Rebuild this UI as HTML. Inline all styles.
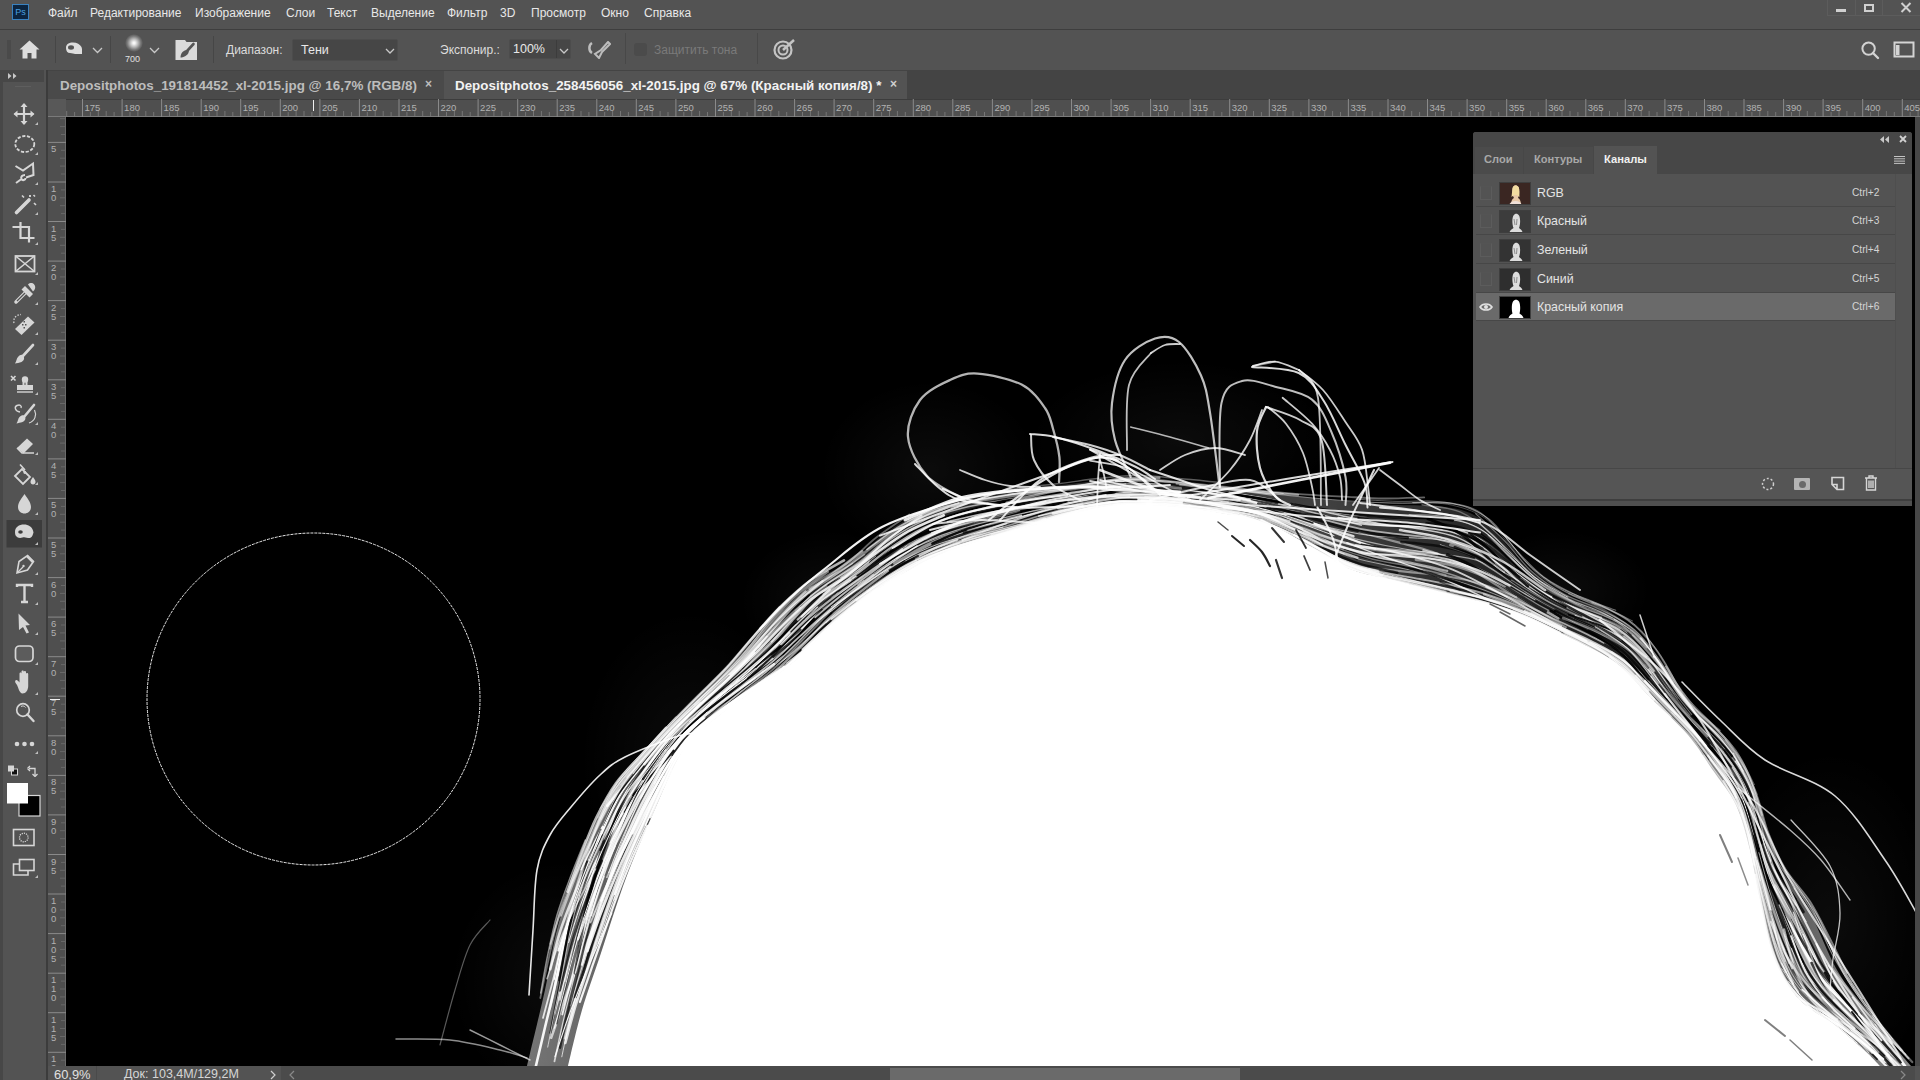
<!DOCTYPE html>
<html><head><meta charset="utf-8">
<style>
*{margin:0;padding:0;box-sizing:border-box}
html,body{width:1920px;height:1080px;overflow:hidden;background:#535353;font-family:"Liberation Sans",sans-serif;color:#e6e6e6}
.abs{position:absolute}
#menubar{left:0;top:0;width:1920px;height:29px;background:#535353}
#menubar .m{position:absolute;top:6px;font-size:12px;color:#e8e8e8;white-space:nowrap}
#sep1{left:0;top:29px;width:1920px;height:1px;background:#3e3e3e}
#optbar{left:0;top:30px;width:1920px;height:40px;background:#535353}
#tabbar{left:48px;top:70px;width:1872px;height:29px;background:#444444}
#toolbar{left:3px;top:70px;width:43px;height:996px;background:#535353}
#leftgap{left:0;top:70px;width:3px;height:1010px;background:#474747}
#gap2{left:46px;top:70px;width:2px;height:1010px;background:#3c3c3c}
#rulerTop{left:48px;top:99px;width:1872px;height:18px;background:#4f4f4f;border-top:1px solid #3c3c3c}
#rulerLeft{left:48px;top:117px;width:18px;height:949px;background:#4f4f4f}
#canvas{left:66px;top:117px;width:1849px;height:949px;background:#000;overflow:hidden}
#vscroll{left:1915px;top:117px;width:5px;height:949px;background:#474747}
#status{left:48px;top:1066px;width:1872px;height:14px;background:#535353}
</style></head><body>
<div id="menubar" class="abs">
  <div class="abs" style="left:12px;top:4px;width:17px;height:16px;background:#0c2540;border:1px solid #3a82c0;color:#4aa0e0;font-size:9px;line-height:14px;text-align:center">Ps</div>
  <span class="m" style="left:48px">Файл</span>
  <span class="m" style="left:90px">Редактирование</span>
  <span class="m" style="left:195px">Изображение</span>
  <span class="m" style="left:286px">Слои</span>
  <span class="m" style="left:327px">Текст</span>
  <span class="m" style="left:371px">Выделение</span>
  <span class="m" style="left:447px">Фильтр</span>
  <span class="m" style="left:500px">3D</span>
  <span class="m" style="left:531px">Просмотр</span>
  <span class="m" style="left:601px">Окно</span>
  <span class="m" style="left:644px">Справка</span>
  <div class="abs" style="left:1827px;top:0;width:93px;height:16px;border-left:1px solid #5c5c5c;border-bottom:1px solid #5c5c5c"></div>
  <div class="abs" style="left:1855px;top:0;width:1px;height:16px;background:#5c5c5c"></div>
  <div class="abs" style="left:1882px;top:0;width:1px;height:16px;background:#5c5c5c"></div>
  <div class="abs" style="left:1836px;top:9px;width:10px;height:3px;background:#d0d0d0"></div>
  <div class="abs" style="left:1864px;top:4px;width:10px;height:8px;border:2px solid #d0d0d0"></div>
  <svg class="abs" style="left:1900px;top:2px" width="12" height="11" viewBox="0 0 12 11"><path d="M1.5 1 L10.5 10 M10.5 1 L1.5 10" stroke="#d0d0d0" stroke-width="2"/></svg>
</div>
<div id="sep1" class="abs"></div>
<div id="optbar" class="abs">
  <div class="abs" style="left:7px;top:10px;width:4px;height:19px;background:#4a4a4a"></div>
  <svg class="abs" style="left:19px;top:10px" width="21" height="19" viewBox="0 0 21 19"><path d="M10.5 0.5 L20.5 9.5 L17.5 9.5 L17.5 18.5 L12.5 18.5 L12.5 13 L8.5 13 L8.5 18.5 L3.5 18.5 L3.5 9.5 L0.5 9.5 Z" fill="#dedede"/></svg>
  <div class="abs" style="left:55px;top:6px;width:1px;height:27px;background:#464646"></div>
  <svg class="abs" style="left:65px;top:12px" width="18" height="13" viewBox="0 0 18 13"><path d="M1 6 C1 2 4 0.5 8 0.5 C12 0.5 15 2.5 16.5 5 L17 7 L17 12 L10 12 C9 12 7 11 5 11 C2.5 11 1 9 1 6 Z" fill="#dedede"/><ellipse cx="6" cy="5.5" rx="3" ry="2.2" fill="#535353"/></svg>
  <svg class="abs" style="left:92px;top:17px" width="11" height="7" viewBox="0 0 11 7"><path d="M1 1 L5.5 5.5 L10 1" stroke="#c8c8c8" stroke-width="1.3" fill="none"/></svg>
  <div class="abs" style="left:110px;top:6px;width:1px;height:27px;background:#464646"></div>
  <div class="abs" style="left:125px;top:4px;width:18px;height:18px;border-radius:50%;background:radial-gradient(circle closest-side,#ffffff 0%,#f0f0f0 15%,#b8b8b8 45%,#7a7a7a 75%,rgba(83,83,83,0) 100%)"></div>
  <div class="abs" style="left:125px;top:24px;font-size:9px;color:#e0e0e0">700</div>
  <svg class="abs" style="left:149px;top:17px" width="11" height="7" viewBox="0 0 11 7"><path d="M1 1 L5.5 5.5 L10 1" stroke="#c8c8c8" stroke-width="1.3" fill="none"/></svg>
  <svg class="abs" style="left:175px;top:9px" width="23" height="22" viewBox="0 0 23 22"><path d="M0.5 1 L10 1 L11.5 3 L22 3 L22 21 L0.5 21 Z" fill="#dadada"/><path d="M18.5 5 L12.5 11.5" stroke="#555" stroke-width="2.6" stroke-linecap="round"/><path d="M13.5 11 C14.5 13 13 15.5 10.5 17 C8.5 18 6.5 18.5 5.5 18.5 C5.5 17 6 14.5 7.5 13 C9 11.5 12 10 13.5 11 Z" fill="#555"/></svg>
  <div class="abs" style="left:213px;top:6px;width:1px;height:27px;background:#464646"></div>
  <span class="abs" style="left:226px;top:13px;font-size:12px;color:#dcdcdc">Диапазон:</span>
  <div class="abs" style="left:292px;top:9px;width:106px;height:22px;background:#464646;border:1px solid #4c4c4c;border-radius:2px"></div>
  <span class="abs" style="left:301px;top:13px;font-size:12.5px;color:#e8e8e8">Тени</span>
  <svg class="abs" style="left:385px;top:18px" width="10" height="7" viewBox="0 0 10 7"><path d="M1 1 L5 5 L9 1" stroke="#c8c8c8" stroke-width="1.3" fill="none"/></svg>
  <span class="abs" style="left:440px;top:13px;font-size:12px;color:#dcdcdc">Экспонир.:</span>
  <div class="abs" style="left:509px;top:9px;width:62px;height:20px;background:#464646;border:1px solid #4c4c4c;border-radius:2px"></div>
  <div class="abs" style="left:556px;top:10px;width:1px;height:18px;background:#3c3c3c"></div>
  <span class="abs" style="left:513px;top:12px;font-size:12.5px;color:#e8e8e8">100%</span>
  <svg class="abs" style="left:559px;top:18px" width="10" height="7" viewBox="0 0 10 7"><path d="M1 1 L5 5 L9 1" stroke="#c8c8c8" stroke-width="1.3" fill="none"/></svg>
  <svg class="abs" style="left:587px;top:11px" width="24" height="18" viewBox="0 0 24 18"><path d="M5 2 C1.5 4 1.5 10 5 12" stroke="#bdbdbd" stroke-width="2.5" fill="none"/><path d="M21 1 L23 3 L15 11 L12 17 L8 13 L14 9 Z" stroke="#bdbdbd" stroke-width="2" fill="none"/></svg>
  <div class="abs" style="left:625px;top:3px;width:1px;height:31px;background:#484848"></div>
  <div class="abs" style="left:634px;top:13px;width:13px;height:13px;border-radius:3px;background:#4b4b4b"></div>
  <span class="abs" style="left:654px;top:13px;font-size:12px;color:#7a7a7a">Защитить тона</span>
  <div class="abs" style="left:757px;top:3px;width:1px;height:31px;background:#484848"></div>
  <svg class="abs" style="left:773px;top:9px" width="23" height="21" viewBox="0 0 23 21"><circle cx="10" cy="11" r="8.5" stroke="#c4c4c4" stroke-width="2.2" fill="none"/><circle cx="10" cy="11" r="4.5" stroke="#c4c4c4" stroke-width="2" fill="none"/><path d="M10 11 L21 1" stroke="#c4c4c4" stroke-width="2.5"/></svg>
  <svg class="abs" style="left:1859px;top:10px" width="22" height="20" viewBox="0 0 22 20"><circle cx="9.6" cy="8.6" r="6.2" stroke="#d2d2d2" stroke-width="2" fill="none"/><path d="M14 13 L19 18" stroke="#d2d2d2" stroke-width="2.4" stroke-linecap="round"/></svg>
  <svg class="abs" style="left:1893px;top:11px" width="22" height="17" viewBox="0 0 22 17"><rect x="1.5" y="1.5" width="19" height="14" stroke="#d4d4d4" stroke-width="2" fill="none"/><rect x="3" y="4" width="3.5" height="10" fill="#d4d4d4"/></svg>
</div>
<div id="leftgap" class="abs"></div>
<div id="toolbar" class="abs">
  <div class="abs" style="left:0;top:0;width:41px;height:12px;background:#474747"></div>
  <svg class="abs" style="left:5px;top:3px" width="10" height="6" viewBox="0 0 10 6"><path d="M0 0 L3.5 3 L0 6 Z M5 0 L8.5 3 L5 6 Z" fill="#c8c8c8"/></svg>
  <div class="abs" style="left:12px;top:16px;width:16px;height:1px;background:#5e5e5e"></div>
</div>
<div id="gap2" class="abs"></div>
<svg class="abs" style="left:0;top:0" width="48" height="1080" viewBox="0 0 48 1080"><path d="M24 104 V124 M14.5 114 H33.5" stroke="#d6d6d6" stroke-width="2.2"/><path d="M24 103 L20.5 107 H27.5 Z M24 125 L20.5 121 H27.5 Z M13.5 114 L17.5 110.5 V117.5 Z M34.5 114 L30.5 110.5 V117.5 Z" fill="#d6d6d6"/><path d="M35 125 L38 125 L38 122 Z" fill="#bdbdbd"/><ellipse cx="24.8" cy="144" rx="9.5" ry="8" fill="none" stroke="#d6d6d6" stroke-width="1.8" stroke-dasharray="3.2 1.6"/><path d="M35 155 L38 155 L38 152 Z" fill="#bdbdbd"/><path d="M15.5 166 L23 170.5 L33 163.5 L33.5 175 L26 177.5 M25 175 C22 175 20.5 177 21.5 179 C22.5 181 25.5 180 25.5 178 M21.5 179 L16 183" fill="none" stroke="#d6d6d6" stroke-width="2"/><path d="M35 185 L38 185 L38 182 Z" fill="#bdbdbd"/><path d="M16.5 212.5 L29 200" stroke="#d6d6d6" stroke-width="3.6" stroke-linecap="round"/><path d="M22 195.5 L24 197.5 M33.5 195 L35 196.5 M34 203 L36 205 M30 195 V197 M29 196 H31" stroke="#d6d6d6" stroke-width="1.6"/><path d="M35 215 L38 215 L38 212 Z" fill="#bdbdbd"/><path d="M12.5 227 H29 V242.5 M20.5 222 V238 H34.5" fill="none" stroke="#d6d6d6" stroke-width="2.2"/><path d="M35 245 L38 245 L38 242 Z" fill="#bdbdbd"/><rect x="15.5" y="256" width="19" height="15.5" fill="none" stroke="#d6d6d6" stroke-width="1.8"/><path d="M15.5 256 L34.5 271.5 M34.5 256 L15.5 271.5" stroke="#d6d6d6" stroke-width="1.6"/><path d="M35 275 L38 275 L38 272 Z" fill="#bdbdbd"/><path d="M16 302 L27 291" stroke="#d6d6d6" stroke-width="3.5" stroke-linecap="round" fill="none"/><path d="M17 301 L27 291" stroke="#535353" stroke-width="1.2"/><path d="M25 286 L33 294 L29.5 297.5 L21.5 289.5 Z M28 284.5 C30 282.5 33 282.5 34.5 285 C36 287 35 290 33 291.5 Z" fill="#d6d6d6"/><path d="M35 305 L38 305 L38 302 Z" fill="#bdbdbd"/><path d="M15 329 L28 316.5 L34.5 322.5 L21.5 335 Z" fill="#d6d6d6"/><path d="M22 324 h1.5v1.5h-1.5z M25 324 h1.5v1.5h-1.5z M23.5 321 h1.5v1.5h-1.5z M23.5 327 h1.5v1.5h-1.5z" fill="#535353"/><path d="M14 323 C13 318 16 315 21 314.5" fill="none" stroke="#d6d6d6" stroke-width="1.3" stroke-dasharray="1.5 1.5"/><path d="M35 335 L38 335 L38 332 Z" fill="#bdbdbd"/><path d="M33 345 L22 357" stroke="#d6d6d6" stroke-width="2.6" stroke-linecap="round"/><path d="M22.5 355 C25 357 24.5 360.5 21.5 362 C19.5 363 16.5 363 15 363.5 C16.5 361.5 16.5 358.5 18 357 C19.5 355.5 21 354.5 22.5 355 Z" fill="#d6d6d6"/><path d="M35 365 L38 365 L38 362 Z" fill="#bdbdbd"/><circle cx="25" cy="379.5" r="3.2" fill="#d6d6d6"/><path d="M23.5 381 V385 M26.5 381 V385" stroke="#d6d6d6" stroke-width="2"/><path d="M17 385 H33 V390 H17 Z" fill="#d6d6d6"/><path d="M17 392 H33" stroke="#d6d6d6" stroke-width="1.4"/><path d="M11 376 L15.5 380.5 M15.5 376 L11 380.5" stroke="#d6d6d6" stroke-width="1.6"/><path d="M35 395 L38 395 L38 392 Z" fill="#bdbdbd"/><path d="M34 405 L24 417" stroke="#d6d6d6" stroke-width="2.6" stroke-linecap="round"/><path d="M24 415.5 C26.5 417.5 25.5 421 22.5 422 C20.5 422.5 18 423 16.5 423.5 C18 421.5 18 418.5 19.5 417 C21 415.5 22.5 415 24 415.5 Z" fill="#d6d6d6"/><path d="M20 412 C15 411 14 407 17 405.5 C20 404 22 406 21 408" fill="none" stroke="#d6d6d6" stroke-width="1.4"/><path d="M34.5 410 C37 415 35 421 29 423" fill="none" stroke="#d6d6d6" stroke-width="1.2"/><path d="M35 425 L38 425 L38 422 Z" fill="#bdbdbd"/><path d="M17 448 L27 438.5 L33 444 L23.5 453.5 Z" fill="#d6d6d6"/><path d="M17 448 L22 453 H34" fill="none" stroke="#d6d6d6" stroke-width="1.5"/><path d="M35 455 L38 455 L38 452 Z" fill="#bdbdbd"/><path d="M15 476 L22 469 L30 477 L23 484 Z" fill="none" stroke="#d6d6d6" stroke-width="1.8"/><path d="M20 464.5 L25 470" stroke="#d6d6d6" stroke-width="1.6"/><circle cx="24.8" cy="472.5" r="1.4" fill="#d6d6d6"/><path d="M33 477 C34.5 479 35.5 480.5 35.5 482 C35.5 483.5 34.5 484.5 33 484.5 C31.5 484.5 30.5 483.5 30.5 482 C30.5 480.5 31.5 479 33 477 Z" fill="#d6d6d6"/><path d="M35 485 L38 485 L38 482 Z" fill="#bdbdbd"/><path d="M24.5 494 C27 498 31 502 31 507 C31 511 28 513.5 24.5 513.5 C21 513.5 18 511 18 507 C18 502 22 498 24.5 494 Z" fill="#d6d6d6"/><path d="M35 515 L38 515 L38 512 Z" fill="#bdbdbd"/><rect x="6.5" y="520" width="35.5" height="27.5" fill="#3c3c3c"/><path d="M15 532 C15 527 19 524.5 24 524.5 C28.5 524.5 32 527 33 530.5 L33.5 532.5 C33 534 32.5 537 30 538 C28 538.5 25 536.5 22.5 537.5 C20 538.5 17.5 538 16 536 C15.3 535 15 533.5 15 532 Z" fill="#d6d6d6"/><ellipse cx="20.5" cy="532" rx="2.3" ry="1.8" fill="#3c3c3c"/><path d="M35 545 L38 545 L38 542 Z" fill="#bdbdbd"/><path d="M17 573 L19 561.5 L27.5 555.5 L33.5 561.5 L27.5 570 Z" fill="none" stroke="#d6d6d6" stroke-width="1.6"/><path d="M27 556 L33 562" stroke="#d6d6d6" stroke-width="2.5"/><path d="M17.5 572.5 L23 567" stroke="#d6d6d6" stroke-width="1.2"/><circle cx="23.5" cy="566" r="1.2" fill="#d6d6d6"/><path d="M35 575 L38 575 L38 572 Z" fill="#bdbdbd"/><path d="M17 587 V585 H32 V587 M24.5 585.5 V602 M21 602 H28" fill="none" stroke="#d6d6d6" stroke-width="2.4"/><path d="M35 605 L38 605 L38 602 Z" fill="#bdbdbd"/><path d="M18.5 613.5 L30 625 L25.5 625.5 L29 632.5 L26.5 633.5 L23 627 L19 630 Z" fill="#d6d6d6"/><path d="M35 635 L38 635 L38 632 Z" fill="#bdbdbd"/><rect x="15.5" y="646" width="17.5" height="15.5" rx="4" fill="#5c5c5c" stroke="#d6d6d6" stroke-width="1.7"/><path d="M35 665 L38 665 L38 662 Z" fill="#bdbdbd"/><path d="M17 685 C15.5 683 14.5 681.5 15.5 680.5 C16.5 679.5 18 680.5 19.5 682.5 V673.5 C19.5 672 21.5 672 21.5 673.5 V680 V671.5 C21.5 670 23.8 670 23.8 671.5 V680 V672 C23.8 670.5 26 670.5 26 672 V680.5 V674 C26 672.5 28.2 672.5 28.2 674 V686 C28.2 690 26 693.5 22.5 693.5 C19.5 693.5 18.5 688 17 685 Z" fill="#d6d6d6"/><path d="M35 695 L38 695 L38 692 Z" fill="#bdbdbd"/><circle cx="23" cy="710" r="6.3" fill="none" stroke="#d6d6d6" stroke-width="1.7"/><path d="M27.5 714.5 L33.5 721" stroke="#d6d6d6" stroke-width="2.4" stroke-linecap="round"/><path d="M21 706.5 C22.5 705.5 24.5 706 25.5 707.5" stroke="#d6d6d6" stroke-width="1" fill="none"/><circle cx="17" cy="744" r="2.3" fill="#d6d6d6"/><circle cx="24.5" cy="744" r="2.3" fill="#d6d6d6"/><circle cx="32" cy="744" r="2.3" fill="#d6d6d6"/><path d="M35 754 L38 754 L38 751 Z" fill="#bdbdbd"/><rect x="11.5" y="769" width="6" height="6" fill="#111" stroke="#d6d6d6" stroke-width="1"/><rect x="8" y="765.5" width="6" height="6" fill="#d6d6d6"/><path d="M29 768.5 H35 V775 M27.5 768.5 L30 766 M27.5 768.5 L30 771 M35 776.5 L32.5 774 M35 776.5 L37.5 774" fill="none" stroke="#d6d6d6" stroke-width="1.3"/><rect x="19" y="795.5" width="21" height="20.5" fill="#000" stroke="#d8d8d8" stroke-width="1.2"/><rect x="7" y="783" width="21" height="20.5" fill="#fff"/><rect x="13.5" y="829.5" width="20.5" height="16" fill="none" stroke="#d6d6d6" stroke-width="1.6"/><circle cx="23.8" cy="837.5" r="4.3" fill="none" stroke="#d6d6d6" stroke-width="1.3" stroke-dasharray="1.2 1"/><rect x="19.5" y="859.5" width="14.5" height="11" fill="#535353" stroke="#d6d6d6" stroke-width="1.6"/><path d="M19.5 864 H13.5 V875 H28 V870.5" fill="none" stroke="#d6d6d6" stroke-width="1.6"/><path d="M35 878 L38 878 L38 875 Z" fill="#bdbdbd"/></svg>
<div id="tabbar" class="abs">
  <div class="abs" style="left:0;top:1px;width:396px;height:28px;background:#4a4a4a"></div>
  <span class="abs" style="left:12px;top:8px;font-size:13.4px;font-weight:bold;color:#bdbdbd;white-space:nowrap">Depositphotos_191814452_xl-2015.jpg @ 16,7% (RGB/8)</span>
  <span class="abs" style="left:377px;top:7px;font-size:12px;font-weight:bold;color:#bdbdbd">×</span>
  <div class="abs" style="left:396px;top:1px;width:463px;height:28px;background:#535353"></div>
  <span class="abs" style="left:407px;top:8px;font-size:13.4px;font-weight:bold;color:#f2f2f2;white-space:nowrap">Depositphotos_258456056_xl-2015.jpg @ 67% (Красный копия/8) *</span>
  <span class="abs" style="left:842px;top:7px;font-size:12px;font-weight:bold;color:#cfcfcf">×</span>
</div>
<div id="rulerTop" class="abs"><svg class="abs" style="left:0;top:-1px" width="1872" height="18" viewBox="0 0 1872 18"><rect x="0" y="0" width="18" height="18" fill="#585858"/><rect x="0" y="17" width="1872" height="1" fill="#7a7a7a"/><path d="M34.5 0V18 M74.1 0V18 M113.6 0V18 M153.2 0V18 M192.7 0V18 M232.3 0V18 M271.9 0V18 M311.4 0V18 M351.0 0V18 M390.5 0V18 M430.1 0V18 M469.7 0V18 M509.2 0V18 M548.8 0V18 M588.3 0V18 M627.9 0V18 M667.5 0V18 M707.0 0V18 M746.6 0V18 M786.1 0V18 M825.7 0V18 M865.3 0V18 M904.8 0V18 M944.4 0V18 M983.9 0V18 M1023.5 0V18 M1063.1 0V18 M1102.6 0V18 M1142.2 0V18 M1181.7 0V18 M1221.3 0V18 M1260.9 0V18 M1300.4 0V18 M1340.0 0V18 M1379.5 0V18 M1419.1 0V18 M1458.7 0V18 M1498.2 0V18 M1537.8 0V18 M1577.3 0V18 M1616.9 0V18 M1656.5 0V18 M1696.0 0V18 M1735.6 0V18 M1775.1 0V18 M1814.7 0V18 M1854.3 0V18" stroke="#8a8a8a" stroke-width="1"/><path d="M18.7 12V17 M26.6 13V17 M42.4 13V17 M50.3 12V17 M58.2 12V17 M66.1 13V17 M82.0 13V17 M89.9 12V17 M97.8 12V17 M105.7 13V17 M121.5 13V17 M129.4 12V17 M137.4 12V17 M145.3 13V17 M161.1 13V17 M169.0 12V17 M176.9 12V17 M184.8 13V17 M200.7 13V17 M208.6 12V17 M216.5 12V17 M224.4 13V17 M240.2 13V17 M248.1 12V17 M256.0 12V17 M263.9 13V17 M279.8 13V17 M287.7 12V17 M295.6 12V17 M303.5 13V17 M319.3 13V17 M327.2 12V17 M335.2 12V17 M343.1 13V17 M358.9 13V17 M366.8 12V17 M374.7 12V17 M382.6 13V17 M398.5 13V17 M406.4 12V17 M414.3 12V17 M422.2 13V17 M438.0 13V17 M445.9 12V17 M453.8 12V17 M461.7 13V17 M477.6 13V17 M485.5 12V17 M493.4 12V17 M501.3 13V17 M517.1 13V17 M525.0 12V17 M533.0 12V17 M540.9 13V17 M556.7 13V17 M564.6 12V17 M572.5 12V17 M580.4 13V17 M596.3 13V17 M604.2 12V17 M612.1 12V17 M620.0 13V17 M635.8 13V17 M643.7 12V17 M651.6 12V17 M659.5 13V17 M675.4 13V17 M683.3 12V17 M691.2 12V17 M699.1 13V17 M714.9 13V17 M722.8 12V17 M730.8 12V17 M738.7 13V17 M754.5 13V17 M762.4 12V17 M770.3 12V17 M778.2 13V17 M794.1 13V17 M802.0 12V17 M809.9 12V17 M817.8 13V17 M833.6 13V17 M841.5 12V17 M849.4 12V17 M857.3 13V17 M873.2 13V17 M881.1 12V17 M889.0 12V17 M896.9 13V17 M912.7 13V17 M920.6 12V17 M928.6 12V17 M936.5 13V17 M952.3 13V17 M960.2 12V17 M968.1 12V17 M976.0 13V17 M991.9 13V17 M999.8 12V17 M1007.7 12V17 M1015.6 13V17 M1031.4 13V17 M1039.3 12V17 M1047.2 12V17 M1055.1 13V17 M1071.0 13V17 M1078.9 12V17 M1086.8 12V17 M1094.7 13V17 M1110.5 13V17 M1118.4 12V17 M1126.4 12V17 M1134.3 13V17 M1150.1 13V17 M1158.0 12V17 M1165.9 12V17 M1173.8 13V17 M1189.7 13V17 M1197.6 12V17 M1205.5 12V17 M1213.4 13V17 M1229.2 13V17 M1237.1 12V17 M1245.0 12V17 M1252.9 13V17 M1268.8 13V17 M1276.7 12V17 M1284.6 12V17 M1292.5 13V17 M1308.3 13V17 M1316.2 12V17 M1324.2 12V17 M1332.1 13V17 M1347.9 13V17 M1355.8 12V17 M1363.7 12V17 M1371.6 13V17 M1387.5 13V17 M1395.4 12V17 M1403.3 12V17 M1411.2 13V17 M1427.0 13V17 M1434.9 12V17 M1442.8 12V17 M1450.7 13V17 M1466.6 13V17 M1474.5 12V17 M1482.4 12V17 M1490.3 13V17 M1506.1 13V17 M1514.0 12V17 M1522.0 12V17 M1529.9 13V17 M1545.7 13V17 M1553.6 12V17 M1561.5 12V17 M1569.4 13V17 M1585.3 13V17 M1593.2 12V17 M1601.1 12V17 M1609.0 13V17 M1624.8 13V17 M1632.7 12V17 M1640.6 12V17 M1648.5 13V17 M1664.4 13V17 M1672.3 12V17 M1680.2 12V17 M1688.1 13V17 M1703.9 13V17 M1711.8 12V17 M1719.8 12V17 M1727.7 13V17 M1743.5 13V17 M1751.4 12V17 M1759.3 12V17 M1767.2 13V17 M1783.1 13V17 M1791.0 12V17 M1798.9 12V17 M1806.8 13V17 M1822.6 13V17 M1830.5 12V17 M1838.4 12V17 M1846.3 13V17 M1862.2 13V17 M1870.1 12V17" stroke="#767676" stroke-width="1"/><g font-family="Liberation Sans" font-size="9.5" fill="#b2b2b2"><text x="36.5" y="12">175</text><text x="76.1" y="12">180</text><text x="115.6" y="12">185</text><text x="155.2" y="12">190</text><text x="194.7" y="12">195</text><text x="234.3" y="12">200</text><text x="273.9" y="12">205</text><text x="313.4" y="12">210</text><text x="353.0" y="12">215</text><text x="392.5" y="12">220</text><text x="432.1" y="12">225</text><text x="471.7" y="12">230</text><text x="511.2" y="12">235</text><text x="550.8" y="12">240</text><text x="590.3" y="12">245</text><text x="629.9" y="12">250</text><text x="669.5" y="12">255</text><text x="709.0" y="12">260</text><text x="748.6" y="12">265</text><text x="788.1" y="12">270</text><text x="827.7" y="12">275</text><text x="867.3" y="12">280</text><text x="906.8" y="12">285</text><text x="946.4" y="12">290</text><text x="985.9" y="12">295</text><text x="1025.5" y="12">300</text><text x="1065.1" y="12">305</text><text x="1104.6" y="12">310</text><text x="1144.2" y="12">315</text><text x="1183.7" y="12">320</text><text x="1223.3" y="12">325</text><text x="1262.9" y="12">330</text><text x="1302.4" y="12">335</text><text x="1342.0" y="12">340</text><text x="1381.5" y="12">345</text><text x="1421.1" y="12">350</text><text x="1460.7" y="12">355</text><text x="1500.2" y="12">360</text><text x="1539.8" y="12">365</text><text x="1579.3" y="12">370</text><text x="1618.9" y="12">375</text><text x="1658.5" y="12">380</text><text x="1698.0" y="12">385</text><text x="1737.6" y="12">390</text><text x="1777.1" y="12">395</text><text x="1816.7" y="12">400</text><text x="1856.3" y="12">405</text></g></svg></div>
<div id="rulerLeft" class="abs"><svg class="abs" style="left:0;top:0" width="18" height="949" viewBox="0 0 18 949"><rect x="17" y="0" width="1" height="949" fill="#6a6a6a"/><path d="M0 25.4H18 M0 65.0H18 M0 104.5H18 M0 144.1H18 M0 183.6H18 M0 223.2H18 M0 262.8H18 M0 302.3H18 M0 341.9H18 M0 381.4H18 M0 421.0H18 M0 460.6H18 M0 500.1H18 M0 539.7H18 M0 579.2H18 M0 618.8H18 M0 658.4H18 M0 697.9H18 M0 737.5H18 M0 777.0H18 M0 816.6H18 M0 856.2H18 M0 895.7H18 M0 935.3H18" stroke="#8a8a8a" stroke-width="1"/><path d="M12 1.7H17 M12 9.6H17 M13 17.5H17 M13 33.3H17 M12 41.2H17 M12 49.1H17 M13 57.0H17 M13 72.9H17 M12 80.8H17 M12 88.7H17 M13 96.6H17 M13 112.4H17 M12 120.3H17 M12 128.3H17 M13 136.2H17 M13 152.0H17 M12 159.9H17 M12 167.8H17 M13 175.7H17 M13 191.6H17 M12 199.5H17 M12 207.4H17 M13 215.3H17 M13 231.1H17 M12 239.0H17 M12 246.9H17 M13 254.8H17 M13 270.7H17 M12 278.6H17 M12 286.5H17 M13 294.4H17 M13 310.2H17 M12 318.1H17 M12 326.1H17 M13 334.0H17 M13 349.8H17 M12 357.7H17 M12 365.6H17 M13 373.5H17 M13 389.4H17 M12 397.3H17 M12 405.2H17 M13 413.1H17 M13 428.9H17 M12 436.8H17 M12 444.7H17 M13 452.6H17 M13 468.5H17 M12 476.4H17 M12 484.3H17 M13 492.2H17 M13 508.0H17 M12 515.9H17 M12 523.9H17 M13 531.8H17 M13 547.6H17 M12 555.5H17 M12 563.4H17 M13 571.3H17 M13 587.2H17 M12 595.1H17 M12 603.0H17 M13 610.9H17 M13 626.7H17 M12 634.6H17 M12 642.5H17 M13 650.4H17 M13 666.3H17 M12 674.2H17 M12 682.1H17 M13 690.0H17 M13 705.8H17 M12 713.7H17 M12 721.7H17 M13 729.6H17 M13 745.4H17 M12 753.3H17 M12 761.2H17 M13 769.1H17 M13 785.0H17 M12 792.9H17 M12 800.8H17 M13 808.7H17 M13 824.5H17 M12 832.4H17 M12 840.3H17 M13 848.2H17 M13 864.1H17 M12 872.0H17 M12 879.9H17 M13 887.8H17 M13 903.6H17 M12 911.5H17 M12 919.5H17 M13 927.4H17 M13 943.2H17" stroke="#686868" stroke-width="1"/><g font-family="Liberation Sans" font-size="9.5" fill="#b2b2b2"><text x="3" y="35.4">5</text><text x="3" y="75.0">1</text><text x="3" y="84.0">0</text><text x="3" y="114.5">1</text><text x="3" y="123.5">5</text><text x="3" y="154.1">2</text><text x="3" y="163.1">0</text><text x="3" y="193.6">2</text><text x="3" y="202.6">5</text><text x="3" y="233.2">3</text><text x="3" y="242.2">0</text><text x="3" y="272.8">3</text><text x="3" y="281.8">5</text><text x="3" y="312.3">4</text><text x="3" y="321.3">0</text><text x="3" y="351.9">4</text><text x="3" y="360.9">5</text><text x="3" y="391.4">5</text><text x="3" y="400.4">0</text><text x="3" y="431.0">5</text><text x="3" y="440.0">5</text><text x="3" y="470.6">6</text><text x="3" y="479.6">0</text><text x="3" y="510.1">6</text><text x="3" y="519.1">5</text><text x="3" y="549.7">7</text><text x="3" y="558.7">0</text><text x="3" y="589.2">7</text><text x="3" y="598.2">5</text><text x="3" y="628.8">8</text><text x="3" y="637.8">0</text><text x="3" y="668.4">8</text><text x="3" y="677.4">5</text><text x="3" y="707.9">9</text><text x="3" y="716.9">0</text><text x="3" y="747.5">9</text><text x="3" y="756.5">5</text><text x="3" y="787.0">1</text><text x="3" y="796.0">0</text><text x="3" y="805.0">0</text><text x="3" y="826.6">1</text><text x="3" y="835.6">0</text><text x="3" y="844.6">5</text><text x="3" y="866.2">1</text><text x="3" y="875.2">1</text><text x="3" y="884.2">0</text><text x="3" y="905.7">1</text><text x="3" y="914.7">1</text><text x="3" y="923.7">5</text><text x="3" y="945.3">1</text><text x="3" y="954.3">2</text><text x="3" y="963.3">0</text></g></svg></div>
<div class="abs" style="left:313px;top:100px;width:1px;height:11px;background:#f0f0f0"></div><div class="abs" style="left:50px;top:699px;width:10px;height:1px;background:#f0f0f0"></div>
<div id="canvas" class="abs"><svg class="abs" style="left:0;top:0" width="1849" height="949" viewBox="66 117 1849 949"><defs><radialGradient id="haze" cx="50%" cy="50%" r="50%"><stop offset="0" stop-color="#333"/><stop offset="1" stop-color="#000" stop-opacity="0"/></radialGradient></defs><defs><linearGradient id="bandg" gradientUnits="userSpaceOnUse" x1="527" y1="0" x2="1911" y2="0"><stop offset="0" stop-color="#fff" stop-opacity="0.45"/><stop offset="0.08" stop-color="#fff" stop-opacity="0.35"/><stop offset="0.15" stop-color="#fff" stop-opacity="0.1"/><stop offset="0.33" stop-color="#fff" stop-opacity="0.15"/><stop offset="0.58" stop-color="#fff" stop-opacity="0.25"/><stop offset="0.72" stop-color="#fff" stop-opacity="0.12"/><stop offset="0.85" stop-color="#fff" stop-opacity="0.18"/><stop offset="1" stop-color="#fff" stop-opacity="0.55"/></linearGradient></defs><defs><radialGradient id="hz"><stop offset="0" stop-color="#fff" stop-opacity="0.045"/><stop offset="1" stop-color="#fff" stop-opacity="0"/></radialGradient></defs><ellipse cx="690" cy="760" rx="110" ry="150" fill="url(#hz)"/><ellipse cx="560" cy="980" rx="110" ry="120" fill="url(#hz)"/><ellipse cx="930" cy="470" rx="110" ry="90" fill="url(#hz)"/><ellipse cx="1180" cy="440" rx="150" ry="80" fill="url(#hz)"/><ellipse cx="1560" cy="590" rx="90" ry="60" fill="url(#hz)"/><ellipse cx="1830" cy="920" rx="110" ry="170" fill="url(#hz)"/><ellipse cx="830" cy="600" rx="90" ry="70" fill="url(#hz)"/><path d="M527.0 1066.0 C530.0 1053.3 539.2 1015.7 545.0 990.0 C550.8 964.3 552.2 942.5 562.0 912.0 C571.8 881.5 591.0 832.3 604.0 807.0 C617.0 781.7 627.3 775.0 640.0 760.0 C652.7 745.0 664.2 733.0 680.0 717.0 C695.8 701.0 719.7 679.7 735.0 664.0 C750.3 648.3 759.5 635.7 772.0 623.0 C784.5 610.3 797.5 597.7 810.0 588.0 C822.5 578.3 833.7 574.7 847.0 565.0 C860.3 555.3 874.8 540.0 890.0 530.0 C905.2 520.0 919.0 511.5 938.0 505.0 C957.0 498.5 981.8 494.5 1004.0 491.0 C1026.2 487.5 1050.0 486.2 1071.0 484.0 C1092.0 481.8 1108.7 478.0 1130.0 478.0 C1151.3 478.0 1172.3 481.2 1199.0 484.0 C1225.7 486.8 1260.3 491.7 1290.0 495.0 C1319.7 498.3 1347.0 501.0 1377.0 504.0 C1407.0 507.0 1444.8 502.2 1470.0 513.0 C1495.2 523.8 1512.2 555.3 1528.0 569.0 C1543.8 582.7 1549.7 586.7 1565.0 595.0 C1580.3 603.3 1605.5 610.0 1620.0 619.0 C1634.5 628.0 1640.7 634.8 1652.0 649.0 C1663.3 663.2 1676.0 688.8 1688.0 704.0 C1700.0 719.2 1713.8 727.3 1724.0 740.0 C1734.2 752.7 1742.7 766.7 1749.0 780.0 C1755.3 793.3 1757.3 806.3 1762.0 820.0 C1766.7 833.7 1769.0 846.5 1777.0 862.0 C1785.0 877.5 1800.0 895.0 1810.0 913.0 C1820.0 931.0 1827.0 952.7 1837.0 970.0 C1847.0 987.3 1857.7 1001.0 1870.0 1017.0 C1882.3 1033.0 1904.2 1057.8 1911.0 1066.0 L1915 1070 L520 1070 Z" fill="url(#bandg)"/><g fill="none" stroke="#fff" stroke-linecap="round"><path d="M569.8 887.2 C572.2 881.0 579.3 862.4 584.4 850.1 C589.5 837.9 594.3 825.4 600.6 813.8 C606.9 802.1 613.9 790.7 621.9 780.2 C629.9 769.7 639.6 760.4 648.6 750.6 C657.6 740.9 666.6 731.1 676.0 721.7 C685.3 712.3 695.0 703.3 704.7 694.2 C714.3 685.1 724.3 676.3 733.6 666.9 C742.9 657.5 751.4 647.4 760.6 637.9 C769.7 628.3 778.7 618.5 788.4 609.6 C798.1 600.7 808.3 592.1 819.0 584.4 C829.7 576.7 847.0 567.0 852.7 563.5" stroke-width="1.2" stroke-opacity="0.40"/><path d="M1304.7 541.9 C1310.2 545.0 1326.3 554.9 1337.7 560.1 C1349.0 565.2 1361.0 569.1 1373.0 572.7 C1384.9 576.4 1397.2 578.8 1409.3 581.9 C1421.4 585.0 1439.5 590.0 1445.5 591.6" stroke-width="2.2" stroke-opacity="0.50"/><path d="M550.4 943.9 C552.4 937.6 558.0 918.4 562.7 905.9 C567.3 893.4 572.8 881.1 578.2 869.0 C583.6 856.8 589.0 844.6 595.0 832.8 C601.1 820.9 606.8 808.8 614.3 797.9 C621.7 787.0 631.1 777.4 639.8 767.4 C648.4 757.3 656.9 747.2 666.1 737.7 C675.3 728.2 690.1 714.9 694.9 710.4" stroke-width="1.8" stroke-opacity="0.43"/><path d="M639.0 792.3 C642.6 787.0 653.0 770.9 660.7 760.6 C668.4 750.4 676.3 740.1 685.3 730.9 C694.3 721.8 704.8 713.9 714.8 705.9 C724.9 697.8 740.4 686.5 745.6 682.6" stroke-width="2.2" stroke-opacity="0.81"/><path d="M761.6 671.7 C765.8 667.0 778.8 653.3 787.2 643.6 C795.6 634.0 803.2 623.1 812.0 613.7 C820.8 604.3 830.5 595.8 840.1 587.1 C849.6 578.4 864.5 565.6 869.4 561.3" stroke-width="2.2" stroke-opacity="0.47"/><path d="M1008.0 494.6 C1014.5 493.6 1033.9 490.7 1046.9 489.0 C1060.0 487.2 1073.0 485.6 1086.1 484.0 C1099.1 482.5 1112.2 479.9 1125.3 479.4 C1138.4 478.9 1151.6 480.1 1164.8 481.0 C1177.9 482.0 1191.0 483.6 1204.2 485.0 C1217.3 486.3 1230.5 487.9 1243.6 489.3 C1256.8 490.7 1276.6 492.8 1283.2 493.5" stroke-width="1.2" stroke-opacity="0.50"/><path d="M867.8 591.5 C873.1 588.1 888.5 577.2 899.3 570.8 C910.0 564.3 920.9 557.9 932.3 552.7 C943.7 547.6 955.8 543.7 967.7 539.8 C979.7 535.8 991.8 532.7 1003.9 529.2 C1016.0 525.8 1028.1 522.4 1040.2 519.1 C1052.3 515.9 1064.4 512.3 1076.7 509.6 C1088.9 506.9 1101.3 504.1 1113.7 502.9 C1126.2 501.7 1145.1 502.6 1151.4 502.6" stroke-width="2.6" stroke-opacity="0.55"/><path d="M621.1 785.0 C625.4 780.0 637.8 764.8 646.4 754.8 C655.1 744.9 663.8 735.0 672.9 725.5 C682.0 715.9 691.6 706.8 701.0 697.6 C710.5 688.3 720.4 679.5 729.5 670.0 C738.7 660.5 747.2 650.3 756.2 640.5 C765.1 630.7 773.6 620.5 783.1 611.1 C792.5 601.8 802.1 592.5 812.7 584.6 C823.3 576.7 835.8 571.4 846.5 563.5 C857.1 555.7 866.1 545.4 876.6 537.3 C887.0 529.1 903.9 518.3 909.3 514.5" stroke-width="1.8" stroke-opacity="0.40"/><path d="M1755.2 832.2 C1756.9 838.5 1761.2 857.7 1764.9 870.0 C1768.6 882.4 1773.5 894.0 1777.6 906.1 C1781.7 918.2 1785.1 930.6 1789.6 942.6 C1794.1 954.6 1798.1 967.2 1804.4 978.0 C1810.8 988.8 1819.3 998.2 1827.7 1007.3 C1836.1 1016.3 1846.2 1023.7 1855.1 1032.3 C1864.0 1040.9 1876.7 1054.6 1881.1 1059.0" stroke-width="1.5" stroke-opacity="0.63"/><path d="M1367.5 502.0 C1374.1 502.3 1394.1 503.0 1407.4 503.4 C1420.8 503.8 1434.7 502.0 1447.5 504.3 C1460.3 506.7 1473.8 510.6 1484.4 517.7 C1495.1 524.8 1502.4 537.2 1511.6 546.8 C1520.7 556.4 1529.0 567.2 1539.2 575.4 C1549.5 583.6 1561.3 590.2 1573.2 596.0 C1585.0 601.8 1598.8 604.2 1610.4 610.3 C1622.1 616.5 1633.5 624.0 1642.8 633.1 C1652.1 642.3 1658.9 654.2 1666.3 665.2 C1673.7 676.2 1678.9 689.0 1687.2 699.3 C1695.5 709.5 1707.1 717.1 1716.0 726.9 C1724.9 736.7 1733.9 746.8 1740.8 758.0 C1747.7 769.3 1754.6 788.2 1757.4 794.3" stroke-width="1.0" stroke-opacity="0.27"/><path d="M1781.1 909.3 C1783.2 915.4 1789.0 933.8 1793.7 945.7 C1798.5 957.6 1802.9 970.1 1809.6 980.7 C1816.2 991.3 1825.2 1000.3 1833.7 1009.4 C1842.2 1018.5 1851.9 1026.4 1860.7 1035.2 C1869.5 1044.1 1882.2 1057.9 1886.5 1062.5" stroke-width="1.5" stroke-opacity="0.87"/><path d="M1749.1 841.3 C1750.5 847.4 1754.6 865.7 1757.6 877.7 C1760.5 889.8 1763.5 901.8 1766.9 913.7 C1770.2 925.7 1773.0 937.9 1777.7 949.5 C1782.4 961.0 1787.7 972.9 1795.0 982.9 C1802.3 993.0 1812.0 1001.4 1821.5 1009.8 C1830.9 1018.1 1841.9 1024.7 1851.6 1032.9 C1861.3 1041.1 1874.8 1054.7 1879.5 1059.1" stroke-width="1.0" stroke-opacity="0.56"/><path d="M648.7 765.9 C652.9 760.9 664.7 745.2 673.6 735.8 C682.6 726.4 692.6 717.8 702.5 709.3 C712.3 700.7 722.7 692.8 732.7 684.5 C742.7 676.3 752.9 668.4 762.7 660.0 C772.5 651.6 781.7 642.6 791.3 634.1 C801.0 625.5 810.3 616.6 820.5 608.7 C830.6 600.9 841.7 594.2 852.3 587.0 C862.9 579.8 873.3 572.3 884.1 565.5 C895.0 558.7 905.9 551.9 917.4 546.4 C928.9 540.9 941.1 536.5 953.3 532.7 C965.6 528.9 984.5 525.1 990.8 523.6" stroke-width="1.0" stroke-opacity="0.62"/><path d="M1229.2 492.4 C1235.7 493.5 1255.3 496.5 1268.1 499.0 C1280.9 501.5 1293.5 504.5 1306.1 507.4 C1318.7 510.2 1331.1 513.4 1343.7 516.2 C1356.3 519.0 1368.9 521.9 1381.7 524.0 C1394.4 526.2 1407.3 526.7 1420.0 528.9 C1432.7 531.2 1446.0 532.8 1457.7 537.6 C1469.5 542.4 1480.2 550.3 1490.5 557.7 C1500.9 565.2 1509.5 574.5 1519.7 582.2 C1529.9 589.9 1540.7 597.5 1551.9 604.0 C1563.1 610.6 1575.3 615.6 1586.7 621.6 C1598.2 627.7 1615.1 637.2 1620.8 640.3" stroke-width="1.5" stroke-opacity="0.72"/><path d="M698.0 731.8 C702.9 727.9 717.3 715.8 727.3 708.3 C737.4 700.8 747.8 693.9 758.1 686.7 C768.4 679.6 783.9 669.0 789.1 665.5" stroke-width="1.8" stroke-opacity="0.67"/><path d="M758.4 686.9 C763.5 683.3 779.3 673.2 788.9 665.3 C798.5 657.4 806.9 647.9 816.0 639.4 C825.1 630.8 834.1 622.1 843.6 614.0 C853.1 605.8 862.9 597.9 873.1 590.7 C883.2 583.4 893.8 576.6 904.6 570.3 C915.4 564.0 926.3 557.7 937.8 552.7 C949.2 547.6 961.2 543.9 973.1 540.0 C985.0 536.1 997.1 532.8 1009.1 529.2 C1021.1 525.7 1039.1 520.4 1045.1 518.6" stroke-width="2.2" stroke-opacity="0.58"/><path d="M647.5 775.5 C651.3 770.3 661.9 754.1 670.4 744.4 C678.8 734.7 688.4 725.8 698.0 717.2 C707.6 708.6 723.0 696.7 728.0 692.6" stroke-width="1.8" stroke-opacity="0.95"/><path d="M1207.5 506.4 C1213.7 507.4 1232.7 509.4 1244.8 512.4 C1257.0 515.5 1268.8 520.0 1280.3 524.7 C1291.9 529.5 1302.7 535.7 1314.0 540.9 C1325.4 546.2 1336.5 552.1 1348.3 556.1 C1360.1 560.1 1372.6 562.2 1384.9 564.9 C1397.2 567.6 1409.7 569.6 1422.0 572.3 C1434.3 575.1 1446.7 578.0 1458.6 581.6 C1470.6 585.1 1482.2 589.2 1493.7 593.7 C1505.2 598.3 1521.9 606.4 1527.6 608.9" stroke-width="1.0" stroke-opacity="0.52"/><path d="M806.1 649.4 C810.7 645.1 824.0 631.9 833.4 623.6 C842.8 615.4 852.3 607.2 862.3 599.7 C872.3 592.2 882.7 585.3 893.4 578.7 C904.0 572.2 920.6 563.5 926.1 560.4" stroke-width="1.0" stroke-opacity="0.58"/><path d="M1540.3 592.3 C1546.1 595.0 1563.2 603.7 1575.2 608.6 C1587.1 613.4 1600.6 615.7 1612.1 621.5 C1623.5 627.3 1634.4 634.8 1643.7 643.4 C1652.9 652.1 1659.8 663.1 1667.5 673.4 C1675.2 683.6 1681.2 695.3 1689.9 704.8 C1698.6 714.3 1714.6 726.2 1719.6 730.5" stroke-width="2.2" stroke-opacity="0.34"/><path d="M1721.2 748.3 C1724.8 753.6 1737.1 769.0 1742.9 780.4 C1748.8 791.8 1752.3 804.4 1756.5 816.7 C1760.7 828.9 1763.2 841.9 1768.2 853.8 C1773.1 865.7 1779.7 876.9 1786.1 888.2 C1792.4 899.5 1802.9 916.0 1806.3 921.6" stroke-width="1.0" stroke-opacity="0.68"/><path d="M1019.1 528.8 C1025.1 526.9 1042.8 520.8 1054.7 517.3 C1066.7 513.8 1078.8 510.3 1091.0 507.9 C1103.2 505.5 1115.7 503.5 1128.1 502.8 C1140.5 502.1 1153.1 503.1 1165.6 503.8 C1178.1 504.5 1190.6 505.7 1203.0 507.2 C1215.4 508.6 1228.1 509.8 1240.2 512.6 C1252.4 515.3 1270.0 521.7 1276.0 523.5" stroke-width="1.8" stroke-opacity="0.76"/><path d="M1785.0 870.0 C1788.9 875.4 1801.5 891.3 1808.4 902.7 C1815.4 914.1 1820.7 926.4 1826.6 938.3 C1832.5 950.3 1837.3 962.8 1843.9 974.4 C1850.5 985.9 1858.3 996.9 1866.1 1007.7 C1873.9 1018.5 1886.5 1034.0 1890.6 1039.3" stroke-width="1.0" stroke-opacity="0.60"/><path d="M726.5 707.8 C731.6 704.1 746.9 693.2 757.1 685.9 C767.3 678.7 778.1 672.1 787.8 664.2 C797.5 656.3 806.0 647.0 815.3 638.6 C824.5 630.1 833.6 621.5 843.3 613.5 C852.9 605.5 862.7 597.7 873.0 590.6 C883.3 583.4 893.9 576.8 904.8 570.6 C915.7 564.4 926.7 558.4 938.2 553.5 C949.7 548.6 961.8 545.1 973.8 541.3 C985.7 537.6 997.9 534.4 1009.9 530.9 C1021.9 527.4 1033.9 523.8 1045.9 520.4 C1058.0 517.1 1076.2 512.5 1082.2 510.9" stroke-width="1.5" stroke-opacity="0.61"/><path d="M1846.0 1026.3 C1849.9 1030.6 1865.2 1048.2 1869.1 1052.5" stroke-width="1.2" stroke-opacity="0.78"/><path d="M559.9 1000.0 C561.4 993.7 565.6 974.8 568.4 962.2 C571.3 949.6 573.9 936.9 577.2 924.4 C580.6 911.9 584.5 899.5 588.6 887.2 C592.6 874.9 596.9 862.6 601.5 850.4 C606.1 838.3 610.6 826.0 616.3 814.3 C621.9 802.7 628.4 791.5 635.4 780.7 C642.5 769.9 650.3 759.6 658.4 749.6 C666.6 739.6 675.4 729.9 684.4 720.6 C693.5 711.3 703.3 702.6 712.8 693.7 C722.2 684.7 732.1 676.1 741.3 666.9 C750.4 657.6 758.9 647.6 767.8 638.1 C776.8 628.5 790.5 614.2 795.0 609.5" stroke-width="1.5" stroke-opacity="0.75"/><path d="M1781.7 968.7 C1785.4 973.7 1795.2 990.2 1804.2 999.0 C1813.1 1007.7 1825.2 1013.3 1835.3 1021.1 C1845.4 1028.9 1859.7 1041.8 1864.6 1045.9" stroke-width="1.0" stroke-opacity="0.65"/><path d="M778.3 661.6 C783.0 657.3 797.0 644.5 806.5 636.1 C815.9 627.6 825.2 619.0 835.1 611.1 C845.0 603.2 855.3 595.9 865.7 588.8 C876.1 581.6 886.6 574.6 897.5 568.2 C908.4 561.8 919.5 555.6 931.1 550.6 C942.6 545.6 954.9 542.0 967.0 538.3 C979.1 534.7 991.4 531.8 1003.6 528.6 C1015.9 525.5 1028.1 522.3 1040.3 519.3 C1052.5 516.2 1064.6 512.9 1077.0 510.3 C1089.3 507.8 1101.7 505.0 1114.2 504.0 C1126.6 503.0 1139.3 503.7 1151.9 504.3 C1164.4 504.9 1183.2 507.2 1189.4 507.7" stroke-width="1.0" stroke-opacity="0.56"/><path d="M1742.4 797.6 C1744.1 803.9 1749.9 822.8 1753.0 835.5 C1756.2 848.2 1758.4 861.1 1761.4 873.7 C1764.3 886.3 1767.8 898.5 1770.8 911.0 C1773.8 923.4 1775.7 936.3 1779.4 948.5 C1783.2 960.6 1790.9 977.9 1793.2 983.8" stroke-width="1.8" stroke-opacity="0.65"/><path d="M1827.9 1015.6 C1832.9 1019.6 1848.3 1031.0 1857.9 1039.4 C1867.5 1047.8 1881.1 1061.6 1885.7 1066.0" stroke-width="1.5" stroke-opacity="0.59"/><path d="M1807.9 948.7 C1810.2 954.8 1815.9 974.2 1821.9 985.2 C1827.9 996.1 1836.4 1005.0 1844.0 1014.5 C1851.7 1023.9 1863.9 1037.3 1867.9 1041.9" stroke-width="1.2" stroke-opacity="1.00"/><path d="M579.9 1002.0 C582.0 996.0 588.2 978.2 592.3 966.2 C596.5 954.3 600.6 942.5 604.8 930.6 C609.0 918.7 613.0 906.8 617.5 895.1 C621.9 883.3 626.6 871.7 631.5 860.1 C636.5 848.6 644.6 831.6 647.2 825.9" stroke-width="2.2" stroke-opacity="0.92"/><path d="M1106.9 497.9 C1113.2 497.5 1132.1 495.7 1144.8 495.7 C1157.4 495.7 1170.1 496.8 1182.8 497.9 C1195.4 498.9 1208.1 500.5 1220.7 502.1 C1233.3 503.8 1246.1 505.2 1258.5 507.8 C1270.8 510.4 1282.7 514.5 1294.8 517.8 C1306.9 521.2 1318.8 525.0 1331.1 527.9 C1343.4 530.8 1355.8 533.7 1368.6 535.3 C1381.3 536.9 1394.5 536.7 1407.5 537.6 C1420.5 538.5 1434.0 538.2 1446.5 540.8 C1459.0 543.5 1471.5 547.8 1482.5 553.4 C1493.5 559.0 1502.5 567.3 1512.8 574.3 C1523.0 581.3 1533.2 589.2 1544.3 595.5 C1555.4 601.8 1573.4 609.5 1579.2 612.2" stroke-width="1.0" stroke-opacity="0.65"/><path d="M660.1 745.2 C664.8 740.6 678.6 726.3 688.3 717.3 C698.0 708.4 708.3 700.1 718.3 691.7 C728.4 683.2 738.7 675.2 748.6 666.7 C758.5 658.3 767.9 649.5 777.6 640.8 C787.3 632.2 796.6 623.1 806.7 615.0 C816.8 607.0 832.9 596.1 838.1 592.3" stroke-width="1.0" stroke-opacity="0.48"/><path d="M1644.5 665.3 C1648.4 670.7 1659.7 687.2 1667.7 697.7 C1675.6 708.2 1684.3 718.2 1692.2 728.6 C1700.1 739.0 1707.9 749.4 1715.1 760.3 C1722.4 771.1 1732.1 788.1 1735.5 793.6" stroke-width="2.6" stroke-opacity="0.51"/><path d="M1478.1 522.0 C1482.8 526.5 1497.3 539.8 1506.7 548.9 C1516.1 558.1 1524.2 568.7 1534.4 577.0 C1544.5 585.2 1556.0 592.4 1567.6 598.5 C1579.3 604.6 1592.6 607.5 1604.3 613.6 C1615.9 619.7 1627.8 626.2 1637.4 635.0 C1647.0 643.8 1654.2 655.4 1661.8 666.1 C1669.5 676.9 1675.1 689.1 1683.2 699.5 C1691.3 709.8 1701.7 718.3 1710.4 728.2 C1719.1 738.1 1728.4 747.7 1735.5 758.7 C1742.6 769.7 1750.2 788.2 1753.2 794.1" stroke-width="1.2" stroke-opacity="0.56"/><path d="M689.7 732.9 C694.5 728.8 708.9 716.2 718.8 708.3 C728.8 700.4 739.2 693.1 749.4 685.6 C759.6 678.1 770.2 671.2 780.0 663.2 C789.8 655.3 798.7 646.3 808.2 637.9 C817.6 629.5 826.8 620.8 836.6 612.9 C846.4 605.0 856.6 597.5 866.9 590.4 C877.3 583.2 887.9 576.3 898.7 570.0 C909.6 563.7 920.7 557.5 932.2 552.5 C943.8 547.6 956.0 544.0 968.0 540.3 C980.1 536.6 992.3 533.7 1004.5 530.4 C1016.7 527.2 1028.8 523.9 1041.0 520.8 C1053.1 517.6 1071.4 513.0 1077.5 511.5" stroke-width="1.0" stroke-opacity="0.51"/><path d="M600.3 808.4 C603.9 802.8 613.9 785.6 621.9 775.2 C630.0 764.7 639.7 755.4 648.7 745.6 C657.7 735.9 671.4 721.4 676.0 716.6" stroke-width="1.0" stroke-opacity="0.54"/><path d="M1590.6 642.6 C1596.0 645.6 1613.4 653.4 1623.2 660.7 C1633.1 668.1 1641.1 677.9 1649.8 686.6 C1658.5 695.4 1667.1 704.2 1675.6 713.3 C1684.2 722.3 1692.9 731.2 1701.1 740.7 C1709.2 750.1 1717.3 759.8 1724.5 770.0 C1731.7 780.2 1739.0 790.6 1744.3 801.9 C1749.5 813.2 1752.1 825.8 1755.9 837.7 C1759.8 849.7 1765.4 867.7 1767.2 873.7" stroke-width="2.2" stroke-opacity="0.72"/><path d="M1773.8 885.9 C1776.2 891.8 1783.3 909.6 1787.7 921.7 C1792.1 933.8 1795.0 946.8 1800.1 958.6 C1805.1 970.3 1810.7 982.3 1818.0 992.3 C1825.2 1002.4 1835.2 1009.9 1843.9 1018.7 C1852.5 1027.6 1865.4 1041.0 1869.7 1045.4" stroke-width="1.2" stroke-opacity="0.86"/><path d="M674.0 756.0 C678.0 751.1 689.2 735.9 698.1 727.1 C706.9 718.2 717.2 710.8 727.1 702.9 C736.9 695.1 747.2 687.8 757.1 680.0 C767.0 672.3 777.1 664.8 786.4 656.3 C795.8 647.9 804.1 638.2 813.4 629.5 C822.6 620.9 832.0 612.3 841.8 604.3 C851.6 596.3 861.9 588.9 872.1 581.5 C882.4 574.1 892.7 566.6 903.5 560.0 C914.2 553.4 925.4 547.1 936.9 542.0 C948.4 536.8 960.7 533.1 972.7 529.3 C984.8 525.5 997.1 522.5 1009.4 519.2 C1021.6 516.0 1033.8 512.6 1046.1 509.7 C1058.5 506.8 1077.1 503.1 1083.3 501.7" stroke-width="1.2" stroke-opacity="0.54"/><path d="M627.0 777.2 C631.4 772.3 644.4 757.2 653.3 747.5 C662.3 737.8 671.5 728.2 680.9 718.9 C690.3 709.6 700.2 700.8 709.9 691.9 C719.7 682.9 729.7 674.3 739.1 665.1 C748.5 655.9 757.2 646.0 766.4 636.7 C775.7 627.3 784.8 617.7 794.7 609.1 C804.6 600.5 815.1 592.5 825.8 584.9 C836.5 577.4 848.2 571.2 858.9 563.7 C869.6 556.1 879.1 546.8 890.0 539.6 C900.9 532.4 912.4 525.6 924.3 520.4 C936.3 515.2 949.1 511.5 961.8 508.3 C974.5 505.0 987.6 503.0 1000.5 500.8 C1013.4 498.6 1032.9 495.9 1039.4 494.9" stroke-width="1.5" stroke-opacity="0.61"/><path d="M610.0 843.0 C613.2 837.3 622.2 819.9 629.1 808.9 C635.9 797.9 643.5 787.4 651.0 776.9 C658.5 766.4 665.3 755.4 673.9 745.9 C682.4 736.3 692.3 727.7 702.2 719.4 C712.1 711.1 722.8 703.7 733.3 696.3 C743.8 688.9 760.0 678.5 765.3 675.0" stroke-width="1.2" stroke-opacity="0.87"/><path d="M1275.9 524.9 C1281.4 528.0 1298.0 537.2 1308.9 543.5 C1319.9 549.7 1330.5 557.1 1341.8 562.4 C1353.2 567.7 1371.2 573.3 1377.0 575.5" stroke-width="1.5" stroke-opacity="0.66"/><path d="M1187.4 497.6 C1193.8 498.5 1212.9 500.9 1225.5 503.0 C1238.1 505.1 1250.9 507.0 1263.1 510.2 C1275.3 513.5 1287.0 518.4 1298.8 522.6 C1310.7 526.8 1328.2 533.4 1334.1 535.6" stroke-width="1.0" stroke-opacity="0.82"/><path d="M609.0 816.8 C612.7 811.4 623.3 794.5 631.2 784.0 C639.2 773.6 648.0 763.7 656.8 754.0 C665.6 744.2 674.4 734.4 684.0 725.4 C693.5 716.4 704.0 708.3 714.2 700.1 C724.4 691.9 735.0 684.3 745.3 676.4 C755.5 668.4 770.7 656.5 775.8 652.6" stroke-width="1.5" stroke-opacity="0.89"/><path d="M894.4 563.5 C899.9 560.4 916.0 550.0 927.5 544.6 C938.9 539.3 951.1 535.1 963.2 531.3 C975.3 527.4 987.7 524.5 1000.0 521.3 C1012.3 518.1 1024.7 515.1 1037.0 512.3 C1049.4 509.4 1061.7 506.5 1074.2 504.1 C1086.7 501.7 1099.2 498.9 1111.8 497.8 C1124.5 496.7 1137.3 496.9 1150.0 497.4 C1162.7 497.8 1175.4 499.2 1188.0 500.6 C1200.6 502.1 1213.3 503.9 1225.8 506.1 C1238.3 508.2 1251.0 510.2 1263.0 513.7 C1275.1 517.3 1292.2 525.2 1298.1 527.5" stroke-width="2.6" stroke-opacity="0.51"/><path d="M931.6 532.8 C937.6 530.6 955.5 523.5 967.8 519.7 C980.0 516.0 992.6 513.2 1005.1 510.2 C1017.5 507.3 1030.0 504.5 1042.6 502.0 C1055.2 499.5 1074.2 496.4 1080.5 495.2" stroke-width="1.5" stroke-opacity="0.70"/><path d="M1722.5 745.6 C1726.0 751.2 1738.0 767.2 1743.7 779.0 C1749.4 790.7 1752.7 803.7 1756.7 816.3 C1760.7 828.8 1763.2 842.0 1767.8 854.2 C1772.4 866.4 1778.6 877.9 1784.3 889.5 C1790.0 901.2 1796.6 912.3 1802.0 924.1 C1807.5 935.9 1814.7 954.3 1817.2 960.3" stroke-width="1.0" stroke-opacity="0.49"/><path d="M634.7 780.4 C638.7 775.3 650.3 759.6 658.7 749.7 C667.1 739.8 676.0 730.2 685.3 721.0 C694.6 711.8 704.6 703.4 714.3 694.7 C724.1 686.0 734.2 677.7 743.7 668.9 C753.2 660.0 762.2 650.7 771.5 641.6 C780.8 632.5 789.7 622.9 799.4 614.2 C809.1 605.6 824.7 593.8 829.8 589.7" stroke-width="2.2" stroke-opacity="0.61"/><path d="M615.1 803.5 C618.7 798.1 628.9 781.5 636.5 771.1 C644.1 760.6 652.3 750.4 660.8 740.5 C669.3 730.6 678.5 721.2 687.6 711.8 C696.7 702.4 706.4 693.5 715.6 684.1 C724.8 674.7 734.1 665.3 742.9 655.3 C751.6 645.4 759.3 634.4 768.2 624.4 C777.0 614.4 785.9 604.3 795.8 595.5 C805.7 586.7 822.4 575.7 827.7 571.8" stroke-width="2.6" stroke-opacity="0.48"/><path d="M1859.7 1023.2 C1863.6 1028.0 1879.1 1047.0 1883.0 1051.7" stroke-width="1.5" stroke-opacity="0.91"/><path d="M885.5 583.8 C890.9 580.7 906.7 570.5 917.8 564.8 C928.9 559.1 940.4 554.0 952.0 549.6 C963.7 545.2 975.8 541.8 987.8 538.2 C999.7 534.6 1011.8 531.5 1023.8 527.9 C1035.8 524.4 1047.6 520.2 1059.7 517.0 C1071.7 513.7 1090.1 509.7 1096.2 508.3" stroke-width="2.2" stroke-opacity="0.55"/><path d="M1338.4 517.8 C1344.7 518.9 1363.7 522.8 1376.6 524.4 C1389.4 526.0 1402.6 525.8 1415.5 527.2 C1428.5 528.5 1442.1 528.7 1454.2 532.5 C1466.4 536.2 1477.9 542.8 1488.4 549.8 C1498.9 556.7 1507.1 566.4 1517.2 574.2 C1527.2 582.0 1537.6 590.0 1548.7 596.6 C1559.9 603.1 1572.1 608.1 1583.9 613.7 C1595.6 619.3 1608.6 623.0 1619.3 630.2 C1630.0 637.3 1639.3 647.0 1647.8 656.7 C1656.4 666.4 1662.8 677.9 1670.7 688.3 C1678.5 698.6 1690.8 713.8 1694.8 718.9" stroke-width="2.2" stroke-opacity="0.76"/><path d="M824.9 591.4 C830.3 587.9 847.1 577.7 857.8 570.3 C868.4 562.8 878.1 553.9 888.9 546.7 C899.7 539.6 910.9 532.7 922.7 527.3 C934.5 521.9 947.1 518.0 959.6 514.5 C972.2 510.9 985.1 508.8 997.9 506.3 C1010.7 503.8 1023.5 501.6 1036.4 499.6 C1049.2 497.6 1062.1 495.9 1074.9 494.2 C1087.8 492.4 1100.7 489.9 1113.6 489.1 C1126.5 488.3 1139.6 488.7 1152.6 489.5 C1165.5 490.2 1178.4 492.0 1191.3 493.6 C1204.2 495.2 1217.1 496.9 1229.8 499.1 C1242.6 501.3 1255.4 503.5 1267.8 506.6 C1280.2 509.7 1298.2 515.8 1304.3 517.7" stroke-width="1.2" stroke-opacity="0.53"/><path d="M656.8 769.2 C660.6 764.0 671.0 747.8 679.7 738.3 C688.3 728.9 698.6 720.8 708.5 712.6 C718.3 704.4 728.8 696.9 739.0 689.2 C749.3 681.5 759.9 674.4 769.9 666.6 C779.9 658.7 789.4 650.3 799.0 642.0 C808.6 633.8 817.8 624.9 827.7 617.0 C837.5 609.1 847.8 601.7 858.2 594.6 C868.7 587.4 879.2 580.4 890.1 574.0 C900.9 567.6 912.0 561.3 923.5 556.2 C935.0 551.1 953.2 545.5 959.2 543.4" stroke-width="1.2" stroke-opacity="0.57"/><path d="M1775.3 884.7 C1778.4 890.2 1787.9 906.5 1794.0 917.7 C1800.1 929.0 1805.3 940.9 1811.8 952.1 C1818.4 963.3 1825.2 974.6 1833.3 985.0 C1841.3 995.3 1851.1 1004.4 1860.1 1014.2 C1869.2 1024.0 1883.0 1038.8 1887.6 1043.7" stroke-width="1.0" stroke-opacity="0.67"/><path d="M1568.7 593.6 C1574.8 596.4 1593.7 603.8 1605.2 610.5 C1616.7 617.2 1628.4 624.5 1637.8 633.9 C1647.2 643.3 1654.1 655.6 1661.6 666.8 C1669.1 678.1 1674.8 690.6 1682.8 701.3 C1690.7 712.1 1700.8 721.1 1709.1 731.4 C1717.5 741.8 1729.0 758.0 1733.0 763.3" stroke-width="1.5" stroke-opacity="0.30"/><path d="M1070.3 506.7 C1076.5 505.6 1095.1 501.2 1107.7 499.9 C1120.2 498.6 1133.0 498.4 1145.7 498.7 C1158.3 499.0 1171.0 500.2 1183.6 501.6 C1196.2 503.0 1208.7 504.8 1221.2 506.9 C1233.7 508.9 1246.5 510.5 1258.5 514.0 C1270.5 517.5 1287.6 525.6 1293.4 527.9" stroke-width="1.2" stroke-opacity="0.64"/><path d="M561.8 1056.8 C563.1 1050.6 566.9 1032.1 569.8 1019.8 C572.7 1007.5 576.0 995.4 579.2 983.1 C582.4 970.9 585.5 958.7 588.8 946.5 C592.1 934.3 595.4 922.0 599.0 909.8 C602.6 897.6 606.3 885.4 610.4 873.4 C614.5 861.3 618.9 849.4 623.6 837.5 C628.4 825.7 633.2 813.8 638.8 802.4 C644.4 791.0 650.5 780.1 657.1 769.3 C663.7 758.5 670.3 747.5 678.5 737.8 C686.6 728.1 696.5 719.8 705.9 711.2 C715.3 702.6 725.2 694.5 734.8 686.1 C744.4 677.7 758.6 664.9 763.4 660.6" stroke-width="1.0" stroke-opacity="0.73"/><path d="M991.1 534.6 C997.2 532.9 1015.4 528.1 1027.4 524.7 C1039.5 521.3 1051.4 517.4 1063.6 514.3 C1075.7 511.2 1088.0 508.1 1100.3 506.3 C1112.7 504.6 1125.3 503.7 1137.8 503.7 C1150.3 503.7 1162.9 504.9 1175.3 506.0 C1187.8 507.2 1200.2 508.9 1212.6 510.8 C1225.0 512.7 1237.7 513.9 1249.6 517.5 C1261.5 521.1 1272.8 526.8 1283.9 532.4 C1295.1 538.1 1305.5 545.3 1316.5 551.2 C1327.5 557.2 1338.3 563.8 1349.9 568.3 C1361.5 572.8 1380.0 576.5 1386.0 578.1" stroke-width="1.2" stroke-opacity="0.61"/><path d="M1792.5 940.9 C1794.8 946.9 1800.4 966.0 1806.4 977.0 C1812.5 988.0 1820.5 997.7 1828.7 1006.9 C1836.8 1016.1 1846.6 1023.6 1855.2 1032.3 C1863.9 1041.0 1876.4 1054.6 1880.6 1059.1" stroke-width="1.2" stroke-opacity="0.68"/><path d="M581.8 964.5 C583.6 958.4 588.8 940.0 592.6 927.8 C596.4 915.7 600.4 903.6 604.7 891.6 C608.9 879.6 613.4 867.6 618.2 855.8 C623.0 844.0 628.1 832.3 633.5 820.8 C638.9 809.3 644.6 798.0 650.7 786.9 C656.8 775.8 662.6 764.5 670.0 754.3 C677.4 744.1 685.9 734.5 694.9 725.6 C703.9 716.7 714.2 709.0 724.1 701.0 C734.0 693.0 749.2 681.5 754.2 677.6" stroke-width="2.6" stroke-opacity="0.87"/><path d="M1476.1 558.3 C1481.3 561.7 1496.8 571.6 1507.2 578.4 C1517.7 585.3 1527.9 592.9 1538.8 599.4 C1549.8 605.9 1567.3 614.5 1573.0 617.6" stroke-width="2.6" stroke-opacity="0.55"/><path d="M1784.4 934.7 C1787.4 940.3 1795.3 957.7 1802.4 968.2 C1809.6 978.8 1818.3 988.8 1827.5 998.0 C1836.6 1007.3 1852.4 1019.4 1857.4 1023.7" stroke-width="1.0" stroke-opacity="0.61"/><path d="M1592.0 602.4 C1598.0 605.3 1617.3 612.1 1627.9 619.8 C1638.5 627.5 1647.4 638.2 1655.4 648.7 C1663.5 659.3 1668.7 672.1 1676.2 683.1 C1683.7 694.1 1691.7 704.8 1700.5 714.8 C1709.3 724.7 1720.8 732.4 1728.9 742.8 C1737.1 753.2 1744.0 765.1 1749.5 777.1 C1755.0 789.2 1759.8 808.8 1761.9 815.1" stroke-width="1.8" stroke-opacity="0.34"/><path d="M1823.7 1013.1 C1829.5 1016.8 1847.5 1027.3 1858.8 1035.5 C1870.0 1043.8 1885.7 1057.9 1891.0 1062.4" stroke-width="1.0" stroke-opacity="0.89"/><path d="M1412.7 502.6 C1419.4 502.7 1440.2 500.8 1452.9 503.5 C1465.6 506.2 1478.6 511.3 1488.9 518.9 C1499.3 526.5 1506.0 539.3 1515.1 548.9 C1524.2 558.6 1533.0 568.9 1543.5 576.8 C1554.0 584.7 1566.2 590.5 1578.2 596.1 C1590.3 601.7 1609.5 607.8 1615.7 610.2" stroke-width="1.2" stroke-opacity="0.42"/><path d="M1180.1 485.2 C1186.6 485.7 1206.1 487.3 1219.2 488.4 C1232.2 489.5 1245.3 490.9 1258.4 492.0 C1271.6 493.1 1291.5 494.4 1298.1 494.9" stroke-width="2.2" stroke-opacity="0.48"/><path d="M788.5 664.9 C792.9 660.4 806.0 647.0 815.0 638.3 C823.9 629.5 832.8 620.5 842.2 612.2 C851.6 603.9 861.4 596.0 871.4 588.4 C881.4 580.9 891.7 573.6 902.3 566.9 C913.0 560.2 923.7 553.5 935.0 548.1 C946.3 542.7 958.3 538.6 970.1 534.4 C982.0 530.3 1000.2 525.1 1006.2 523.2" stroke-width="2.2" stroke-opacity="0.58"/><path d="M551.2 1037.7 C553.4 1031.5 559.8 1012.7 564.4 1000.4 C568.9 988.1 573.6 976.0 578.5 963.9 C583.3 951.8 588.2 939.9 593.5 928.0 C598.7 916.2 607.1 898.8 609.8 893.0" stroke-width="2.6" stroke-opacity="0.65"/><path d="M1440.3 544.8 C1446.3 546.9 1465.1 552.0 1476.3 557.5 C1487.5 563.0 1497.0 570.8 1507.4 577.6 C1517.9 584.5 1528.0 592.1 1539.0 598.6 C1550.0 605.1 1561.6 611.0 1573.2 616.7 C1584.8 622.4 1597.5 626.0 1608.5 632.5 C1619.4 639.1 1629.8 647.3 1638.8 656.3 C1647.9 665.2 1655.0 676.3 1663.0 686.4 C1671.0 696.4 1678.7 706.7 1687.0 716.5 C1695.3 726.2 1704.9 735.0 1713.0 745.0 C1721.1 755.0 1731.8 771.2 1735.6 776.4" stroke-width="1.0" stroke-opacity="0.67"/><path d="M1564.3 633.7 C1569.9 636.5 1587.1 644.3 1597.8 650.8 C1608.4 657.3 1618.8 664.6 1628.1 672.9 C1637.4 681.2 1649.4 695.9 1653.6 700.5" stroke-width="1.5" stroke-opacity="0.51"/><path d="M1194.5 485.1 C1201.1 485.8 1220.7 487.8 1233.8 489.3 C1247.0 490.8 1260.0 492.5 1273.2 493.9 C1286.3 495.4 1299.5 496.8 1312.7 498.0 C1325.9 499.2 1339.2 500.2 1352.5 501.1 C1365.8 502.0 1379.1 503.0 1392.5 503.2 C1405.9 503.5 1419.5 501.7 1432.7 502.6 C1446.0 503.5 1460.5 503.5 1472.1 508.7 C1483.8 513.8 1493.3 524.3 1502.6 533.6 C1512.0 542.9 1518.6 555.2 1528.2 564.2 C1537.8 573.3 1548.7 581.4 1560.1 587.8 C1571.6 594.3 1584.9 597.6 1597.0 603.1 C1609.1 608.7 1626.6 618.0 1632.6 621.0" stroke-width="1.0" stroke-opacity="0.35"/><path d="M1517.0 574.9 C1522.3 578.7 1537.4 590.9 1548.5 597.6 C1559.6 604.3 1571.8 609.4 1583.5 615.1 C1595.2 620.9 1608.1 624.9 1618.6 632.2 C1629.2 639.5 1638.4 649.3 1646.9 659.0 C1655.5 668.7 1662.1 680.2 1669.9 690.5 C1677.8 700.9 1685.8 711.2 1694.2 721.1 C1702.6 731.0 1712.4 739.7 1720.3 750.0 C1728.2 760.2 1735.9 771.1 1741.7 782.7 C1747.4 794.3 1750.8 807.0 1754.7 819.4 C1758.7 831.8 1761.1 844.8 1765.4 857.0 C1769.7 869.2 1775.2 880.8 1780.5 892.5 C1785.7 904.2 1791.5 915.5 1796.8 927.3 C1802.1 939.0 1809.5 957.1 1812.0 963.1" stroke-width="2.2" stroke-opacity="0.46"/><path d="M616.0 798.6 C620.2 793.5 632.4 777.9 640.8 767.8 C649.3 757.7 657.6 747.4 666.6 737.9 C675.7 728.4 685.5 719.4 695.2 710.5 C705.0 701.7 715.2 693.4 725.1 684.9 C735.1 676.3 745.1 668.0 754.8 659.3 C764.4 650.6 773.5 641.3 783.1 632.5 C792.7 623.8 802.0 614.6 812.3 606.7 C822.5 598.7 833.8 592.2 844.5 584.9 C855.2 577.6 865.7 570.0 876.5 563.0 C887.3 555.9 903.8 545.9 909.3 542.5" stroke-width="1.8" stroke-opacity="0.56"/><path d="M554.5 1061.3 C555.9 1055.1 559.9 1036.4 562.8 1024.1 C565.8 1011.7 569.1 999.3 572.2 987.0 C575.4 974.6 578.4 962.3 581.7 949.9 C585.0 937.6 588.3 925.2 592.0 913.0 C595.7 900.7 601.9 882.5 603.9 876.5" stroke-width="1.8" stroke-opacity="0.70"/><path d="M1026.3 522.4 C1032.4 520.6 1050.3 514.9 1062.4 511.7 C1074.5 508.6 1086.8 505.4 1099.2 503.5 C1111.5 501.5 1124.1 500.4 1136.7 500.1 C1149.2 499.9 1161.8 500.9 1174.4 501.9 C1186.9 502.9 1199.5 504.4 1212.0 506.0 C1224.5 507.6 1237.2 508.8 1249.4 511.7 C1261.5 514.7 1273.2 519.3 1284.9 523.7 C1296.6 528.1 1313.6 535.6 1319.3 537.9" stroke-width="1.8" stroke-opacity="0.50"/><path d="M1830.6 986.3 C1835.0 991.1 1848.3 1005.4 1857.3 1015.0 C1866.2 1024.6 1879.9 1039.2 1884.4 1044.0" stroke-width="1.0" stroke-opacity="0.71"/><path d="M549.7 948.9 C551.4 942.5 555.9 923.0 559.9 910.3 C563.9 897.6 568.9 885.2 573.8 872.9 C578.7 860.5 583.6 848.1 589.1 836.0 C594.6 823.9 599.6 811.4 606.7 800.2 C613.8 789.0 622.9 779.2 631.5 769.0 C640.1 758.9 649.2 749.1 658.4 739.5 C667.5 729.9 676.9 720.4 686.4 711.2 C695.9 701.9 705.9 693.1 715.5 684.0 C725.1 674.9 734.8 665.8 744.0 656.3 C753.3 646.9 761.6 636.5 770.9 627.1 C780.1 617.7 789.5 608.2 799.7 599.9 C809.9 591.6 821.4 584.9 832.2 577.4 C843.0 569.8 859.2 558.4 864.6 554.6" stroke-width="1.2" stroke-opacity="0.46"/><path d="M915.3 560.9 C921.1 558.4 938.1 550.1 949.9 545.7 C961.6 541.4 973.9 538.2 986.0 534.8 C998.2 531.4 1010.4 528.5 1022.5 525.2 C1034.7 521.9 1046.6 518.1 1058.8 515.1 C1071.0 512.0 1083.2 508.8 1095.6 506.9 C1108.0 505.0 1120.5 503.7 1133.1 503.5 C1145.6 503.3 1158.2 504.6 1170.7 505.7 C1183.2 506.8 1195.6 508.3 1208.0 510.2 C1220.4 512.0 1238.9 515.6 1245.0 516.7" stroke-width="1.0" stroke-opacity="0.66"/><path d="M1710.5 760.3 C1714.1 765.5 1726.1 780.4 1732.1 791.4 C1738.1 802.5 1742.4 814.5 1746.3 826.4 C1750.1 838.4 1752.4 851.0 1755.3 863.2 C1758.2 875.5 1760.6 887.8 1763.6 900.0 C1766.5 912.2 1769.1 924.5 1772.8 936.5 C1776.5 948.4 1783.6 965.9 1785.8 971.8" stroke-width="2.6" stroke-opacity="0.43"/><path d="M1808.0 976.1 C1812.7 980.8 1826.4 994.9 1836.2 1003.9 C1845.9 1012.9 1856.7 1021.1 1866.7 1030.2 C1876.7 1039.3 1891.3 1053.9 1896.2 1058.6" stroke-width="1.8" stroke-opacity="0.57"/><path d="M1569.1 613.3 C1575.0 615.8 1593.6 622.2 1604.8 628.4 C1616.0 634.5 1627.1 641.7 1636.5 650.2 C1645.8 658.8 1653.0 669.9 1661.0 679.9 C1669.0 689.9 1676.1 700.6 1684.5 710.4 C1692.8 720.1 1702.7 728.7 1711.1 738.4 C1719.5 748.2 1728.0 758.2 1734.8 769.1 C1741.5 780.0 1748.8 798.1 1751.6 803.9" stroke-width="1.5" stroke-opacity="0.60"/><path d="M1742.2 797.9 C1744.1 804.0 1750.3 821.9 1754.0 834.1 C1757.7 846.2 1760.2 858.7 1764.3 870.6 C1768.4 882.6 1773.7 893.9 1778.5 905.5 C1783.3 917.1 1788.0 928.8 1793.4 940.4 C1798.8 951.9 1803.7 964.1 1810.8 974.7 C1817.8 985.3 1826.7 994.8 1835.5 1004.2 C1844.3 1013.5 1854.4 1021.7 1863.6 1030.8 C1872.8 1039.9 1886.3 1054.1 1890.9 1058.8" stroke-width="2.6" stroke-opacity="0.53"/><path d="M614.7 894.3 C616.9 888.4 623.2 870.6 627.9 859.0 C632.6 847.3 637.7 835.8 642.8 824.3 C647.9 812.8 653.0 801.3 658.5 790.0 C663.9 778.8 668.7 766.9 675.5 756.6 C682.4 746.2 690.7 736.5 699.6 727.8 C708.5 719.1 724.1 708.1 728.9 704.1" stroke-width="1.8" stroke-opacity="0.96"/><path d="M1871.4 1020.6 C1876.3 1025.6 1895.9 1045.7 1900.8 1050.7" stroke-width="1.2" stroke-opacity="0.49"/><path d="M600.1 850.0 C603.1 844.2 611.4 826.2 617.9 815.0 C624.4 803.7 631.8 792.8 639.3 782.2 C646.8 771.6 654.5 761.3 663.0 751.4 C671.4 741.6 680.4 732.0 689.9 723.2 C699.4 714.3 709.8 706.4 720.0 698.3 C730.1 690.3 745.7 678.7 750.8 674.8" stroke-width="1.0" stroke-opacity="0.89"/><path d="M1258.5 503.6 C1264.7 505.0 1283.3 509.2 1295.7 511.8 C1308.1 514.5 1320.4 517.3 1333.0 519.5 C1345.6 521.7 1358.4 524.0 1371.4 525.0 C1384.4 526.1 1397.7 525.5 1410.9 526.0 C1424.1 526.5 1437.9 525.4 1450.5 528.1 C1463.0 530.7 1475.5 535.6 1486.2 542.0 C1496.9 548.3 1510.1 562.0 1514.9 566.0" stroke-width="1.5" stroke-opacity="0.73"/><path d="M1450.6 591.1 C1456.7 592.4 1475.4 595.6 1487.3 598.8 C1499.3 602.0 1511.1 605.9 1522.6 610.4 C1534.2 614.9 1545.3 620.6 1556.7 625.8 C1568.1 630.9 1579.9 635.5 1591.0 641.2 C1602.1 646.9 1613.7 652.4 1623.5 659.9 C1633.3 667.5 1641.2 677.6 1649.8 686.5 C1658.5 695.4 1667.1 704.5 1675.5 713.6 C1684.0 722.8 1692.7 731.9 1700.8 741.5 C1708.8 751.1 1716.8 760.9 1723.8 771.2 C1730.9 781.6 1738.2 792.1 1743.4 803.5 C1748.5 814.8 1752.8 833.5 1754.7 839.5" stroke-width="2.2" stroke-opacity="0.56"/><path d="M795.2 609.7 C800.3 605.5 815.1 592.6 825.7 584.8 C836.2 577.0 847.8 570.7 858.3 562.8 C868.9 555.0 878.1 545.4 888.8 537.8 C899.6 530.3 910.8 523.1 922.7 517.5 C934.5 512.0 947.2 507.9 959.8 504.4 C972.4 500.9 985.4 498.7 998.4 496.4 C1011.3 494.1 1024.3 492.2 1037.3 490.5 C1050.4 488.7 1063.5 487.6 1076.5 486.0 C1089.6 484.4 1102.6 481.6 1115.7 480.9 C1128.8 480.1 1142.1 480.5 1155.2 481.3 C1168.3 482.0 1181.4 483.9 1194.6 485.3 C1207.7 486.7 1220.8 488.2 1233.9 489.8 C1247.0 491.4 1266.6 494.0 1273.1 494.9" stroke-width="1.8" stroke-opacity="0.54"/><path d="M554.2 1013.9 C555.9 1007.6 561.2 988.8 564.7 976.3 C568.2 963.8 571.1 951.2 575.0 938.8 C578.8 926.4 583.0 914.1 587.5 901.9 C592.0 889.8 596.8 877.7 601.8 865.8 C606.8 853.8 612.0 842.0 617.7 830.3 C623.4 818.7 629.2 807.1 635.8 796.1 C642.4 785.1 649.7 774.6 657.2 764.3 C664.8 753.9 672.2 743.3 681.0 734.0 C689.8 724.6 700.0 716.5 709.9 708.2 C719.8 700.0 735.1 688.3 740.2 684.3" stroke-width="2.2" stroke-opacity="0.77"/><path d="M614.3 899.1 C616.5 893.2 622.9 875.4 627.6 863.8 C632.3 852.2 637.5 840.7 642.6 829.2 C647.8 817.8 653.0 806.4 658.3 795.0 C663.7 783.7 668.2 771.9 674.7 761.3 C681.3 750.7 688.8 740.5 697.5 731.6 C706.2 722.7 716.9 715.6 726.9 708.0 C736.9 700.5 747.4 693.6 757.7 686.4 C768.0 679.2 778.8 672.8 788.6 665.0 C798.3 657.1 806.9 647.9 816.1 639.5 C825.4 631.1 839.5 618.8 844.2 614.6" stroke-width="1.8" stroke-opacity="0.66"/><path d="M607.3 805.7 C611.7 800.6 624.5 784.8 633.4 774.8 C642.3 764.8 651.4 755.0 660.8 745.5 C670.2 736.1 679.9 726.8 689.9 718.2 C700.0 709.5 715.9 697.6 721.1 693.5" stroke-width="2.6" stroke-opacity="0.87"/><path d="M1358.7 553.7 C1365.2 553.8 1384.6 554.3 1397.7 554.4 C1410.9 554.4 1424.4 553.2 1437.4 554.1 C1450.4 555.1 1463.8 556.4 1475.6 559.8 C1487.4 563.3 1497.4 569.3 1508.2 574.8 C1518.9 580.4 1534.8 590.2 1540.1 593.3" stroke-width="1.2" stroke-opacity="0.54"/><path d="M557.8 975.3 C558.8 968.8 561.4 949.4 564.0 936.5 C566.6 923.7 569.8 911.0 573.2 898.3 C576.7 885.6 580.6 873.1 584.8 860.6 C588.9 848.1 592.9 835.5 597.9 823.3 C603.0 811.2 607.9 798.7 614.9 787.7 C621.9 776.7 631.3 767.3 639.8 757.2 C648.3 747.2 661.7 732.5 666.0 727.6" stroke-width="2.2" stroke-opacity="0.59"/><path d="M1794.3 888.1 C1797.9 893.7 1809.7 909.8 1816.3 921.3 C1822.9 932.8 1827.3 945.5 1833.8 957.1 C1840.2 968.7 1847.5 980.0 1855.1 991.1 C1862.7 1002.1 1871.1 1012.9 1879.5 1023.4 C1887.9 1034.0 1901.3 1049.3 1905.7 1054.5" stroke-width="1.2" stroke-opacity="0.51"/><path d="M535.9 1066.0 C537.4 1059.6 541.9 1040.5 544.9 1027.8 C547.9 1015.0 551.2 1002.4 554.1 989.6 C556.9 976.8 559.2 963.9 562.2 951.2 C565.2 938.5 568.3 925.7 572.1 913.2 C575.9 900.7 580.4 888.3 584.9 876.0 C589.4 863.7 594.1 851.5 599.3 839.4 C604.4 827.4 609.2 815.0 615.7 803.7 C622.2 792.4 634.3 777.0 638.1 771.7" stroke-width="2.6" stroke-opacity="0.93"/><path d="M570.7 1001.1 C572.0 994.9 576.2 976.4 578.9 964.0 C581.6 951.6 584.0 939.0 587.0 926.6 C589.9 914.2 595.1 895.6 596.7 889.4" stroke-width="1.2" stroke-opacity="0.77"/><path d="M606.9 877.3 C609.7 871.5 617.8 854.0 623.6 842.6 C629.5 831.1 635.6 819.8 641.9 808.8 C648.2 797.7 654.5 786.8 661.3 776.0 C668.0 765.3 674.0 753.8 682.2 744.3 C690.5 734.8 700.8 726.9 710.8 719.0 C720.8 711.1 736.8 700.6 742.0 697.0" stroke-width="1.8" stroke-opacity="0.57"/><path d="M786.5 662.9 C791.1 658.7 805.1 646.0 814.5 637.7 C823.9 629.5 833.3 621.1 843.1 613.3 C852.8 605.5 862.8 597.8 873.3 590.9 C883.7 584.0 900.1 574.8 905.5 571.6" stroke-width="1.2" stroke-opacity="0.56"/><path d="M771.5 641.7 C776.0 636.9 788.8 622.0 798.2 612.9 C807.5 603.8 817.4 595.2 827.6 587.1 C837.8 579.0 849.1 572.3 859.3 564.2 C869.6 556.1 878.7 546.2 889.2 538.4 C899.7 530.5 910.7 522.9 922.3 517.0 C934.0 511.0 952.8 505.1 958.9 502.7" stroke-width="1.5" stroke-opacity="0.65"/><path d="M974.6 522.8 C980.9 521.4 999.7 517.1 1012.2 514.3 C1024.7 511.6 1037.2 508.8 1049.7 506.3 C1062.3 503.9 1074.9 501.5 1087.5 499.7 C1100.2 497.8 1112.9 495.9 1125.6 495.5 C1138.4 495.1 1151.2 496.3 1164.0 497.3 C1176.7 498.4 1195.7 501.0 1202.1 501.7" stroke-width="1.8" stroke-opacity="0.53"/><path d="M1752.0 823.8 C1753.4 830.3 1757.5 850.1 1760.4 863.0 C1763.3 875.8 1766.5 888.4 1769.2 901.1 C1771.9 913.9 1775.3 933.1 1776.6 939.5" stroke-width="1.2" stroke-opacity="0.41"/><path d="M1665.9 666.5 C1669.4 672.2 1678.7 690.1 1686.9 700.3 C1695.2 710.5 1706.7 718.2 1715.5 728.0 C1724.4 737.8 1733.3 747.9 1740.2 759.1 C1747.1 770.3 1752.1 782.9 1756.8 795.2 C1761.5 807.6 1763.7 821.0 1768.5 833.4 C1773.3 845.7 1778.7 858.0 1785.7 869.4 C1792.6 880.8 1802.8 890.4 1810.1 901.6 C1817.3 912.9 1823.0 925.0 1829.1 936.9 C1835.3 948.8 1843.9 966.9 1846.9 972.9" stroke-width="1.8" stroke-opacity="0.48"/><path d="M587.4 876.7 C589.6 870.6 595.9 852.0 600.8 839.9 C605.6 827.8 610.1 815.3 616.2 803.9 C622.4 792.5 630.2 782.1 637.8 771.6 C645.4 761.1 653.5 750.8 662.0 741.0 C670.6 731.2 679.8 721.8 689.0 712.5 C698.2 703.2 708.0 694.5 717.3 685.3 C726.7 676.1 736.2 666.9 745.1 657.3 C754.1 647.6 762.0 637.0 771.0 627.3 C779.9 617.5 788.9 607.5 798.8 598.9 C808.7 590.2 820.0 583.2 830.6 575.3 C841.1 567.4 857.0 555.4 862.2 551.4" stroke-width="2.6" stroke-opacity="0.53"/><path d="M1064.0 515.3 C1070.0 513.6 1087.6 507.4 1099.7 504.8 C1111.8 502.2 1124.2 500.6 1136.6 499.7 C1148.9 498.9 1161.4 499.4 1173.9 499.7 C1186.4 500.1 1205.2 501.6 1211.4 502.0" stroke-width="1.5" stroke-opacity="0.61"/><path d="M654.6 783.4 C657.7 778.0 666.0 760.8 673.4 750.7 C680.8 740.5 689.7 731.4 698.8 722.6 C707.9 713.8 718.1 706.1 727.9 698.1 C737.7 690.0 747.9 682.5 757.6 674.4 C767.3 666.3 776.8 658.0 786.1 649.3 C795.3 640.6 803.7 630.8 813.1 622.1 C822.4 613.5 832.2 605.3 842.2 597.4 C852.2 589.5 867.9 578.4 873.0 574.6" stroke-width="1.8" stroke-opacity="0.59"/><path d="M1793.6 912.3 C1795.7 918.6 1801.3 937.7 1805.9 949.9 C1810.4 962.1 1814.7 974.8 1821.1 985.6 C1827.5 996.3 1836.3 1005.0 1844.3 1014.4 C1852.3 1023.8 1864.9 1037.2 1869.0 1041.8" stroke-width="1.5" stroke-opacity="0.71"/><path d="M1404.6 530.5 C1410.9 531.7 1430.3 533.8 1442.5 537.6 C1454.6 541.4 1466.8 546.9 1477.7 553.4 C1488.6 559.8 1497.6 568.8 1507.8 576.4 C1518.0 584.0 1528.1 592.0 1538.9 599.0 C1549.8 605.9 1561.4 612.1 1572.8 618.2 C1584.3 624.3 1596.8 628.4 1607.6 635.4 C1618.3 642.4 1628.4 650.9 1637.4 660.1 C1646.4 669.3 1653.4 680.6 1661.5 690.7 C1669.6 700.8 1681.9 715.6 1686.0 720.6" stroke-width="1.0" stroke-opacity="0.49"/><path d="M1369.4 568.1 C1375.7 568.7 1394.7 570.5 1407.4 571.8 C1420.1 573.1 1433.1 573.9 1445.6 576.0 C1458.0 578.0 1470.4 580.7 1482.2 584.2 C1494.0 587.7 1510.6 595.0 1516.2 597.2" stroke-width="2.2" stroke-opacity="0.47"/><path d="M907.6 521.3 C913.6 518.5 931.0 508.8 943.3 504.3 C955.6 499.8 968.7 497.3 981.6 494.6 C994.5 491.8 1007.5 489.6 1020.5 487.8 C1033.6 485.9 1046.8 485.1 1060.0 483.5 C1073.1 482.0 1086.2 479.6 1099.4 478.3 C1112.5 477.0 1125.8 475.5 1139.0 475.6 C1152.3 475.6 1165.5 477.5 1178.7 478.6 C1192.0 479.7 1211.9 481.7 1218.5 482.3" stroke-width="1.5" stroke-opacity="0.35"/><path d="M1781.7 963.3 C1784.8 968.7 1792.6 986.4 1800.5 995.7 C1808.4 1005.0 1819.5 1011.2 1828.9 1019.1 C1838.4 1027.0 1852.4 1039.1 1857.1 1043.1" stroke-width="1.0" stroke-opacity="0.92"/><path d="M645.4 825.2 C647.9 819.5 655.5 802.3 660.8 791.0 C666.2 779.7 670.6 767.7 677.4 757.3 C684.1 746.9 692.4 737.3 701.3 728.6 C710.2 720.0 720.8 712.8 730.9 705.4 C740.9 697.9 751.4 691.0 761.7 683.8 C771.9 676.6 782.6 670.0 792.2 662.0 C801.9 654.1 810.3 644.7 819.5 636.2 C828.7 627.8 838.0 619.4 847.7 611.5 C857.4 603.6 872.6 592.7 877.6 588.9" stroke-width="1.5" stroke-opacity="0.96"/><path d="M1450.3 545.1 C1456.2 547.1 1475.0 551.8 1486.1 557.1 C1497.1 562.3 1506.1 570.3 1516.5 576.9 C1526.9 583.5 1537.4 590.9 1548.7 596.7 C1560.0 602.6 1572.3 607.0 1584.3 612.0 C1596.3 617.0 1609.6 619.9 1620.5 626.5 C1631.5 633.1 1641.2 642.1 1649.8 651.5 C1658.5 660.8 1668.7 677.4 1672.5 682.5" stroke-width="2.6" stroke-opacity="0.42"/><path d="M1671.6 712.6 C1675.8 717.3 1689.0 730.9 1696.8 740.7 C1704.7 750.5 1711.9 760.9 1719.0 771.3 C1726.0 781.7 1733.9 791.8 1739.2 803.2 C1744.4 814.5 1747.2 827.0 1750.6 839.2 C1753.9 851.3 1756.1 863.8 1759.3 875.9 C1762.4 888.1 1765.8 900.0 1769.3 912.0 C1772.8 924.1 1775.7 936.4 1780.3 948.0 C1784.9 959.7 1789.8 971.7 1796.9 981.9 C1803.9 992.2 1813.4 1000.9 1822.5 1009.3 C1831.7 1017.8 1842.5 1024.5 1852.0 1032.8 C1861.5 1041.1 1874.8 1054.7 1879.4 1059.1" stroke-width="1.0" stroke-opacity="0.57"/><path d="M867.7 575.5 C872.9 571.8 888.1 560.0 899.0 553.2 C909.8 546.5 921.1 540.0 932.8 534.9 C944.5 529.7 956.9 526.1 969.2 522.5 C981.5 518.9 994.1 516.2 1006.5 513.3 C1019.0 510.4 1031.5 507.6 1044.0 505.0 C1056.5 502.5 1069.1 500.2 1081.8 498.2 C1094.4 496.1 1107.1 493.7 1119.9 492.9 C1132.7 492.2 1145.6 493.0 1158.4 493.7 C1171.2 494.5 1184.0 496.0 1196.7 497.5 C1209.5 499.1 1222.3 500.6 1234.9 502.9 C1247.5 505.2 1266.0 509.8 1272.3 511.2" stroke-width="1.5" stroke-opacity="0.45"/><path d="M567.6 891.7 C569.8 885.5 576.4 866.7 581.2 854.3 C586.0 841.9 590.5 829.4 596.3 817.5 C602.2 805.6 608.4 793.7 616.1 783.0 C623.9 772.3 633.9 763.2 642.9 753.4 C651.9 743.6 660.9 733.8 670.1 724.3 C679.4 714.7 688.8 705.3 698.2 695.9 C707.6 686.5 717.5 677.5 726.6 667.7 C735.7 657.9 743.9 647.3 752.8 637.3 C761.6 627.2 770.2 616.9 779.7 607.5 C789.2 598.2 798.9 588.9 809.7 581.0 C820.4 573.1 838.3 563.7 844.0 560.3" stroke-width="2.6" stroke-opacity="0.69"/><path d="M734.7 697.3 C739.9 693.6 755.5 682.8 765.6 675.2 C775.6 667.6 785.6 659.9 795.2 651.7 C804.7 643.4 813.3 634.1 822.8 625.8 C832.3 617.6 842.1 609.6 852.2 602.1 C862.2 594.5 872.6 587.3 883.1 580.5 C893.7 573.8 910.3 564.7 915.7 561.5" stroke-width="2.6" stroke-opacity="0.57"/><path d="M971.5 527.0 C977.7 525.3 996.0 520.2 1008.3 517.0 C1020.6 513.7 1032.8 510.5 1045.2 507.7 C1057.6 504.8 1070.0 502.2 1082.5 499.9 C1095.1 497.7 1107.7 495.2 1120.4 494.3 C1133.1 493.4 1145.9 494.1 1158.7 494.7 C1171.4 495.4 1184.1 496.8 1196.8 498.2 C1209.5 499.6 1228.6 502.3 1234.9 503.1" stroke-width="1.2" stroke-opacity="0.54"/><path d="M765.5 681.2 C770.5 677.4 786.1 666.8 795.6 658.8 C805.1 650.7 813.4 641.2 822.6 632.7 C831.9 624.3 841.2 615.9 851.0 608.1 C860.8 600.3 870.8 592.8 881.2 585.9 C891.6 578.9 902.3 572.4 913.4 566.5 C924.4 560.7 935.7 555.2 947.3 550.7 C959.0 546.1 971.1 542.8 983.1 539.2 C995.0 535.5 1007.2 532.4 1019.2 528.9 C1031.2 525.4 1043.0 521.4 1055.1 518.1 C1067.1 514.8 1079.2 511.3 1091.5 509.1 C1103.8 506.8 1116.3 505.1 1128.7 504.6 C1141.1 504.1 1159.9 505.9 1166.2 506.1" stroke-width="1.2" stroke-opacity="0.51"/><path d="M1217.1 510.6 C1223.3 511.8 1242.2 514.0 1254.1 517.7 C1265.9 521.4 1277.1 527.4 1288.3 533.0 C1299.4 538.6 1310.0 545.4 1321.1 551.0 C1332.3 556.6 1343.4 562.6 1355.2 566.7 C1366.9 570.7 1379.5 572.4 1391.7 575.3 C1403.9 578.2 1416.1 581.0 1428.2 584.1 C1440.4 587.1 1452.6 590.3 1464.6 593.6 C1476.6 596.9 1488.7 599.8 1500.4 604.0 C1512.1 608.1 1523.6 613.2 1535.0 618.3 C1546.4 623.5 1557.5 629.4 1568.7 635.0 C1579.9 640.6 1591.7 645.4 1602.2 652.1 C1612.7 658.7 1622.6 666.6 1631.8 675.0 C1641.0 683.4 1653.1 698.0 1657.4 702.6" stroke-width="1.0" stroke-opacity="0.70"/><path d="M565.0 981.2 C566.7 975.0 571.7 956.2 575.6 943.9 C579.4 931.5 583.6 919.2 588.1 907.1 C592.6 894.9 597.4 882.9 602.4 871.0 C607.5 859.1 612.7 847.3 618.3 835.7 C623.9 824.1 629.7 812.4 636.1 801.3 C642.5 790.3 649.5 779.7 656.8 769.2 C664.0 758.6 670.9 747.7 679.5 738.3 C688.1 728.8 698.3 720.7 708.1 712.5 C718.0 704.2 728.4 696.6 738.5 688.9 C748.7 681.1 764.1 669.7 769.2 665.9" stroke-width="1.5" stroke-opacity="0.57"/><path d="M978.8 540.9 C984.8 539.1 1002.8 533.9 1014.8 530.4 C1026.7 526.8 1038.6 522.9 1050.7 519.6 C1062.7 516.2 1074.7 512.6 1087.0 510.2 C1099.2 507.7 1111.6 505.5 1124.0 504.7 C1136.4 504.0 1149.0 505.0 1161.5 505.8 C1174.0 506.5 1186.4 507.7 1198.8 509.3 C1211.2 510.9 1223.7 512.4 1235.8 515.3 C1247.9 518.2 1260.1 521.6 1271.4 526.5 C1282.8 531.4 1293.3 538.7 1304.2 544.8 C1315.1 550.9 1325.6 558.0 1336.9 563.1 C1348.2 568.2 1360.3 571.9 1372.2 575.4 C1384.2 578.9 1402.6 582.5 1408.7 583.9" stroke-width="1.2" stroke-opacity="0.70"/><path d="M1161.3 504.9 C1167.5 505.5 1186.3 506.9 1198.7 508.5 C1211.1 510.1 1223.6 511.7 1235.8 514.5 C1247.9 517.4 1260.1 520.8 1271.5 525.7 C1282.9 530.5 1293.4 537.7 1304.4 543.7 C1315.3 549.7 1325.9 556.8 1337.2 561.8 C1348.6 566.9 1360.6 570.6 1372.6 574.1 C1384.6 577.6 1396.9 579.7 1409.1 582.7 C1421.2 585.6 1433.4 588.6 1445.5 591.7 C1457.6 594.7 1469.8 597.5 1481.8 601.0 C1493.8 604.4 1505.8 607.9 1517.5 612.4 C1529.1 616.9 1540.3 622.6 1551.6 628.0 C1562.8 633.4 1574.2 638.8 1585.1 644.8 C1596.1 650.8 1612.0 660.7 1617.4 663.9" stroke-width="1.0" stroke-opacity="0.49"/><path d="M1108.6 502.3 C1114.8 501.9 1133.5 500.0 1146.0 499.8 C1158.5 499.7 1171.0 500.5 1183.5 501.4 C1196.0 502.3 1208.6 503.7 1221.1 505.2 C1233.6 506.8 1246.3 508.1 1258.5 510.7 C1270.7 513.4 1282.4 517.7 1294.4 521.2 C1306.3 524.6 1324.3 529.6 1330.3 531.3" stroke-width="1.5" stroke-opacity="0.47"/><path d="M1828.4 965.5 C1832.6 970.8 1844.7 986.7 1853.4 997.0 C1862.1 1007.4 1871.3 1017.5 1880.5 1027.8 C1889.7 1038.0 1903.9 1053.2 1908.6 1058.3" stroke-width="1.8" stroke-opacity="0.60"/><path d="M610.4 888.2 C612.8 882.3 619.5 864.5 624.5 852.9 C629.4 841.2 634.7 829.7 640.2 818.3 C645.7 806.9 651.2 795.6 657.2 784.5 C663.1 773.4 672.8 757.2 675.9 751.7" stroke-width="1.8" stroke-opacity="0.60"/><path d="M601.7 850.5 C604.1 844.5 610.6 826.0 616.2 814.3 C621.8 802.6 628.2 791.4 635.2 780.6 C642.1 769.7 650.0 759.5 658.1 749.5 C666.2 739.4 675.0 729.7 684.0 720.4 C693.0 711.0 702.8 702.3 712.2 693.3 C721.6 684.3 731.4 675.6 740.5 666.2 C749.6 656.9 762.4 641.9 766.8 637.0" stroke-width="2.6" stroke-opacity="0.69"/><path d="M579.1 944.6 C580.9 938.4 585.9 919.8 589.7 907.5 C593.6 895.2 597.7 883.0 602.1 870.9 C606.5 858.8 611.0 846.7 616.1 834.9 C621.1 823.0 626.2 811.1 632.3 799.8 C638.4 788.6 645.4 778.0 652.6 767.5 C659.8 756.9 667.0 746.2 675.4 736.6 C683.8 726.9 693.7 718.4 703.1 709.6 C712.6 700.9 722.6 692.8 732.2 684.2 C741.8 675.6 756.1 662.6 760.8 658.3" stroke-width="1.0" stroke-opacity="0.94"/><path d="M1141.5 500.5 C1147.8 500.8 1166.6 501.4 1179.1 502.4 C1191.6 503.4 1204.1 504.9 1216.6 506.6 C1229.1 508.3 1247.7 511.5 1254.0 512.5" stroke-width="1.8" stroke-opacity="0.79"/><path d="M1279.8 530.5 C1285.2 533.6 1301.4 543.1 1312.4 549.1 C1323.3 555.2 1334.0 562.0 1345.5 566.6 C1357.1 571.2 1369.4 573.7 1381.5 576.9 C1393.6 580.1 1405.8 582.8 1417.9 585.8 C1430.1 588.8 1442.2 591.8 1454.3 594.8 C1466.5 597.8 1478.8 600.3 1490.7 603.8 C1502.7 607.4 1514.5 611.5 1526.0 616.3 C1537.6 621.1 1554.3 629.7 1559.9 632.4" stroke-width="1.8" stroke-opacity="0.74"/><path d="M654.2 768.1 C658.0 763.0 668.6 746.8 677.2 737.3 C685.8 727.8 695.8 719.4 705.5 711.0 C715.2 702.5 725.5 694.7 735.4 686.6 C745.4 678.4 755.5 670.7 765.2 662.3 C774.9 653.9 784.0 644.9 793.4 636.2 C802.8 627.5 811.9 618.4 821.8 610.3 C831.8 602.2 842.5 595.3 852.9 587.8 C863.3 580.4 873.6 572.7 884.3 565.7 C895.0 558.8 911.6 549.2 917.1 545.9" stroke-width="1.0" stroke-opacity="0.81"/><path d="M733.3 701.7 C738.4 698.1 753.9 687.3 764.0 679.9 C774.2 672.5 784.5 665.3 794.0 657.2 C803.5 649.0 811.9 639.5 821.2 631.1 C830.5 622.7 845.0 610.7 849.8 606.7" stroke-width="1.0" stroke-opacity="0.52"/><path d="M1828.6 1019.2 C1834.2 1023.1 1856.6 1038.7 1862.2 1042.5" stroke-width="1.0" stroke-opacity="0.99"/><path d="M1423.6 550.4 C1429.7 552.3 1448.6 556.8 1460.2 561.6 C1471.8 566.5 1482.3 573.2 1493.2 579.5 C1504.0 585.7 1514.2 592.7 1525.0 599.2 C1535.9 605.7 1552.8 615.2 1558.3 618.4" stroke-width="2.6" stroke-opacity="0.56"/><path d="M1409.2 514.5 C1415.8 515.0 1436.1 514.3 1448.7 517.2 C1461.3 520.2 1474.0 525.2 1484.6 532.1 C1495.2 539.1 1502.9 550.2 1512.4 559.0 C1522.0 567.7 1531.2 577.2 1541.9 584.6 C1552.5 592.1 1564.5 598.0 1576.4 603.7 C1588.2 609.3 1601.7 612.1 1613.0 618.6 C1624.3 625.1 1634.9 633.4 1643.9 642.8 C1652.9 652.1 1659.5 663.9 1667.1 674.7 C1674.6 685.4 1680.8 697.2 1689.3 707.2 C1697.7 717.3 1709.0 724.9 1717.7 734.8 C1726.3 744.7 1737.1 761.3 1741.0 766.6" stroke-width="1.2" stroke-opacity="0.49"/><path d="M663.1 786.9 C665.9 781.3 673.0 763.6 680.0 753.4 C687.0 743.2 696.0 734.2 705.2 725.8 C714.4 717.3 724.8 710.2 734.9 702.8 C745.0 695.4 755.7 688.7 765.9 681.5 C776.1 674.2 786.5 667.3 796.1 659.3 C805.7 651.2 818.7 637.7 823.2 633.4" stroke-width="1.0" stroke-opacity="0.95"/><path d="M1847.8 1021.8 C1852.9 1026.2 1873.1 1043.9 1878.1 1048.4" stroke-width="2.2" stroke-opacity="0.76"/><path d="M1739.0 787.4 C1741.3 793.4 1748.4 811.2 1752.3 823.3 C1756.2 835.5 1758.6 848.3 1762.6 860.3 C1766.6 872.4 1771.3 884.1 1776.1 895.8 C1780.8 907.6 1786.0 919.0 1791.1 930.7 C1796.2 942.4 1800.4 954.8 1806.7 966.0 C1813.0 977.1 1820.5 987.7 1828.8 997.4 C1837.1 1007.1 1847.3 1014.9 1856.4 1023.9 C1865.5 1033.0 1878.9 1047.1 1883.4 1051.7" stroke-width="1.5" stroke-opacity="0.54"/><path d="M1312.3 549.5 C1317.8 552.5 1333.9 562.4 1345.4 567.0 C1356.9 571.7 1369.3 574.1 1381.4 577.3 C1393.5 580.5 1405.7 583.2 1417.8 586.2 C1430.0 589.1 1442.1 592.1 1454.3 595.1 C1466.4 598.0 1478.7 600.5 1490.7 604.0 C1502.6 607.6 1514.5 611.6 1526.0 616.4 C1537.6 621.1 1548.7 627.0 1559.9 632.5 C1571.1 637.9 1582.7 643.0 1593.4 649.2 C1604.2 655.5 1615.0 662.0 1624.5 670.0 C1634.0 678.0 1646.0 692.7 1650.3 697.3" stroke-width="1.2" stroke-opacity="0.62"/><path d="M583.0 905.8 C584.9 899.6 590.4 881.0 594.5 868.6 C598.6 856.3 602.8 844.0 607.6 831.9 C612.5 819.9 617.2 807.5 623.4 796.3 C629.7 785.1 637.7 774.9 645.3 764.5 C653.0 754.2 660.8 743.8 669.4 734.0 C677.9 724.3 687.4 715.2 696.6 706.0 C705.8 696.8 715.6 688.0 724.8 678.7 C734.0 669.3 742.9 659.7 751.7 649.9 C760.5 640.1 768.5 629.4 777.5 619.7 C786.4 610.0 800.9 596.2 805.6 591.5" stroke-width="2.2" stroke-opacity="0.55"/><path d="M550.3 969.2 C552.0 962.8 556.3 943.4 560.4 930.7 C564.4 918.1 569.5 905.8 574.5 893.6 C579.6 881.3 585.0 869.2 590.6 857.2 C596.2 845.3 601.8 833.3 608.2 821.8 C614.6 810.2 621.4 798.9 629.0 788.2 C636.6 777.6 645.3 767.8 653.9 757.9 C662.4 747.9 670.8 737.8 680.2 728.7 C689.5 719.5 704.9 707.2 709.9 702.9" stroke-width="2.6" stroke-opacity="0.78"/><path d="M598.1 943.5 C600.2 937.6 606.3 919.7 610.7 907.9 C615.1 896.0 619.4 884.2 624.3 872.6 C629.1 861.0 634.3 849.5 639.6 838.1 C644.8 826.7 650.4 815.5 655.8 804.1 C661.2 792.8 669.2 775.8 671.8 770.2" stroke-width="1.0" stroke-opacity="0.94"/><path d="M650.4 817.1 C652.9 811.4 660.1 794.0 665.4 782.8 C670.8 771.5 675.4 759.4 682.6 749.5 C689.9 739.5 699.5 731.1 708.8 722.8 C718.1 714.6 728.5 707.3 738.5 699.9 C748.6 692.5 764.2 682.1 769.3 678.5" stroke-width="2.6" stroke-opacity="0.90"/><path d="M826.5 622.9 C831.4 619.0 846.0 607.0 856.2 599.6 C866.4 592.2 876.8 585.2 887.6 578.6 C898.3 572.1 909.2 565.7 920.5 560.3 C931.9 555.0 943.7 550.5 955.6 546.5 C967.5 542.5 985.9 538.0 992.0 536.3" stroke-width="1.5" stroke-opacity="0.69"/><path d="M1359.5 532.1 C1365.6 533.8 1384.2 538.6 1396.4 541.9 C1408.7 545.2 1421.1 547.8 1433.0 552.1 C1445.0 556.4 1456.9 561.8 1468.1 567.7 C1479.3 573.6 1489.4 580.8 1500.2 587.5 C1510.9 594.2 1521.6 601.1 1532.5 607.7 C1543.4 614.4 1560.3 624.0 1565.8 627.3" stroke-width="2.2" stroke-opacity="0.45"/><path d="M1484.1 548.6 C1489.0 552.3 1503.5 563.6 1513.6 571.0 C1523.7 578.5 1533.7 586.6 1544.8 593.1 C1555.8 599.6 1567.9 604.8 1579.8 610.1 C1591.7 615.4 1605.0 618.4 1616.0 625.0 C1627.0 631.6 1637.1 640.3 1645.9 649.6 C1654.8 658.9 1661.3 670.4 1669.0 680.8 C1676.8 691.2 1683.7 702.3 1692.3 712.0 C1700.9 721.7 1712.2 729.2 1720.7 739.0 C1729.2 748.9 1739.6 765.7 1743.4 771.0" stroke-width="1.2" stroke-opacity="0.56"/><path d="M1166.8 489.5 C1173.2 490.1 1192.5 491.7 1205.4 493.0 C1218.3 494.3 1231.2 495.6 1244.0 497.4 C1256.8 499.3 1269.5 501.7 1282.2 503.8 C1294.9 506.0 1307.5 508.4 1320.3 510.4 C1333.0 512.4 1345.8 514.4 1358.9 515.6 C1371.9 516.8 1385.2 517.2 1398.4 517.6 C1411.6 518.0 1425.3 516.4 1438.3 517.9 C1451.3 519.4 1465.2 521.3 1476.5 526.8 C1487.8 532.3 1496.5 542.4 1506.2 550.7 C1515.8 559.1 1524.1 569.2 1534.4 577.0 C1544.7 584.7 1562.3 593.9 1567.9 597.3" stroke-width="1.0" stroke-opacity="0.69"/><path d="M1346.8 542.8 C1352.8 545.1 1370.6 552.0 1382.5 556.3 C1394.4 560.6 1406.4 564.1 1418.2 568.6 C1429.9 573.1 1441.6 578.2 1453.2 583.3 C1464.7 588.3 1481.6 596.4 1487.3 599.0" stroke-width="1.5" stroke-opacity="0.82"/><path d="M1833.0 979.7 C1836.1 985.1 1844.9 1001.9 1851.5 1012.2 C1858.2 1022.4 1869.4 1036.5 1872.9 1041.3" stroke-width="1.2" stroke-opacity="0.71"/><path d="M581.1 869.8 C584.0 863.8 592.4 845.7 598.6 834.0 C604.8 822.3 610.8 810.3 618.3 799.5 C625.7 788.6 639.1 773.9 643.3 768.8" stroke-width="1.5" stroke-opacity="0.92"/><path d="M866.9 549.5 C872.3 545.6 887.8 533.1 899.2 526.4 C910.5 519.8 922.6 513.9 935.0 509.5 C947.5 505.1 960.8 502.8 973.8 500.3 C986.8 497.7 1000.0 496.0 1013.1 494.3 C1026.3 492.6 1039.5 491.5 1052.6 490.1 C1065.8 488.7 1078.9 487.1 1092.0 485.9 C1105.1 484.7 1118.3 483.0 1131.4 483.1 C1144.6 483.2 1157.7 485.0 1170.8 486.3 C1183.9 487.7 1196.9 489.6 1209.9 491.5 C1222.9 493.3 1236.0 495.0 1248.8 497.4 C1261.7 499.8 1274.3 502.8 1286.8 505.9 C1299.4 508.9 1311.7 512.4 1324.1 515.6 C1336.5 518.9 1355.1 523.7 1361.3 525.3" stroke-width="1.5" stroke-opacity="0.64"/><path d="M1852.6 997.3 C1856.5 1002.5 1867.8 1018.4 1875.7 1028.6 C1883.7 1038.8 1896.1 1053.6 1900.2 1058.5" stroke-width="1.8" stroke-opacity="0.78"/><path d="M558.9 950.6 C560.9 944.3 566.4 925.3 570.9 912.9 C575.4 900.5 580.6 888.4 585.9 876.3 C591.1 864.2 599.5 846.4 602.3 840.4" stroke-width="1.0" stroke-opacity="0.55"/><path d="M1116.7 497.6 C1123.0 497.6 1142.1 497.3 1154.8 497.9 C1167.5 498.6 1180.2 499.9 1192.8 501.5 C1205.4 503.0 1218.1 504.7 1230.5 507.1 C1243.0 509.5 1255.6 511.9 1267.5 515.7 C1279.5 519.6 1290.7 525.2 1302.2 530.1 C1313.8 535.0 1324.9 540.6 1336.7 544.9 C1348.4 549.2 1360.5 553.0 1372.8 555.9 C1385.0 558.9 1397.7 560.1 1410.1 562.6 C1422.5 565.1 1441.0 569.5 1447.2 570.9" stroke-width="2.2" stroke-opacity="0.57"/><path d="M662.1 761.2 C666.1 756.2 676.9 740.3 685.6 731.1 C694.2 721.8 704.4 713.8 714.2 705.5 C723.9 697.2 734.1 689.4 743.9 681.3 C753.7 673.1 763.6 665.1 773.0 656.5 C782.4 647.9 795.8 634.1 800.4 629.6" stroke-width="1.0" stroke-opacity="0.70"/><path d="M1343.5 536.8 C1349.6 538.7 1367.6 545.0 1379.8 548.5 C1391.9 551.9 1404.4 554.1 1416.5 557.6 C1428.6 561.1 1440.9 564.8 1452.6 569.6 C1464.2 574.3 1475.3 580.4 1486.4 586.1 C1497.5 591.8 1508.3 597.8 1519.4 603.9 C1530.4 609.9 1541.6 616.4 1552.7 622.6 C1563.9 628.8 1580.7 637.8 1586.3 640.8" stroke-width="1.8" stroke-opacity="0.76"/><path d="M565.3 1042.9 C567.0 1036.8 571.7 1018.4 575.4 1006.2 C579.0 994.1 583.2 982.1 587.2 970.1 C591.2 958.1 595.1 946.1 599.2 934.2 C603.3 922.2 607.3 910.2 611.7 898.4 C616.1 886.5 620.6 874.7 625.4 863.1 C630.3 851.5 635.6 840.0 640.9 828.6 C646.2 817.2 651.6 805.8 657.1 794.6 C662.7 783.3 667.4 771.5 674.1 761.0 C680.8 750.5 688.4 740.3 697.2 731.4 C706.0 722.6 716.7 715.4 726.7 707.9 C736.8 700.4 747.4 693.5 757.7 686.4 C768.1 679.3 783.7 668.8 788.8 665.2" stroke-width="2.6" stroke-opacity="0.81"/><path d="M1832.7 968.9 C1836.8 974.1 1849.0 990.1 1857.6 1000.5 C1866.2 1011.0 1875.3 1021.3 1884.4 1031.5 C1893.5 1041.8 1907.5 1057.0 1912.2 1062.1" stroke-width="2.2" stroke-opacity="0.39"/><path d="M766.1 681.6 C771.1 677.9 786.7 667.4 796.2 659.4 C805.7 651.3 814.0 641.8 823.2 633.3 C832.4 624.9 846.7 612.8 851.5 608.7" stroke-width="2.2" stroke-opacity="0.58"/><path d="M784.2 667.2 C788.8 663.0 802.8 650.4 812.0 642.0 C821.3 633.6 830.3 624.8 839.8 616.7 C849.3 608.6 859.1 600.7 869.3 593.4 C879.5 586.2 890.1 579.5 900.9 573.2 C911.7 566.9 922.6 560.6 934.1 555.6 C945.5 550.5 957.5 546.8 969.4 543.0 C981.3 539.1 993.5 535.9 1005.5 532.4 C1017.5 528.9 1029.5 525.4 1041.6 522.1 C1053.6 518.7 1065.6 514.9 1077.8 512.1 C1089.9 509.4 1102.2 506.5 1114.6 505.3 C1127.0 504.2 1145.9 505.2 1152.1 505.2" stroke-width="2.6" stroke-opacity="0.61"/><path d="M1685.1 707.7 C1689.7 712.2 1704.0 725.3 1712.6 734.8 C1721.3 744.3 1730.2 754.1 1737.1 764.8 C1744.0 775.6 1751.4 793.7 1754.3 799.5" stroke-width="2.6" stroke-opacity="0.65"/><path d="M1803.5 934.5 C1806.3 940.3 1813.8 958.6 1820.5 969.6 C1827.2 980.7 1835.5 990.9 1843.8 1000.9 C1852.1 1010.8 1861.4 1020.0 1870.3 1029.6 C1879.1 1039.2 1892.5 1053.8 1896.9 1058.6" stroke-width="1.0" stroke-opacity="0.88"/><path d="M1358.0 499.3 C1364.7 499.7 1384.6 501.1 1398.0 501.4 C1411.4 501.8 1425.0 500.0 1438.1 501.5 C1451.3 503.0 1465.5 504.3 1476.8 510.3 C1488.0 516.3 1496.6 528.0 1505.7 537.6 C1514.9 547.2 1522.0 559.1 1531.8 568.0 C1541.6 576.9 1552.8 584.6 1564.3 591.0 C1575.9 597.3 1589.4 600.2 1601.4 606.0 C1613.3 611.7 1625.9 617.2 1635.9 625.6 C1645.9 633.9 1653.7 645.4 1661.3 656.2 C1668.9 667.1 1673.8 680.0 1681.7 690.7 C1689.5 701.4 1699.4 710.4 1708.4 720.2 C1717.4 729.9 1727.9 738.7 1735.6 749.4 C1743.2 760.1 1751.2 778.7 1754.4 784.6" stroke-width="1.0" stroke-opacity="0.35"/><path d="M1821.8 1013.8 C1827.3 1017.5 1844.2 1028.0 1854.8 1036.2 C1865.3 1044.3 1879.9 1058.1 1885.0 1062.5" stroke-width="1.5" stroke-opacity="0.84"/><path d="M1757.3 860.8 C1758.9 866.8 1763.6 885.2 1767.0 897.2 C1770.5 909.3 1774.0 921.3 1778.2 933.1 C1782.3 945.0 1786.0 957.5 1791.9 968.5 C1797.7 979.6 1805.0 990.4 1813.4 999.5 C1821.9 1008.6 1833.2 1014.9 1842.6 1023.1 C1852.1 1031.3 1865.6 1044.7 1870.2 1049.0" stroke-width="1.5" stroke-opacity="0.61"/><path d="M815.4 624.7 C820.1 620.4 833.8 607.2 843.5 599.0 C853.2 590.7 863.4 583.1 873.5 575.3 C883.6 567.5 893.5 559.4 904.1 552.3 C914.8 545.3 925.8 538.6 937.3 533.1 C948.7 527.7 960.9 523.6 973.0 519.6 C985.1 515.6 1003.6 510.9 1009.8 509.2" stroke-width="2.6" stroke-opacity="0.46"/><path d="M1052.9 513.3 C1059.1 511.9 1077.5 507.4 1089.9 505.3 C1102.3 503.3 1114.9 501.4 1127.5 501.0 C1140.1 500.6 1152.8 501.8 1165.3 502.7 C1177.9 503.7 1190.5 505.2 1203.0 506.9 C1215.4 508.6 1228.1 510.1 1240.3 513.1 C1252.4 516.2 1264.4 520.2 1275.9 525.2 C1287.3 530.2 1298.0 537.0 1309.1 542.8 C1320.2 548.6 1330.9 555.4 1342.4 560.2 C1353.9 564.9 1372.2 569.6 1378.2 571.5" stroke-width="2.6" stroke-opacity="0.80"/><path d="M570.3 1005.7 C572.1 999.7 577.6 981.4 581.3 969.2 C585.0 957.0 588.5 944.8 592.4 932.7 C596.3 920.6 600.3 908.5 604.6 896.5 C608.9 884.5 613.4 872.6 618.2 860.8 C623.0 849.1 628.2 837.4 633.5 825.9 C638.9 814.4 644.5 803.0 650.5 791.8 C656.4 780.7 662.0 769.4 669.1 759.0 C676.2 748.6 688.9 734.4 692.9 729.5" stroke-width="1.2" stroke-opacity="0.73"/><path d="M1635.8 676.4 C1640.2 680.5 1653.4 692.9 1662.2 701.4 C1671.0 709.8 1680.0 718.1 1688.5 726.9 C1697.1 735.6 1709.3 749.5 1713.5 754.0" stroke-width="1.0" stroke-opacity="0.43"/><path d="M716.2 717.0 C720.8 712.9 734.4 700.8 743.5 692.6 C752.7 684.3 762.2 676.5 770.9 667.5 C779.6 658.5 791.5 643.4 795.6 638.5" stroke-width="1.2" stroke-opacity="0.62"/><path d="M1725.4 739.8 C1729.0 745.4 1741.2 761.3 1747.0 773.1 C1752.8 784.9 1756.1 797.9 1760.4 810.4 C1764.7 822.9 1767.3 836.2 1772.9 848.2 C1778.4 860.2 1786.4 871.1 1793.8 882.3 C1801.1 893.4 1810.1 903.7 1816.8 915.2 C1823.5 926.7 1827.8 939.5 1833.9 951.4 C1840.1 963.2 1846.5 974.9 1853.7 986.2 C1860.9 997.6 1869.0 1008.6 1877.1 1019.3 C1885.3 1030.0 1898.3 1045.4 1902.6 1050.6" stroke-width="1.5" stroke-opacity="0.32"/><path d="M599.1 914.7 C601.4 908.8 607.8 890.8 612.5 879.0 C617.2 867.2 622.3 855.5 627.5 843.9 C632.8 832.3 638.4 820.9 644.1 809.6 C649.8 798.3 655.5 787.1 661.8 776.2 C668.1 765.3 673.8 753.8 681.8 744.1 C689.7 734.5 699.9 726.4 709.5 718.3 C719.2 710.2 729.6 702.8 739.8 695.4 C750.1 688.0 760.9 681.3 771.0 673.8 C781.1 666.3 795.5 654.2 800.5 650.3" stroke-width="1.0" stroke-opacity="0.66"/><path d="M799.7 656.2 C804.2 651.9 817.4 638.6 826.6 630.2 C835.9 621.7 845.3 613.4 855.1 605.7 C864.9 598.0 875.0 590.6 885.5 583.8 C895.9 577.0 906.7 570.5 917.8 564.8 C928.9 559.1 940.4 554.0 952.0 549.6 C963.7 545.1 975.8 541.8 987.8 538.2 C999.7 534.6 1011.8 531.4 1023.8 527.9 C1035.8 524.4 1047.6 520.2 1059.7 516.9 C1071.7 513.7 1083.9 510.3 1096.2 508.3 C1108.4 506.2 1121.0 504.9 1133.4 504.6 C1145.9 504.3 1158.4 505.5 1170.8 506.5 C1183.3 507.5 1195.7 508.9 1208.1 510.7 C1220.5 512.4 1238.9 515.9 1245.1 517.0" stroke-width="1.0" stroke-opacity="0.67"/><path d="M1422.1 504.7 C1428.5 505.9 1448.8 507.0 1460.6 512.1 C1472.5 517.2 1483.3 526.3 1493.1 535.3 C1502.8 544.3 1509.7 556.6 1519.2 566.0 C1528.6 575.4 1538.8 584.4 1549.7 591.8 C1560.6 599.2 1573.0 604.4 1584.7 610.5 C1596.4 616.7 1614.0 625.5 1619.9 628.5" stroke-width="1.5" stroke-opacity="0.33"/><path d="M1280.2 526.1 C1285.7 529.2 1302.2 538.5 1313.3 544.6 C1324.3 550.8 1335.0 557.9 1346.5 563.0 C1357.9 568.1 1376.1 573.2 1382.0 575.2" stroke-width="2.6" stroke-opacity="0.74"/><path d="M540.7 993.0 C541.9 986.5 545.2 966.7 548.0 953.7 C550.7 940.6 553.3 927.5 557.1 914.8 C560.8 902.0 565.7 889.5 570.4 877.1 C575.1 864.6 582.8 846.2 585.3 840.0" stroke-width="1.5" stroke-opacity="0.53"/><path d="M558.4 950.5 C560.6 944.3 566.8 925.4 571.8 913.1 C576.8 900.9 582.6 888.9 588.3 877.0 C594.0 865.1 599.8 853.3 606.1 841.7 C612.3 830.1 622.3 813.2 625.6 807.5" stroke-width="2.2" stroke-opacity="0.92"/><path d="M728.4 698.4 C733.2 694.4 747.9 682.5 757.2 674.1 C766.6 665.7 775.7 656.9 784.6 647.8 C793.5 638.7 806.3 624.2 810.6 619.4" stroke-width="1.0" stroke-opacity="0.51"/><path d="M625.9 848.4 C628.3 842.5 635.1 824.7 640.2 813.2 C645.3 801.7 650.7 790.3 656.6 779.2 C662.5 768.1 668.1 756.6 675.6 746.6 C683.1 736.6 692.5 727.8 701.7 719.1 C710.8 710.4 720.8 702.5 730.5 694.4 C740.2 686.2 750.3 678.5 759.7 670.1 C769.2 661.6 778.3 652.8 787.4 643.8 C796.4 634.8 804.8 624.9 814.2 616.2 C823.6 607.5 833.7 599.7 843.8 591.7 C853.8 583.7 864.1 576.1 874.4 568.4 C884.7 560.7 900.4 549.5 905.6 545.7" stroke-width="2.2" stroke-opacity="0.71"/><path d="M1487.3 599.0 C1493.2 600.9 1511.0 606.1 1522.6 610.6 C1534.1 615.1 1545.3 620.8 1556.7 625.9 C1568.1 631.1 1579.8 635.7 1591.0 641.4 C1602.1 647.1 1613.7 652.6 1623.5 660.1 C1633.3 667.7 1641.1 677.7 1649.8 686.7 C1658.4 695.6 1671.2 709.2 1675.5 713.8" stroke-width="2.6" stroke-opacity="0.44"/><path d="M714.0 705.4 C718.8 701.2 733.4 689.0 743.0 680.6 C752.5 672.1 762.0 663.7 771.1 654.8 C780.3 645.8 788.6 635.9 797.7 626.8 C806.8 617.6 815.8 608.3 825.7 600.0 C835.5 591.7 846.6 585.0 856.8 577.1 C867.0 569.2 876.5 560.3 887.0 552.6 C897.4 544.9 908.0 537.2 919.3 531.1 C930.6 524.9 942.7 519.8 954.8 515.5 C967.0 511.2 979.6 508.3 992.2 505.3 C1004.7 502.2 1017.3 499.5 1030.0 497.1 C1042.8 494.7 1055.6 493.0 1068.4 490.9 C1081.2 488.8 1100.5 485.7 1106.9 484.7" stroke-width="1.0" stroke-opacity="0.60"/><path d="M1115.8 481.1 C1122.5 481.6 1142.6 482.3 1155.9 483.8 C1169.1 485.3 1182.3 487.8 1195.4 490.0 C1208.5 492.2 1221.6 494.3 1234.4 497.1 C1247.3 499.9 1266.2 505.1 1272.5 506.7" stroke-width="1.8" stroke-opacity="0.78"/><path d="M549.8 1008.7 C551.3 1002.3 555.7 983.2 558.6 970.5 C561.4 957.7 563.6 944.8 566.9 932.1 C570.3 919.5 574.3 907.0 578.5 894.6 C582.7 882.2 587.3 869.9 592.1 857.7 C596.8 845.5 601.5 833.2 607.2 821.4 C612.9 809.6 618.9 797.9 626.0 787.0 C633.2 776.2 641.9 766.4 650.2 756.4 C658.5 746.3 667.0 736.3 676.1 726.9 C685.1 717.4 694.9 708.6 704.4 699.6 C714.0 690.7 724.0 682.2 733.4 673.0 C742.8 663.9 756.3 649.6 760.8 644.9" stroke-width="2.2" stroke-opacity="0.63"/><path d="M1713.4 744.1 C1717.2 749.4 1729.7 764.5 1736.0 775.7 C1742.3 786.9 1747.1 799.1 1751.4 811.3 C1755.7 823.5 1758.0 836.5 1761.9 848.7 C1765.8 861.0 1770.0 873.2 1774.9 885.0 C1779.8 896.7 1786.0 907.8 1791.2 919.5 C1796.4 931.2 1800.4 943.8 1806.1 955.3 C1811.8 966.8 1817.9 978.5 1825.5 988.7 C1833.1 998.9 1842.9 1007.2 1851.7 1016.6 C1860.5 1025.9 1873.8 1039.9 1878.2 1044.6" stroke-width="2.6" stroke-opacity="0.41"/><path d="M1640.8 638.5 C1644.7 643.9 1656.7 660.0 1664.2 671.0 C1671.7 682.0 1677.7 694.2 1685.9 704.6 C1694.1 715.0 1704.7 723.3 1713.2 733.4 C1721.7 743.5 1730.2 753.9 1736.9 765.2 C1743.5 776.6 1748.6 789.0 1753.1 801.5 C1757.6 813.9 1759.7 827.2 1763.8 839.7 C1767.8 852.3 1772.1 864.8 1777.4 876.6 C1782.7 888.5 1790.1 899.2 1795.6 911.0 C1801.2 922.8 1805.3 935.3 1810.6 947.2 C1816.0 959.1 1821.0 971.4 1827.9 982.2 C1834.8 993.0 1843.7 1002.3 1852.0 1012.0 C1860.2 1021.8 1873.2 1036.0 1877.5 1040.8" stroke-width="2.2" stroke-opacity="0.64"/><path d="M1768.3 878.8 C1771.0 884.4 1779.3 901.0 1784.9 912.3 C1790.6 923.6 1795.8 935.3 1802.0 946.5 C1808.3 957.7 1814.5 969.3 1822.3 979.6 C1830.2 989.9 1840.0 998.9 1849.2 1008.4 C1858.3 1017.9 1867.9 1027.2 1877.2 1036.8 C1886.5 1046.4 1900.4 1061.1 1905.0 1066.0" stroke-width="2.6" stroke-opacity="0.95"/><path d="M905.4 545.4 C911.4 542.9 929.0 534.5 941.3 530.6 C953.6 526.6 966.6 524.3 979.3 521.6 C992.0 519.0 1004.9 517.1 1017.6 514.9 C1030.4 512.6 1042.9 510.1 1055.6 507.9 C1068.2 505.8 1087.2 503.1 1093.6 502.1" stroke-width="2.6" stroke-opacity="0.45"/><path d="M694.2 704.6 C698.8 700.0 713.1 686.3 722.1 676.7 C731.2 667.1 739.9 657.1 748.6 647.0 C757.2 636.9 765.1 626.0 774.0 616.1 C782.9 606.2 797.5 592.4 802.2 587.6" stroke-width="1.2" stroke-opacity="0.50"/><path d="M600.7 819.1 C603.9 813.3 612.1 795.2 619.5 784.4 C626.8 773.6 636.2 764.1 644.9 754.2 C653.6 744.3 662.4 734.4 671.4 724.8 C680.5 715.2 689.9 705.9 699.2 696.5 C708.5 687.1 718.3 678.0 727.3 668.2 C736.3 658.4 744.4 647.8 753.2 637.6 C761.9 627.5 775.3 612.6 779.7 607.5" stroke-width="2.6" stroke-opacity="0.48"/><path d="M924.5 539.7 C930.3 537.0 947.3 528.2 959.1 523.6 C971.0 519.0 983.2 515.5 995.4 511.9 C1007.6 508.3 1020.0 505.0 1032.4 502.1 C1044.8 499.2 1057.3 496.8 1069.9 494.3 C1082.5 491.8 1095.1 488.8 1107.9 487.2 C1120.7 485.7 1140.1 485.3 1146.5 484.9" stroke-width="1.8" stroke-opacity="0.55"/><path d="M565.0 1038.3 C566.7 1032.1 571.6 1013.7 575.3 1001.5 C579.0 989.4 583.1 977.4 587.1 965.4 C591.0 953.3 594.9 941.3 599.0 929.3 C603.0 917.3 607.1 905.3 611.6 893.5 C616.0 881.6 620.6 869.8 625.6 858.2 C630.5 846.6 635.9 835.1 641.3 823.7 C646.6 812.3 652.1 801.0 657.8 789.8 C663.5 778.6 668.4 766.8 675.5 756.5 C682.5 746.2 690.9 736.6 699.9 728.0 C709.0 719.3 719.5 712.1 729.7 704.6 C739.8 697.1 755.5 686.6 760.6 683.0" stroke-width="2.6" stroke-opacity="0.68"/><path d="M562.3 1014.5 C563.9 1008.3 568.7 989.7 571.9 977.3 C575.0 964.9 577.9 952.5 581.2 940.1 C584.6 927.7 588.2 915.4 592.1 903.1 C596.1 890.9 600.2 878.7 604.7 866.7 C609.1 854.6 613.8 842.6 618.9 830.8 C624.1 819.0 629.3 807.2 635.5 796.0 C641.7 784.8 652.5 769.1 656.0 763.8" stroke-width="1.8" stroke-opacity="0.87"/><path d="M1731.2 766.6 C1734.3 772.2 1744.6 788.4 1749.7 800.1 C1754.7 811.7 1757.1 824.5 1761.4 836.6 C1765.6 848.6 1769.4 861.0 1775.1 872.4 C1780.9 883.8 1792.4 899.6 1795.9 905.0" stroke-width="1.8" stroke-opacity="0.48"/><path d="M1708.1 755.6 C1711.8 760.8 1723.9 775.6 1730.1 786.4 C1736.4 797.3 1741.5 808.9 1745.7 820.7 C1749.9 832.5 1753.8 851.2 1755.4 857.3" stroke-width="2.2" stroke-opacity="0.68"/><path d="M624.7 817.5 C627.5 811.8 635.2 794.2 641.5 783.1 C647.7 772.0 654.5 761.3 662.0 751.1 C669.6 740.8 678.1 731.1 686.9 721.8 C695.7 712.4 705.4 703.9 714.7 694.9 C723.9 685.9 733.6 677.3 742.6 668.0 C751.6 658.6 764.2 643.6 768.6 638.8" stroke-width="2.2" stroke-opacity="0.71"/><path d="M1486.1 587.0 C1491.7 589.5 1508.6 596.5 1519.8 601.9 C1531.0 607.2 1542.2 613.3 1553.5 618.8 C1564.9 624.3 1576.7 629.1 1588.0 634.8 C1599.3 640.5 1611.2 645.7 1621.2 653.2 C1631.1 660.7 1639.2 670.8 1647.9 680.0 C1656.5 689.2 1664.5 698.9 1672.9 708.3 C1681.3 717.7 1690.1 726.9 1698.2 736.6 C1706.3 746.3 1717.6 761.5 1721.5 766.5" stroke-width="1.8" stroke-opacity="0.60"/><path d="M1355.9 545.5 C1362.2 546.5 1381.1 549.3 1393.8 551.1 C1406.4 552.8 1419.4 553.5 1431.9 555.8 C1444.4 558.2 1457.2 561.0 1468.9 565.3 C1480.6 569.5 1491.0 575.6 1501.9 581.4 C1512.7 587.2 1528.7 597.0 1534.1 600.1" stroke-width="2.6" stroke-opacity="0.67"/><path d="M1123.4 503.0 C1129.7 503.1 1148.4 502.8 1160.9 503.3 C1173.3 503.9 1185.8 504.9 1198.3 506.2 C1210.7 507.5 1223.3 508.9 1235.5 511.3 C1247.8 513.7 1265.7 519.2 1271.8 520.7" stroke-width="1.0" stroke-opacity="0.48"/><path d="M1276.8 511.9 C1282.8 514.0 1300.7 520.2 1312.6 524.4 C1324.5 528.6 1336.2 533.4 1348.4 536.9 C1360.5 540.4 1373.1 543.0 1385.5 545.5 C1398.0 548.1 1416.8 551.0 1423.1 552.1" stroke-width="1.2" stroke-opacity="0.57"/><path d="M1208.0 510.0 C1214.2 511.0 1233.1 513.0 1245.0 516.4 C1257.0 519.8 1268.6 524.9 1279.8 530.3 C1291.0 535.8 1301.4 543.0 1312.4 549.1 C1323.3 555.3 1339.9 564.0 1345.4 567.0" stroke-width="2.6" stroke-opacity="0.53"/><path d="M678.6 737.9 C683.4 733.6 697.5 720.3 707.3 712.0 C717.2 703.7 727.6 696.1 737.7 688.3 C747.9 680.4 758.4 673.1 768.3 665.1 C778.2 657.1 787.6 648.5 797.2 640.1 C806.8 631.8 815.9 622.8 825.8 614.9 C835.7 607.0 846.2 599.7 856.6 592.5 C867.0 585.3 877.5 578.1 888.4 571.6 C899.2 565.0 910.1 558.5 921.6 553.2 C933.1 547.9 951.3 542.2 957.3 539.9" stroke-width="1.8" stroke-opacity="0.72"/><path d="M1875.0 1024.3 C1878.2 1029.4 1890.7 1049.9 1893.9 1055.0" stroke-width="1.2" stroke-opacity="0.67"/><path d="M1415.9 559.6 C1422.2 560.6 1441.7 562.6 1453.8 565.8 C1466.0 568.9 1477.5 573.5 1488.8 578.4 C1500.0 583.3 1510.3 589.5 1521.3 595.2 C1532.3 600.9 1543.4 607.3 1554.8 612.8 C1566.2 618.3 1578.4 622.6 1589.9 628.2 C1601.4 633.7 1613.6 638.5 1623.7 645.9 C1633.9 653.4 1646.1 668.4 1650.6 672.9" stroke-width="2.6" stroke-opacity="0.46"/><path d="M1190.7 490.2 C1197.2 491.3 1216.8 494.4 1229.7 497.0 C1242.5 499.6 1255.4 502.2 1267.8 505.9 C1280.2 509.6 1292.2 514.4 1304.1 519.2 C1316.0 524.0 1327.4 529.6 1339.2 534.5 C1351.0 539.4 1368.9 546.1 1374.9 548.5" stroke-width="2.2" stroke-opacity="0.76"/><path d="M1741.1 814.5 C1742.8 820.6 1748.3 838.7 1751.2 850.9 C1754.0 863.1 1755.9 875.6 1758.5 887.9 C1761.1 900.1 1763.5 912.4 1766.6 924.6 C1769.6 936.7 1771.9 949.3 1776.6 960.8 C1781.4 972.2 1787.3 983.9 1795.2 993.3 C1803.0 1002.6 1814.0 1009.2 1823.6 1017.0 C1833.3 1024.8 1848.1 1036.2 1852.9 1040.1" stroke-width="2.2" stroke-opacity="0.43"/><path d="M1531.3 613.4 C1536.9 616.3 1553.8 625.1 1564.9 631.0 C1576.1 636.8 1587.9 641.8 1598.5 648.5 C1609.1 655.2 1619.5 662.7 1628.7 671.1 C1638.0 679.6 1649.8 694.7 1654.0 699.4" stroke-width="2.6" stroke-opacity="0.65"/><path d="M977.3 517.7 C983.6 516.3 1002.4 511.9 1015.0 509.2 C1027.6 506.6 1040.1 504.0 1052.7 501.7 C1065.4 499.4 1078.0 497.1 1090.8 495.4 C1103.5 493.7 1116.4 491.8 1129.2 491.5 C1142.0 491.2 1154.9 492.5 1167.8 493.6 C1180.6 494.7 1193.4 496.3 1206.2 498.0 C1218.9 499.6 1231.8 501.1 1244.4 503.6 C1256.9 506.1 1269.2 509.6 1281.4 513.2 C1293.5 516.8 1305.3 521.2 1317.3 525.1 C1329.3 528.9 1347.4 534.4 1353.4 536.3" stroke-width="2.6" stroke-opacity="0.69"/><path d="M1583.0 617.0 C1588.8 620.0 1607.2 627.4 1617.7 635.0 C1628.1 642.5 1637.1 652.5 1645.7 662.3 C1654.2 672.1 1661.0 683.5 1668.9 693.9 C1676.8 704.2 1685.1 714.2 1693.3 724.3 C1701.6 734.3 1710.5 743.7 1718.2 754.1 C1725.9 764.6 1733.6 775.3 1739.3 786.9 C1744.9 798.5 1748.3 811.3 1752.1 823.7 C1755.8 836.1 1758.1 849.1 1761.7 861.5 C1765.2 873.8 1769.4 885.8 1773.4 897.9 C1777.4 910.0 1783.7 927.9 1785.7 933.9" stroke-width="1.8" stroke-opacity="0.58"/></g><g fill="none" stroke="#000" stroke-linecap="round"><path d="M1345.1 549.7 C1348.0 550.8 1356.8 554.4 1362.9 556.3 C1368.9 558.2 1375.1 559.5 1381.2 561.0 C1387.3 562.5 1393.4 563.8 1399.5 565.4 C1405.6 566.9 1411.6 568.6 1417.7 570.2 C1423.7 571.9 1429.8 573.6 1435.8 575.4 C1441.8 577.3 1447.9 579.3 1453.8 581.4 C1459.7 583.5 1465.5 585.8 1471.3 588.1 C1477.1 590.3 1482.8 592.5 1488.5 594.8 C1494.3 597.2 1500.0 599.5 1505.7 602.1 C1511.4 604.6 1519.8 608.8 1522.7 610.1" stroke-width="3.0" stroke-opacity="0.78"/><path d="M1647.3 658.0 C1649.2 660.7 1655.1 668.8 1658.8 674.2 C1662.6 679.6 1666.2 685.1 1670.0 690.5 C1673.7 695.9 1677.4 701.3 1681.4 706.5 C1685.4 711.7 1689.7 716.8 1694.0 721.7 C1698.3 726.7 1703.0 731.2 1707.3 736.2 C1711.5 741.1 1715.7 746.2 1719.6 751.4 C1723.5 756.7 1727.2 762.1 1730.7 767.7 C1734.1 773.2 1737.6 778.8 1740.5 784.7 C1743.4 790.5 1745.9 796.7 1748.0 802.9 C1750.1 809.1 1752.4 818.7 1753.2 821.8" stroke-width="2.0" stroke-opacity="0.63"/><path d="M986.5 504.5 C989.8 504.0 999.4 502.2 1005.9 501.1 C1012.3 500.0 1018.8 498.9 1025.3 497.9 C1031.7 497.0 1041.4 495.7 1044.7 495.2" stroke-width="3.0" stroke-opacity="0.94"/><path d="M1741.5 799.2 C1742.4 802.3 1745.6 811.6 1747.4 817.9 C1749.2 824.2 1750.6 830.6 1752.1 836.9 C1753.6 843.3 1755.6 852.8 1756.3 856.0" stroke-width="1.5" stroke-opacity="0.62"/><path d="M767.5 670.7 C770.0 668.8 777.5 663.0 782.3 658.9 C787.2 654.8 791.8 650.5 796.4 646.2 C801.0 641.8 805.5 637.3 810.1 633.0 C814.7 628.7 819.4 624.4 824.2 620.2 C829.0 616.1 833.8 612.1 838.8 608.2 C843.8 604.3 848.9 600.5 854.0 596.8 C859.1 593.1 864.3 589.4 869.5 585.8 C874.6 582.2 879.9 578.7 885.2 575.2 C890.5 571.8 895.8 568.5 901.2 565.2 C906.7 562.0 915.0 557.5 917.8 556.0" stroke-width="2.5" stroke-opacity="0.75"/><path d="M771.2 654.8 C773.5 652.6 780.6 646.0 785.2 641.6 C789.9 637.2 794.5 632.7 799.2 628.3 C803.9 623.9 808.5 619.5 813.4 615.3 C818.3 611.1 823.2 606.9 828.3 603.1 C833.4 599.2 838.8 595.7 844.1 592.1 C849.4 588.5 854.8 585.0 860.0 581.3 C865.3 577.7 870.4 573.8 875.7 570.1 C880.9 566.5 886.1 562.7 891.5 559.3 C896.8 555.8 902.3 552.4 907.9 549.3 C913.4 546.1 922.1 541.9 924.9 540.4" stroke-width="1.5" stroke-opacity="0.83"/><path d="M1361.2 544.2 C1364.3 544.8 1373.7 546.6 1380.1 547.5 C1386.4 548.4 1392.8 548.9 1399.1 549.7 C1405.4 550.5 1411.8 551.3 1418.1 552.2 C1424.4 553.2 1430.8 554.0 1437.1 555.3 C1443.3 556.6 1449.7 557.9 1455.7 559.8 C1461.8 561.6 1467.7 564.1 1473.4 566.6 C1479.1 569.1 1484.5 571.9 1489.9 574.8 C1495.3 577.7 1500.5 580.7 1505.8 583.8 C1511.1 587.0 1516.3 590.3 1521.7 593.5 C1527.1 596.7 1532.6 599.9 1538.1 603.0 C1543.7 606.1 1552.2 610.6 1555.0 612.1" stroke-width="1.5" stroke-opacity="0.85"/><path d="M1022.8 514.9 C1025.9 514.2 1035.2 511.9 1041.4 510.5 C1047.5 509.0 1053.7 507.6 1060.0 506.3 C1066.2 505.0 1075.6 503.4 1078.7 502.8" stroke-width="1.5" stroke-opacity="0.80"/><path d="M624.2 812.2 C625.9 809.4 630.8 800.9 634.3 795.5 C637.9 790.1 641.7 784.9 645.5 779.7 C649.2 774.5 653.0 769.3 656.8 764.1 C660.7 758.9 664.3 753.6 668.4 748.6 C672.5 743.6 676.7 738.7 681.3 734.1 C685.8 729.5 690.8 725.3 695.7 721.1 C700.6 716.8 705.7 712.7 710.7 708.7 C715.8 704.7 720.9 700.7 726.1 696.9 C731.2 693.0 739.1 687.3 741.7 685.4" stroke-width="1.5" stroke-opacity="0.94"/><path d="M1772.5 862.0 C1774.1 864.8 1778.6 873.5 1782.0 879.1 C1785.3 884.6 1789.2 889.9 1792.7 895.4 C1796.3 900.8 1801.5 909.1 1803.3 911.9" stroke-width="3.0" stroke-opacity="0.73"/><path d="M1790.5 920.0 C1792.0 922.7 1796.6 931.1 1799.7 936.7 C1802.8 942.3 1805.9 948.0 1809.3 953.5 C1812.7 959.1 1816.1 964.6 1819.9 969.9 C1823.7 975.3 1827.9 980.5 1832.3 985.5 C1836.6 990.5 1841.4 995.2 1846.1 999.9 C1850.8 1004.7 1858.0 1011.8 1860.4 1014.1" stroke-width="2.5" stroke-opacity="0.72"/><path d="M1008.2 505.9 C1011.5 505.6 1021.5 504.8 1028.2 504.2 C1034.8 503.7 1041.4 503.1 1048.0 502.5 C1054.6 502.0 1061.1 501.5 1067.7 500.9 C1074.2 500.3 1084.0 499.4 1087.3 499.1" stroke-width="2.0" stroke-opacity="0.69"/><path d="M603.6 825.3 C605.0 822.4 609.0 813.3 612.0 807.5 C615.1 801.7 618.3 795.9 621.9 790.5 C625.5 785.1 629.8 780.1 633.8 775.0 C637.9 769.9 642.1 764.9 646.2 759.8 C650.4 754.8 654.4 749.6 658.7 744.7 C663.0 739.7 667.4 734.9 672.0 730.1 C676.5 725.4 681.2 720.7 685.9 716.1 C690.6 711.6 695.4 707.1 700.2 702.6 C705.0 698.1 709.8 693.7 714.6 689.2 C719.5 684.8 726.7 678.1 729.1 675.9" stroke-width="2.0" stroke-opacity="0.84"/><path d="M755.6 666.4 C757.7 664.1 764.4 657.2 768.6 652.4 C772.9 647.6 777.0 642.5 781.2 637.6 C785.4 632.6 789.6 627.6 793.9 622.7 C798.2 617.8 802.5 612.8 807.0 608.1 C811.5 603.4 818.7 596.7 821.0 594.4" stroke-width="3.0" stroke-opacity="0.83"/><path d="M633.2 795.0 C635.5 792.6 642.6 785.3 647.2 780.4 C651.8 775.5 656.2 770.6 660.6 765.6 C664.9 760.7 671.3 753.2 673.5 750.7" stroke-width="2.5" stroke-opacity="0.90"/><path d="M1655.2 672.3 C1657.1 675.1 1662.5 683.6 1666.3 689.1 C1670.1 694.6 1673.8 700.0 1677.8 705.4 C1681.7 710.7 1685.8 715.9 1690.0 721.0 C1694.2 726.2 1698.6 731.1 1702.7 736.2 C1706.8 741.3 1710.7 746.5 1714.5 751.9 C1718.3 757.3 1723.6 765.7 1725.4 768.4" stroke-width="2.0" stroke-opacity="0.74"/><path d="M1667.4 698.7 C1669.5 700.9 1675.7 707.6 1680.0 712.1 C1684.3 716.5 1688.6 721.0 1693.0 725.4 C1697.4 729.8 1702.0 734.1 1706.3 738.6 C1710.7 743.0 1715.0 747.5 1719.2 752.2 C1723.3 756.9 1729.1 764.4 1731.1 766.8" stroke-width="2.0" stroke-opacity="0.75"/><path d="M559.8 1047.4 C560.4 1044.3 562.3 1035.0 563.7 1028.8 C565.0 1022.6 566.4 1016.4 567.9 1010.3 C569.4 1004.1 571.0 997.9 572.5 991.8 C574.1 985.6 575.6 979.5 577.2 973.3 C578.7 967.2 580.2 961.0 581.7 954.8 C583.2 948.6 584.7 942.4 586.3 936.2 C587.9 930.1 590.4 920.8 591.3 917.7" stroke-width="3.0" stroke-opacity="0.63"/><path d="M600.3 850.0 C601.8 847.1 606.1 838.3 609.2 832.5 C612.2 826.7 615.3 820.9 618.5 815.2 C621.8 809.5 627.0 801.2 628.7 798.4" stroke-width="2.5" stroke-opacity="0.73"/><path d="M1358.2 518.0 C1361.4 518.5 1371.0 520.3 1377.5 521.2 C1383.9 522.0 1390.4 522.5 1396.9 523.0 C1403.3 523.6 1409.8 524.0 1416.2 524.7 C1422.7 525.3 1429.2 525.9 1435.6 527.0 C1442.0 528.0 1448.5 529.1 1454.7 531.0 C1460.9 532.9 1467.0 535.5 1472.7 538.6 C1478.3 541.6 1483.5 545.6 1488.5 549.5 C1493.5 553.4 1498.2 557.7 1502.9 561.9 C1507.7 566.1 1512.1 570.6 1517.0 574.7 C1521.9 578.8 1527.1 582.8 1532.3 586.6 C1537.6 590.4 1543.0 594.1 1548.5 597.5 C1554.1 600.9 1562.8 605.4 1565.7 607.0" stroke-width="2.0" stroke-opacity="0.90"/><path d="M747.9 678.4 C750.2 676.4 757.5 670.2 762.1 665.9 C766.8 661.6 771.4 657.2 775.9 652.7 C780.4 648.2 784.7 643.4 789.1 638.7 C793.5 634.0 797.9 629.2 802.3 624.6 C806.8 620.0 811.3 615.4 816.0 611.0 C820.7 606.6 828.1 600.3 830.5 598.2" stroke-width="2.0" stroke-opacity="0.85"/><path d="M705.3 716.0 C707.9 714.0 715.5 708.0 720.8 704.2 C726.0 700.4 731.4 696.8 736.8 693.2 C742.1 689.6 747.5 686.0 752.8 682.5 C758.2 679.0 763.7 675.6 769.1 672.1 C774.4 668.6 779.8 665.2 785.0 661.5 C790.2 657.8 797.6 651.9 800.1 650.0" stroke-width="3.0" stroke-opacity="0.91"/><path d="M1673.7 691.3 C1675.7 693.8 1681.2 701.7 1685.4 706.5 C1689.6 711.4 1694.1 716.1 1698.8 720.6 C1703.4 725.1 1708.6 729.1 1713.1 733.6 C1717.7 738.2 1724.1 745.6 1726.3 747.9" stroke-width="1.5" stroke-opacity="0.78"/><path d="M877.6 556.1 C880.3 554.3 888.2 548.6 893.7 545.2 C899.2 541.8 904.9 538.6 910.7 535.6 C916.5 532.7 922.4 529.8 928.4 527.4 C934.5 525.0 940.7 522.9 946.9 521.1 C953.2 519.2 959.6 517.8 966.0 516.3 C972.4 514.9 978.8 513.7 985.2 512.4 C991.6 511.2 1001.3 509.6 1004.5 509.0" stroke-width="3.0" stroke-opacity="0.89"/><path d="M1659.4 684.3 C1661.4 686.9 1667.3 694.5 1671.3 699.5 C1675.3 704.5 1679.3 709.5 1683.5 714.4 C1687.6 719.3 1692.0 724.1 1696.3 728.9 C1700.6 733.7 1706.9 740.9 1709.0 743.3" stroke-width="2.0" stroke-opacity="0.68"/><path d="M1589.2 630.4 C1592.1 631.9 1600.8 636.1 1606.3 639.5 C1611.7 642.8 1617.2 646.4 1622.1 650.5 C1627.0 654.7 1631.5 659.4 1635.9 664.2 C1640.2 669.0 1646.1 676.8 1648.2 679.3" stroke-width="2.5" stroke-opacity="0.67"/><path d="M789.9 646.3 C792.0 643.9 798.4 636.8 802.7 632.0 C807.0 627.3 811.3 622.5 815.8 618.0 C820.3 613.4 824.8 608.9 829.6 604.6 C834.4 600.4 839.4 596.5 844.4 592.5 C849.4 588.5 854.5 584.7 859.5 580.7 C864.5 576.6 869.4 572.4 874.4 568.3 C879.3 564.2 884.2 560.0 889.3 556.0 C894.4 552.1 899.5 548.2 904.8 544.5 C910.1 540.8 918.4 535.8 921.1 534.0" stroke-width="3.0" stroke-opacity="0.69"/><path d="M564.3 956.6 C565.0 953.4 567.0 943.8 568.5 937.5 C570.0 931.1 571.7 924.8 573.5 918.6 C575.3 912.3 577.3 906.1 579.4 899.9 C581.4 893.7 583.5 887.5 585.6 881.3 C587.8 875.1 590.0 869.0 592.3 862.9 C594.5 856.8 596.9 850.7 599.3 844.6 C601.7 838.5 604.2 832.5 606.8 826.5 C609.4 820.5 612.0 814.4 614.9 808.6 C617.8 802.8 620.9 797.0 624.4 791.5 C627.9 786.0 631.9 781.0 635.8 775.8 C639.7 770.6 643.8 765.6 647.8 760.5 C651.8 755.4 657.9 747.7 659.9 745.2" stroke-width="2.0" stroke-opacity="0.63"/><path d="M672.3 755.3 C674.2 752.7 679.5 744.8 683.7 740.0 C687.9 735.3 692.6 731.0 697.4 726.7 C702.1 722.5 707.2 718.7 712.2 714.7 C717.1 710.8 722.1 706.8 727.2 703.0 C732.3 699.2 737.5 695.6 742.7 691.9 C747.8 688.2 753.0 684.5 758.1 680.9 C763.3 677.2 768.6 673.8 773.7 670.1 C778.8 666.3 783.8 662.5 788.7 658.5 C793.5 654.5 798.1 650.1 802.7 645.9 C807.4 641.6 811.8 637.2 816.5 633.0 C821.2 628.8 828.4 622.7 830.8 620.6" stroke-width="2.0" stroke-opacity="0.81"/><path d="M557.0 1023.7 C557.7 1020.6 559.8 1011.2 561.3 1004.9 C562.7 998.6 564.3 992.4 565.8 986.2 C567.3 979.9 568.7 973.6 570.1 967.4 C571.5 961.1 572.8 954.8 574.3 948.5 C575.7 942.2 577.2 936.0 578.8 929.7 C580.5 923.5 582.3 917.3 584.1 911.1 C585.9 904.9 588.9 895.6 589.8 892.5" stroke-width="1.5" stroke-opacity="0.61"/><path d="M1725.0 750.4 C1726.9 753.0 1732.8 760.8 1736.3 766.2 C1739.8 771.7 1743.3 777.3 1746.1 783.1 C1748.9 788.9 1751.1 795.1 1753.2 801.2 C1755.4 807.3 1756.9 813.7 1758.8 819.9 C1760.7 826.1 1762.7 832.3 1764.7 838.5 C1766.8 844.6 1768.6 850.9 1771.2 856.9 C1773.7 862.9 1778.6 871.4 1780.1 874.3" stroke-width="2.5" stroke-opacity="0.65"/><path d="M580.2 890.0 C581.4 886.9 584.9 877.7 587.3 871.6 C589.8 865.5 592.3 859.5 594.9 853.4 C597.4 847.4 601.5 838.4 602.8 835.4" stroke-width="2.0" stroke-opacity="0.88"/><path d="M1080.0 494.1 C1083.3 493.7 1093.0 492.4 1099.5 491.8 C1106.0 491.2 1112.5 490.6 1119.0 490.4 C1125.6 490.3 1132.1 490.5 1138.6 490.9 C1145.1 491.3 1154.9 492.4 1158.1 492.7" stroke-width="3.0" stroke-opacity="0.93"/><path d="M575.5 996.9 C576.5 993.8 579.3 984.7 581.2 978.7 C583.1 972.6 585.0 966.6 586.9 960.6 C588.8 954.5 590.7 948.5 592.6 942.4 C594.6 936.4 596.5 930.3 598.5 924.3 C600.5 918.3 602.5 912.3 604.6 906.3 C606.7 900.3 608.8 894.3 611.0 888.4 C613.2 882.4 615.5 876.5 617.8 870.6 C620.1 864.7 622.5 858.9 625.0 853.1 C627.5 847.2 631.4 838.6 632.7 835.7" stroke-width="3.0" stroke-opacity="0.80"/><path d="M1679.4 699.2 C1681.5 701.6 1687.4 709.3 1691.8 714.0 C1696.2 718.7 1701.2 722.9 1705.8 727.4 C1710.5 731.9 1715.5 736.1 1719.8 740.9 C1724.2 745.7 1729.9 753.6 1732.0 756.1" stroke-width="2.5" stroke-opacity="0.91"/><path d="M1811.7 963.2 C1813.1 966.2 1816.8 975.3 1819.8 980.9 C1822.8 986.5 1826.3 991.9 1830.0 996.9 C1833.7 1001.8 1838.1 1006.2 1842.2 1010.8 C1846.3 1015.3 1850.5 1019.8 1854.6 1024.3 C1858.7 1028.9 1862.8 1033.6 1866.9 1038.2 C1871.0 1042.8 1875.1 1047.3 1879.2 1052.0 C1883.2 1056.6 1889.1 1063.7 1891.1 1066.0" stroke-width="3.0" stroke-opacity="0.75"/><path d="M1553.4 597.0 C1556.2 598.8 1564.6 604.5 1570.4 607.8 C1576.2 611.2 1582.1 614.0 1588.0 617.1 C1593.8 620.3 1602.4 625.1 1605.3 626.7" stroke-width="2.5" stroke-opacity="0.81"/><path d="M1428.0 518.8 C1431.0 520.0 1440.1 523.0 1446.1 525.8 C1452.0 528.7 1458.0 531.8 1463.5 535.7 C1469.0 539.5 1474.1 544.3 1479.1 549.0 C1484.1 553.6 1491.0 561.1 1493.4 563.5" stroke-width="3.0" stroke-opacity="0.87"/><path d="M1744.7 815.5 C1745.7 818.4 1748.6 827.0 1750.6 832.7 C1752.5 838.5 1754.3 844.3 1756.2 850.1 C1758.0 855.9 1760.6 864.7 1761.5 867.6" stroke-width="2.5" stroke-opacity="0.71"/><path d="M1760.3 857.0 C1761.2 860.0 1763.6 869.3 1765.6 875.4 C1767.5 881.4 1769.9 887.2 1772.2 893.1 C1774.4 899.0 1776.9 904.8 1779.1 910.6 C1781.4 916.5 1783.7 922.4 1785.9 928.4 C1788.1 934.3 1790.2 940.4 1792.6 946.3 C1795.0 952.3 1797.4 958.2 1800.3 963.9 C1803.2 969.6 1806.2 975.3 1809.7 980.6 C1813.2 986.0 1819.3 993.3 1821.3 995.9" stroke-width="3.0" stroke-opacity="0.77"/><path d="M852.0 578.8 C854.6 576.9 862.6 571.3 867.9 567.6 C873.2 563.9 878.3 560.0 883.7 556.4 C889.0 552.8 894.4 549.2 900.0 546.0 C905.6 542.7 911.3 539.7 917.2 536.9 C923.0 534.1 929.0 531.5 935.0 529.2 C941.1 527.0 950.5 524.4 953.6 523.4" stroke-width="3.0" stroke-opacity="0.88"/><path d="M1838.6 1020.2 C1840.8 1022.3 1847.4 1028.6 1851.7 1032.9 C1856.1 1037.2 1860.3 1041.5 1864.6 1045.9 C1868.8 1050.3 1875.0 1056.9 1877.1 1059.1" stroke-width="2.0" stroke-opacity="0.80"/><path d="M1021.0 500.0 C1024.2 499.3 1033.6 497.3 1039.9 496.1 C1046.2 494.9 1052.6 493.8 1058.9 492.7 C1065.3 491.7 1071.7 490.7 1078.1 489.6 C1084.5 488.5 1090.8 487.2 1097.3 486.1 C1103.7 485.1 1110.1 484.0 1116.6 483.4 C1123.1 482.7 1129.6 482.4 1136.1 482.3 C1142.6 482.2 1149.1 482.5 1155.6 482.8 C1162.1 483.1 1171.9 483.9 1175.1 484.1" stroke-width="1.5" stroke-opacity="0.85"/><path d="M932.4 543.7 C935.3 542.4 943.8 538.2 949.6 535.8 C955.5 533.4 961.4 531.2 967.4 529.1 C973.3 527.0 979.3 525.0 985.3 523.1 C991.3 521.2 997.4 519.4 1003.5 517.7 C1009.5 515.9 1015.6 514.2 1021.7 512.5 C1027.8 510.8 1033.9 509.0 1040.0 507.4 C1046.1 505.8 1052.2 504.3 1058.4 502.9 C1064.6 501.5 1070.8 500.3 1077.0 499.0 C1083.3 497.7 1089.5 496.3 1095.8 495.2 C1102.1 494.0 1111.6 492.7 1114.7 492.2" stroke-width="2.5" stroke-opacity="0.92"/><path d="M1258.5 503.7 C1261.6 504.4 1270.9 506.7 1277.1 508.3 C1283.3 510.0 1289.4 511.8 1295.5 513.5 C1301.6 515.2 1307.6 517.0 1313.7 518.8 C1319.8 520.5 1325.9 522.3 1332.0 524.0 C1338.1 525.7 1344.2 527.4 1350.4 528.9 C1356.6 530.4 1362.9 531.9 1369.2 533.0 C1375.5 534.1 1382.0 534.8 1388.3 535.6 C1394.7 536.4 1404.3 537.3 1407.5 537.7" stroke-width="3.0" stroke-opacity="0.71"/><path d="M559.7 990.3 C560.6 987.1 563.1 977.7 564.7 971.4 C566.4 965.1 567.9 958.8 569.5 952.6 C571.2 946.3 572.9 940.0 574.8 933.8 C576.7 927.6 578.7 921.4 580.8 915.3 C582.9 909.1 585.2 903.0 587.5 896.9 C589.7 890.8 592.1 884.8 594.4 878.7 C596.8 872.7 600.6 863.7 601.8 860.7" stroke-width="2.5" stroke-opacity="0.71"/><path d="M1603.0 617.7 C1605.9 619.2 1615.0 623.1 1620.5 626.6 C1626.0 630.1 1631.3 634.1 1636.1 638.6 C1640.8 643.0 1645.1 648.1 1649.2 653.1 C1653.3 658.1 1657.1 663.5 1660.8 668.9 C1664.6 674.2 1668.0 679.7 1671.7 685.1 C1675.3 690.5 1678.8 696.1 1682.8 701.2 C1686.8 706.4 1691.0 711.4 1695.5 716.2 C1700.0 720.9 1705.2 725.0 1709.8 729.7 C1714.5 734.3 1719.2 738.9 1723.3 743.9 C1727.5 748.9 1733.0 757.2 1734.9 759.8" stroke-width="2.0" stroke-opacity="0.61"/><path d="M901.5 539.3 C904.1 537.3 911.7 531.0 917.0 527.3 C922.4 523.5 927.9 519.9 933.5 516.7 C939.1 513.5 947.9 509.5 950.8 508.0" stroke-width="1.5" stroke-opacity="0.76"/><path d="M1711.9 747.5 C1713.8 750.1 1719.6 757.9 1723.3 763.2 C1726.9 768.5 1730.7 773.8 1734.0 779.3 C1737.3 784.9 1740.5 790.6 1743.0 796.5 C1745.5 802.4 1747.3 808.7 1749.2 814.9 C1751.1 821.1 1752.6 827.4 1754.3 833.6 C1755.9 839.9 1757.5 846.2 1759.1 852.4 C1760.7 858.6 1762.1 864.9 1763.9 871.1 C1765.7 877.2 1768.9 886.2 1769.9 889.2" stroke-width="1.5" stroke-opacity="0.84"/><path d="M784.5 654.5 C786.6 652.0 792.7 644.7 796.8 639.7 C800.9 634.8 804.8 629.7 809.0 624.8 C813.2 619.9 819.7 612.8 821.9 610.4" stroke-width="3.0" stroke-opacity="0.79"/><path d="M559.1 980.4 C559.7 977.2 561.4 967.6 562.6 961.2 C563.8 954.8 564.9 948.4 566.2 942.0 C567.5 935.6 568.9 929.2 570.5 922.9 C572.1 916.5 573.9 910.3 575.7 904.0 C577.5 897.7 579.5 891.5 581.5 885.2 C583.4 879.0 585.5 872.8 587.6 866.6 C589.7 860.4 591.9 854.2 594.1 848.1 C596.4 841.9 600.0 832.7 601.1 829.7" stroke-width="2.0" stroke-opacity="0.74"/><path d="M1770.7 911.1 C1771.8 913.9 1775.0 922.6 1777.2 928.3 C1779.5 934.1 1781.8 939.9 1784.4 945.6 C1787.0 951.3 1789.8 957.0 1793.0 962.5 C1796.1 968.0 1799.5 973.4 1803.3 978.6 C1807.1 983.7 1811.2 988.8 1815.7 993.4 C1820.2 998.1 1825.3 1002.1 1830.3 1006.3 C1835.3 1010.4 1840.6 1014.1 1845.6 1018.2 C1850.6 1022.4 1855.4 1026.9 1860.2 1031.4 C1865.1 1035.8 1872.2 1042.7 1874.6 1044.9" stroke-width="2.0" stroke-opacity="0.76"/><path d="M773.4 656.9 C775.8 654.8 783.2 648.7 788.1 644.5 C792.9 640.3 797.7 636.0 802.5 631.9 C807.4 627.7 812.2 623.5 817.2 619.6 C822.2 615.6 827.3 611.7 832.5 608.0 C837.7 604.3 843.0 600.8 848.3 597.3 C853.6 593.8 859.0 590.4 864.4 587.0 C869.7 583.6 875.0 580.1 880.5 576.8 C885.9 573.5 891.4 570.4 896.9 567.3 C902.5 564.3 911.0 560.1 913.9 558.6" stroke-width="2.5" stroke-opacity="0.76"/><path d="M1737.1 798.9 C1738.4 801.7 1742.5 809.8 1744.8 815.4 C1747.0 821.0 1748.8 826.8 1750.7 832.5 C1752.6 838.3 1754.5 844.1 1756.3 849.9 C1758.2 855.7 1760.9 864.5 1761.8 867.4" stroke-width="2.0" stroke-opacity="0.68"/><path d="M1202.8 505.7 C1205.9 506.3 1215.2 507.9 1221.5 508.9 C1227.7 509.9 1234.0 510.6 1240.2 511.9 C1246.4 513.2 1252.5 514.7 1258.5 516.6 C1264.5 518.6 1270.3 521.1 1276.0 523.7 C1281.7 526.3 1287.3 529.2 1292.8 532.0 C1298.4 534.9 1303.9 537.9 1309.5 540.8 C1315.0 543.7 1320.5 546.7 1326.1 549.5 C1331.7 552.3 1337.3 555.2 1343.1 557.6 C1348.8 560.1 1354.7 562.3 1360.7 564.2 C1366.7 566.0 1372.9 567.2 1379.0 568.6 C1385.1 570.1 1394.3 572.1 1397.3 572.8" stroke-width="2.5" stroke-opacity="0.69"/><path d="M1785.2 950.6 C1786.6 953.4 1790.7 962.0 1793.9 967.4 C1797.1 972.9 1800.6 978.3 1804.5 983.3 C1808.4 988.4 1812.6 993.3 1817.2 997.8 C1821.8 1002.2 1829.7 1007.9 1832.2 1010.0" stroke-width="1.5" stroke-opacity="0.75"/><path d="M1568.8 614.6 C1571.8 615.7 1580.9 618.8 1586.9 620.9 C1593.0 623.0 1599.2 624.8 1605.1 627.3 C1611.1 629.7 1619.6 634.2 1622.5 635.5" stroke-width="2.0" stroke-opacity="0.88"/><path d="M584.2 916.1 C585.1 913.0 587.5 903.6 589.2 897.4 C591.0 891.2 592.7 885.0 594.6 878.8 C596.5 872.6 598.4 866.4 600.4 860.3 C602.4 854.1 604.5 848.0 606.7 841.9 C608.8 835.8 611.0 829.7 613.4 823.7 C615.8 817.6 618.1 811.5 620.9 805.7 C623.6 799.8 626.5 794.0 629.8 788.6 C633.1 783.1 636.9 778.0 640.6 772.7 C644.2 767.4 647.9 762.2 651.7 757.0 C655.5 751.8 659.4 746.6 663.4 741.6 C667.5 736.6 674.1 729.4 676.3 727.0" stroke-width="2.5" stroke-opacity="0.84"/><path d="M667.3 748.2 C669.4 745.8 675.7 738.3 680.3 733.7 C684.9 729.1 689.9 724.9 694.9 720.6 C699.8 716.4 704.9 712.3 710.0 708.3 C715.0 704.2 720.2 700.3 725.4 696.4 C730.5 692.5 735.8 688.7 741.0 684.9 C746.2 681.1 751.4 677.4 756.6 673.6 C761.8 669.8 767.0 666.1 772.1 662.2 C777.1 658.3 782.1 654.3 787.0 650.2 C791.9 646.1 796.6 641.8 801.4 637.7 C806.3 633.5 811.0 629.3 815.9 625.2 C820.8 621.2 828.4 615.4 830.9 613.5" stroke-width="3.0" stroke-opacity="0.93"/><path d="M1447.3 554.7 C1450.2 556.0 1459.3 559.4 1465.0 562.2 C1470.7 565.0 1476.1 568.3 1481.5 571.4 C1486.9 574.6 1492.0 577.9 1497.3 581.2 C1502.5 584.6 1507.7 588.0 1513.0 591.4 C1518.3 594.8 1523.7 598.2 1529.2 601.5 C1534.6 604.9 1542.9 609.8 1545.7 611.4" stroke-width="3.0" stroke-opacity="0.78"/><path d="M963.9 532.6 C967.0 531.7 976.2 529.2 982.3 527.6 C988.5 526.0 994.7 524.5 1000.9 523.0 C1007.1 521.6 1013.3 520.2 1019.5 518.7 C1025.6 517.2 1031.8 515.7 1037.9 514.2 C1044.1 512.7 1053.3 510.5 1056.4 509.8" stroke-width="2.5" stroke-opacity="0.71"/><path d="M1183.9 503.0 C1187.0 503.4 1196.5 504.6 1202.7 505.6 C1209.0 506.6 1215.2 507.9 1221.5 509.0 C1227.7 510.1 1234.0 510.8 1240.2 512.2 C1246.4 513.5 1252.6 515.1 1258.5 517.1 C1264.5 519.2 1270.2 521.9 1275.9 524.6 C1281.6 527.3 1289.9 531.9 1292.6 533.4" stroke-width="2.5" stroke-opacity="0.90"/><path d="M1555.3 610.7 C1558.1 612.1 1566.7 616.7 1572.5 619.5 C1578.3 622.3 1584.2 624.8 1590.0 627.6 C1595.8 630.3 1601.8 633.0 1607.3 636.2 C1612.9 639.4 1618.4 642.9 1623.4 646.9 C1628.4 651.0 1632.9 655.6 1637.3 660.4 C1641.7 665.1 1647.6 672.8 1649.7 675.3" stroke-width="3.0" stroke-opacity="0.79"/><path d="M1479.6 532.6 C1482.1 534.6 1489.9 540.3 1494.7 544.5 C1499.5 548.7 1503.9 553.3 1508.5 557.8 C1513.0 562.3 1517.4 567.1 1522.2 571.3 C1527.0 575.6 1532.3 579.6 1537.6 583.4 C1542.9 587.2 1548.3 590.8 1554.0 594.1 C1559.6 597.4 1565.5 600.4 1571.5 603.2 C1577.4 605.9 1583.7 608.0 1589.8 610.5 C1595.9 613.0 1602.2 615.1 1608.1 617.9 C1614.0 620.8 1619.9 623.9 1625.2 627.6 C1630.5 631.4 1635.5 635.8 1640.1 640.5 C1644.7 645.1 1650.7 653.0 1652.8 655.5" stroke-width="1.5" stroke-opacity="0.78"/><path d="M1230.1 501.9 C1233.3 502.7 1242.9 504.7 1249.2 506.7 C1255.4 508.6 1261.6 510.9 1267.6 513.4 C1273.6 516.0 1279.4 519.1 1285.1 522.2 C1290.8 525.4 1299.0 530.7 1301.8 532.3" stroke-width="3.0" stroke-opacity="0.63"/><path d="M708.7 696.7 C711.1 694.5 718.5 688.0 723.4 683.6 C728.2 679.2 733.1 674.9 737.9 670.4 C742.7 666.0 747.4 661.4 752.0 656.8 C756.6 652.2 761.0 647.4 765.5 642.7 C770.1 638.0 774.6 633.2 779.2 628.5 C783.8 623.9 788.5 619.3 793.3 614.8 C798.0 610.3 802.8 605.8 807.8 601.6 C812.8 597.4 818.0 593.3 823.3 589.6 C828.7 585.9 837.3 581.0 840.0 579.3" stroke-width="3.0" stroke-opacity="0.69"/><path d="M1401.3 542.0 C1404.5 542.3 1414.2 543.1 1420.6 543.8 C1427.0 544.5 1433.5 545.1 1439.8 546.2 C1446.2 547.4 1452.7 548.6 1458.7 550.5 C1464.8 552.4 1470.7 555.0 1476.3 557.7 C1481.9 560.4 1487.1 563.6 1492.4 566.8 C1497.6 570.0 1502.5 573.5 1507.6 577.0 C1512.7 580.4 1517.7 584.1 1523.0 587.5 C1528.3 590.9 1533.7 594.3 1539.2 597.5 C1544.7 600.8 1550.4 603.9 1556.1 606.9 C1561.8 609.8 1570.6 613.8 1573.6 615.2" stroke-width="2.5" stroke-opacity="0.64"/><path d="M1272.2 512.6 C1275.1 513.9 1284.0 517.8 1289.8 520.7 C1295.6 523.6 1301.3 526.7 1306.9 529.9 C1312.5 533.1 1318.1 536.4 1323.6 539.8 C1329.2 543.1 1334.6 546.7 1340.2 550.0 C1345.8 553.3 1354.3 558.0 1357.1 559.6" stroke-width="1.5" stroke-opacity="0.61"/><path d="M689.7 718.0 C692.1 715.9 699.5 709.3 704.4 705.0 C709.4 700.8 714.4 696.6 719.4 692.4 C724.4 688.2 729.5 684.1 734.5 680.0 C739.5 675.8 744.5 671.6 749.3 667.4 C754.2 663.1 759.1 658.8 763.8 654.5 C768.6 650.1 773.2 645.6 777.9 641.2 C782.6 636.7 787.3 632.2 792.1 627.9 C796.9 623.5 804.1 617.0 806.5 614.8" stroke-width="2.5" stroke-opacity="0.69"/><path d="M1469.4 533.1 C1472.0 535.1 1480.1 541.1 1485.1 545.4 C1490.1 549.8 1494.6 554.6 1499.2 559.2 C1503.9 563.9 1508.3 568.7 1513.0 573.2 C1517.8 577.7 1525.4 584.0 1527.9 586.2" stroke-width="2.5" stroke-opacity="0.85"/><path d="M1781.3 909.2 C1782.5 912.1 1786.3 920.8 1788.7 926.7 C1791.1 932.5 1793.3 938.6 1795.8 944.5 C1798.3 950.4 1800.9 956.3 1803.8 962.0 C1806.7 967.7 1809.8 973.4 1813.4 978.8 C1816.9 984.1 1820.8 989.3 1825.0 994.1 C1829.2 998.9 1834.0 1003.2 1838.6 1007.6 C1843.1 1012.0 1848.0 1016.2 1852.5 1020.6 C1857.1 1025.1 1861.6 1029.8 1866.1 1034.4 C1870.6 1039.0 1877.4 1046.0 1879.6 1048.3" stroke-width="3.0" stroke-opacity="0.89"/><path d="M1691.3 716.0 C1693.6 718.2 1700.5 725.0 1705.0 729.6 C1709.6 734.2 1714.3 738.6 1718.6 743.5 C1722.8 748.3 1726.7 753.6 1730.5 758.8 C1734.3 764.1 1737.9 769.5 1741.1 775.1 C1744.3 780.7 1747.3 786.5 1749.8 792.5 C1752.2 798.5 1753.8 804.8 1755.7 811.0 C1757.7 817.2 1759.6 823.4 1761.6 829.6 C1763.5 835.8 1765.2 842.1 1767.4 848.2 C1769.6 854.3 1772.0 860.4 1774.9 866.2 C1777.8 871.9 1781.4 877.4 1784.9 882.9 C1788.4 888.4 1794.1 896.4 1795.9 899.1" stroke-width="2.0" stroke-opacity="0.79"/><path d="M1550.5 610.7 C1553.3 612.3 1561.7 617.4 1567.4 620.6 C1573.0 623.8 1578.8 626.7 1584.5 629.8 C1590.2 632.9 1595.9 635.8 1601.4 639.2 C1606.9 642.6 1612.3 646.2 1617.4 650.3 C1622.4 654.4 1627.0 659.0 1631.4 663.8 C1635.8 668.6 1641.7 676.5 1643.8 679.1" stroke-width="2.5" stroke-opacity="0.92"/><path d="M1021.0 510.9 C1024.2 510.5 1033.8 509.0 1040.3 508.1 C1046.7 507.1 1053.1 506.2 1059.5 505.3 C1065.9 504.4 1072.3 503.6 1078.7 502.8 C1085.1 502.0 1091.5 501.0 1097.9 500.4 C1104.3 499.8 1110.7 499.2 1117.2 499.0 C1123.6 498.9 1133.3 499.4 1136.5 499.5" stroke-width="2.0" stroke-opacity="0.87"/><path d="M775.1 665.0 C777.3 662.8 784.0 656.2 788.4 651.6 C792.7 646.9 796.8 642.0 801.0 637.3 C805.3 632.5 809.4 627.6 813.8 622.9 C818.2 618.2 822.6 613.6 827.2 609.2 C831.9 604.8 836.7 600.7 841.6 596.5 C846.4 592.4 854.0 586.6 856.5 584.6" stroke-width="2.0" stroke-opacity="0.85"/><path d="M887.8 553.9 C890.5 552.1 898.4 546.5 903.9 543.0 C909.4 539.6 915.0 536.3 920.7 533.4 C926.4 530.4 932.3 527.7 938.3 525.3 C944.3 522.9 950.5 520.9 956.6 518.9 C962.8 517.0 969.1 515.4 975.3 513.8 C981.6 512.2 987.9 510.8 994.2 509.4 C1000.5 508.0 1006.8 506.6 1013.1 505.3 C1019.4 504.0 1025.7 502.7 1032.1 501.5 C1038.4 500.3 1047.9 498.7 1051.1 498.1" stroke-width="2.0" stroke-opacity="0.67"/><path d="M1707.6 746.5 C1709.7 748.9 1715.8 755.8 1719.8 760.6 C1723.7 765.3 1727.9 770.0 1731.5 775.0 C1735.2 780.0 1738.9 785.1 1741.9 790.5 C1744.9 795.9 1747.3 801.7 1749.5 807.4 C1751.8 813.2 1753.5 819.1 1755.5 825.0 C1757.5 830.9 1760.6 839.8 1761.6 842.7" stroke-width="2.5" stroke-opacity="0.92"/><path d="M1126.8 484.2 C1130.1 484.3 1139.9 484.3 1146.5 484.7 C1153.0 485.0 1159.5 485.6 1166.0 486.3 C1172.5 486.9 1179.0 487.6 1185.5 488.4 C1192.1 489.1 1198.6 489.8 1205.0 490.6 C1211.5 491.4 1218.0 492.3 1224.5 493.2 C1231.0 494.0 1237.5 494.8 1244.0 495.8 C1250.4 496.8 1256.9 497.9 1263.3 499.0 C1269.7 500.2 1279.2 502.2 1282.3 502.8" stroke-width="2.0" stroke-opacity="0.88"/><path d="M1426.6 523.4 C1429.9 523.6 1439.8 524.1 1446.3 525.1 C1452.8 526.1 1459.4 527.3 1465.5 529.5 C1471.5 531.7 1477.3 534.9 1482.6 538.3 C1488.0 541.7 1492.8 545.8 1497.6 549.9 C1502.4 554.0 1506.7 558.5 1511.4 562.7 C1516.1 567.0 1520.7 571.5 1525.7 575.5 C1530.7 579.5 1536.0 583.3 1541.4 586.9 C1546.8 590.5 1552.4 593.9 1558.2 596.9 C1564.0 600.0 1569.9 602.7 1576.0 605.3 C1582.0 607.8 1588.3 609.8 1594.4 612.2 C1600.5 614.7 1609.6 618.5 1612.6 619.8" stroke-width="3.0" stroke-opacity="0.65"/><path d="M742.2 667.7 C744.4 665.3 751.2 658.3 755.5 653.4 C759.8 648.5 763.9 643.4 768.2 638.4 C772.5 633.4 776.8 628.4 781.2 623.5 C785.6 618.6 790.0 613.8 794.6 609.0 C799.2 604.3 806.4 597.5 808.7 595.2" stroke-width="2.5" stroke-opacity="0.92"/><path d="M616.0 845.0 C617.1 842.0 620.4 833.0 622.7 827.0 C625.0 821.0 627.4 815.1 630.0 809.2 C632.6 803.4 635.3 797.6 638.3 792.0 C641.3 786.4 644.7 781.1 648.0 775.7 C651.2 770.3 654.5 764.8 658.0 759.5 C661.5 754.2 665.0 748.9 668.9 743.8 C672.8 738.8 677.0 733.9 681.4 729.2 C685.7 724.5 690.4 720.1 695.0 715.7 C699.6 711.2 704.3 706.8 709.0 702.4 C713.7 698.0 720.8 691.5 723.2 689.3" stroke-width="1.5" stroke-opacity="0.87"/><path d="M1046.9 500.1 C1050.1 499.6 1059.6 498.0 1065.9 496.9 C1072.3 495.9 1078.6 494.8 1085.0 493.8 C1091.4 492.7 1097.7 491.5 1104.2 490.7 C1110.6 489.9 1117.0 489.2 1123.5 488.9 C1129.9 488.6 1136.4 488.7 1142.8 488.9 C1149.3 489.1 1155.7 489.6 1162.2 490.1 C1168.6 490.5 1175.1 491.2 1181.5 491.8 C1188.0 492.5 1197.6 493.6 1200.8 493.9" stroke-width="3.0" stroke-opacity="0.67"/><path d="M1160.7 483.9 C1164.0 484.3 1173.8 485.6 1180.4 486.4 C1186.9 487.3 1193.5 488.2 1200.0 489.2 C1206.6 490.2 1213.1 491.2 1219.6 492.2 C1226.1 493.2 1232.6 494.2 1239.1 495.3 C1245.6 496.4 1252.1 497.6 1258.5 498.9 C1264.8 500.3 1274.3 502.7 1277.5 503.4" stroke-width="2.0" stroke-opacity="0.74"/><path d="M1130.6 495.8 C1133.7 495.9 1143.3 495.8 1149.6 496.1 C1156.0 496.3 1162.3 496.8 1168.6 497.3 C1175.0 497.7 1181.3 498.2 1187.7 498.9 C1194.0 499.5 1200.3 500.2 1206.6 501.0 C1212.9 501.8 1219.2 502.8 1225.5 503.7 C1231.9 504.5 1241.3 505.8 1244.5 506.2" stroke-width="2.0" stroke-opacity="0.63"/><path d="M550.4 1032.9 C551.0 1029.7 552.7 1020.2 553.9 1013.9 C555.1 1007.6 556.4 1001.2 557.6 994.9 C558.8 988.5 560.0 982.2 561.1 975.8 C562.2 969.4 563.1 963.0 564.1 956.5 C565.1 950.1 566.1 943.6 567.3 937.2 C568.5 930.8 569.8 924.4 571.3 918.0 C572.8 911.7 574.5 905.4 576.2 899.1 C577.9 892.8 579.7 886.5 581.6 880.2 C583.4 873.9 586.4 864.5 587.3 861.4" stroke-width="2.0" stroke-opacity="0.78"/><path d="M1083.7 502.6 C1086.8 501.9 1095.9 499.6 1102.1 498.5 C1108.3 497.3 1114.6 496.3 1120.9 495.7 C1127.1 495.1 1133.5 494.8 1139.8 494.7 C1146.1 494.6 1155.6 494.9 1158.7 494.9" stroke-width="2.0" stroke-opacity="0.89"/><path d="M1239.1 495.4 C1242.3 495.8 1252.0 497.2 1258.5 498.2 C1264.9 499.2 1271.2 500.4 1277.6 501.5 C1284.0 502.7 1290.3 503.8 1296.7 504.9 C1303.0 506.1 1309.4 507.2 1315.8 508.2 C1322.1 509.3 1328.5 510.3 1334.9 511.3 C1341.3 512.2 1347.8 513.2 1354.2 514.0 C1360.7 514.9 1367.2 515.8 1373.8 516.3 C1380.3 516.9 1386.9 517.1 1393.5 517.4 C1400.1 517.6 1406.7 517.5 1413.3 517.7 C1419.9 517.8 1426.5 517.9 1433.1 518.3 C1439.7 518.8 1449.5 520.2 1452.8 520.5" stroke-width="2.5" stroke-opacity="0.87"/><path d="M740.2 678.4 C742.8 676.4 750.6 670.5 755.7 666.5 C760.8 662.5 765.8 658.6 770.8 654.5 C775.8 650.4 780.7 646.2 785.6 642.0 C790.5 637.9 797.9 631.6 800.3 629.5" stroke-width="2.5" stroke-opacity="0.71"/><path d="M603.6 825.3 C604.9 822.3 608.6 813.2 611.4 807.3 C614.3 801.4 617.3 795.5 620.8 790.1 C624.3 784.6 630.4 777.0 632.4 774.4" stroke-width="2.0" stroke-opacity="0.70"/><path d="M1755.9 824.4 C1756.9 827.4 1759.7 836.6 1761.6 842.7 C1763.5 848.8 1765.2 855.0 1767.5 861.0 C1769.8 866.9 1772.5 872.7 1775.4 878.4 C1778.3 884.1 1781.8 889.5 1785.0 895.0 C1788.2 900.5 1791.6 905.9 1794.8 911.5 C1797.9 917.1 1800.9 922.9 1803.9 928.7 C1806.8 934.4 1809.5 940.4 1812.4 946.2 C1815.4 952.0 1818.2 957.9 1821.5 963.6 C1824.8 969.2 1830.5 977.3 1832.2 980.1" stroke-width="2.0" stroke-opacity="0.79"/><path d="M1201.4 497.3 C1204.6 497.7 1214.1 499.1 1220.5 500.0 C1226.8 500.9 1233.3 501.6 1239.6 502.7 C1245.9 503.7 1252.3 504.9 1258.5 506.4 C1264.7 507.9 1270.8 509.7 1276.9 511.5 C1283.0 513.3 1288.9 515.3 1294.9 517.2 C1300.9 519.1 1309.9 522.1 1312.9 523.0" stroke-width="1.5" stroke-opacity="0.87"/><path d="M1628.4 632.6 C1630.8 635.0 1638.1 641.7 1642.4 646.7 C1646.8 651.6 1650.8 657.0 1654.6 662.4 C1658.5 667.7 1661.9 673.4 1665.6 678.9 C1669.2 684.4 1672.7 690.0 1676.5 695.3 C1680.3 700.7 1684.1 706.2 1688.3 711.2 C1692.5 716.3 1699.5 723.3 1701.7 725.7" stroke-width="2.5" stroke-opacity="0.76"/><path d="M1482.8 537.7 C1485.3 539.7 1492.9 545.4 1497.7 549.5 C1502.5 553.6 1506.8 558.2 1511.5 562.5 C1516.2 566.8 1520.7 571.3 1525.7 575.3 C1530.7 579.4 1536.0 583.2 1541.4 586.8 C1546.8 590.4 1552.4 593.8 1558.2 596.9 C1564.0 599.9 1569.9 602.7 1576.0 605.2 C1582.0 607.8 1588.3 609.8 1594.4 612.3 C1600.5 614.7 1606.8 616.8 1612.6 619.8 C1618.4 622.8 1626.5 628.4 1629.3 630.1" stroke-width="1.5" stroke-opacity="0.63"/><path d="M870.5 563.0 C873.1 560.9 880.6 554.7 885.7 550.8 C890.9 546.9 896.3 543.2 901.7 539.6 C907.2 536.1 912.7 532.7 918.4 529.6 C924.2 526.6 930.0 523.7 936.0 521.2 C942.0 518.7 948.2 516.6 954.3 514.6 C960.5 512.7 966.8 511.0 973.1 509.4 C979.4 507.8 985.7 506.4 992.0 505.0 C998.4 503.6 1004.7 502.2 1011.1 501.0 C1017.4 499.7 1023.8 498.5 1030.2 497.4 C1036.6 496.3 1043.0 495.2 1049.4 494.3 C1055.8 493.3 1065.4 492.0 1068.7 491.5" stroke-width="3.0" stroke-opacity="0.94"/><path d="M1604.8 643.9 C1607.5 645.5 1616.0 649.8 1621.1 653.4 C1626.2 657.0 1630.9 661.2 1635.4 665.5 C1639.9 669.8 1644.0 674.5 1648.2 679.0 C1652.5 683.6 1656.6 688.3 1660.7 692.9 C1664.9 697.5 1669.1 702.0 1673.3 706.6 C1677.6 711.2 1681.8 715.8 1686.0 720.4 C1690.3 725.0 1694.7 729.6 1699.0 734.2 C1703.2 738.8 1707.5 743.4 1711.5 748.2 C1715.6 753.0 1719.5 758.0 1723.4 763.0 C1727.2 768.0 1732.7 775.7 1734.6 778.3" stroke-width="1.5" stroke-opacity="0.79"/><path d="M1752.7 836.0 C1753.7 838.9 1756.4 847.6 1758.3 853.4 C1760.2 859.2 1761.9 865.2 1764.1 870.9 C1766.3 876.6 1768.9 882.2 1771.7 887.7 C1774.4 893.2 1777.6 898.5 1780.7 903.9 C1783.8 909.3 1788.7 917.4 1790.3 920.1" stroke-width="3.0" stroke-opacity="0.77"/><path d="M725.5 701.9 C728.1 700.0 735.6 694.3 740.7 690.5 C745.8 686.6 750.8 682.8 755.8 679.0 C760.9 675.2 766.0 671.5 770.9 667.5 C775.9 663.6 780.7 659.6 785.5 655.4 C790.2 651.1 794.7 646.7 799.2 642.3 C803.8 637.9 808.2 633.3 812.9 629.0 C817.5 624.7 822.2 620.4 827.0 616.3 C831.8 612.2 836.7 608.2 841.7 604.3 C846.7 600.4 851.9 596.7 857.0 593.0 C862.1 589.3 867.3 585.6 872.5 582.0 C877.7 578.3 882.9 574.7 888.1 571.3 C893.4 567.8 901.5 562.8 904.2 561.1" stroke-width="1.5" stroke-opacity="0.75"/><path d="M1454.7 547.1 C1457.7 548.3 1466.8 551.7 1472.4 554.6 C1478.0 557.4 1483.3 560.8 1488.5 564.1 C1493.8 567.5 1498.7 571.1 1503.7 574.7 C1508.8 578.3 1513.7 582.1 1518.9 585.7 C1524.1 589.2 1529.5 592.7 1534.9 596.1 C1540.3 599.5 1545.9 602.9 1551.5 606.0 C1557.1 609.2 1562.9 612.1 1568.7 614.9 C1574.5 617.7 1580.5 620.1 1586.4 622.8 C1592.3 625.4 1598.3 627.8 1604.0 630.8 C1609.7 633.8 1615.5 637.0 1620.7 640.7 C1625.9 644.5 1630.7 648.8 1635.3 653.4 C1639.9 657.9 1645.9 665.6 1648.0 668.0" stroke-width="2.5" stroke-opacity="0.73"/><path d="M949.3 525.3 C952.3 524.3 961.3 521.0 967.4 519.0 C973.5 517.1 979.6 515.3 985.8 513.6 C991.9 511.9 998.1 510.4 1004.4 508.8 C1010.6 507.2 1016.8 505.7 1023.0 504.2 C1029.2 502.8 1035.5 501.3 1041.7 500.1 C1048.0 498.8 1054.3 497.6 1060.6 496.4 C1066.9 495.3 1076.4 493.7 1079.6 493.1" stroke-width="2.5" stroke-opacity="0.61"/><path d="M863.9 578.5 C866.5 576.6 874.3 570.9 879.5 567.3 C884.8 563.7 890.1 560.0 895.5 556.6 C900.9 553.2 906.4 550.0 912.1 546.9 C917.7 543.9 923.4 541.0 929.3 538.4 C935.2 535.9 941.2 533.6 947.3 531.6 C953.4 529.6 959.6 527.9 965.8 526.2 C972.0 524.5 978.2 523.0 984.5 521.5 C990.7 520.0 997.0 518.7 1003.3 517.3 C1009.5 515.9 1018.9 513.9 1022.1 513.3" stroke-width="3.0" stroke-opacity="0.62"/><path d="M1022.7 514.7 C1025.7 513.7 1034.7 510.8 1040.7 509.0 C1046.7 507.3 1052.8 505.5 1058.9 504.0 C1065.0 502.4 1071.2 501.1 1077.3 499.6 C1083.5 498.2 1089.7 496.7 1095.9 495.5 C1102.1 494.3 1108.4 493.0 1114.7 492.2 C1121.0 491.4 1127.4 490.9 1133.7 490.6 C1140.1 490.3 1146.5 490.4 1152.8 490.5 C1159.2 490.6 1168.8 491.1 1171.9 491.3" stroke-width="1.5" stroke-opacity="0.88"/><path d="M818.2 606.1 C820.8 604.2 828.3 598.1 833.5 594.3 C838.7 590.5 844.3 587.2 849.5 583.5 C854.8 579.8 860.0 576.0 865.2 572.1 C870.3 568.2 875.3 564.1 880.5 560.3 C885.7 556.5 890.9 552.6 896.2 549.0 C901.6 545.5 910.0 540.6 912.8 539.0" stroke-width="1.5" stroke-opacity="0.78"/><path d="M1789.1 964.6 C1790.9 967.3 1795.8 975.4 1799.7 980.5 C1803.6 985.5 1807.8 990.5 1812.4 995.0 C1817.0 999.5 1822.3 1003.4 1827.4 1007.4 C1832.6 1011.4 1838.1 1014.8 1843.2 1018.9 C1848.3 1023.0 1853.2 1027.4 1858.1 1031.8 C1863.0 1036.1 1870.2 1042.9 1872.7 1045.1" stroke-width="1.5" stroke-opacity="0.62"/><path d="M1267.8 507.5 C1270.9 508.1 1280.1 509.9 1286.3 510.9 C1292.5 512.0 1298.7 513.1 1305.0 514.0 C1311.2 514.9 1320.8 515.9 1323.9 516.3" stroke-width="2.5" stroke-opacity="0.78"/><path d="M642.9 778.7 C644.6 776.0 649.7 768.0 653.3 762.7 C656.8 757.4 660.3 752.0 664.2 746.9 C668.0 741.8 672.1 736.8 676.4 732.0 C680.7 727.2 685.2 722.7 689.8 718.1 C694.3 713.5 699.0 709.1 703.6 704.6 C708.3 700.1 713.0 695.7 717.7 691.3 C722.4 686.8 727.2 682.5 731.8 677.9 C736.5 673.4 741.1 668.9 745.6 664.1 C750.0 659.4 756.5 652.1 758.7 649.6" stroke-width="3.0" stroke-opacity="0.81"/><path d="M1725.7 767.7 C1727.5 770.4 1733.2 778.1 1736.4 783.7 C1739.6 789.2 1742.5 794.9 1744.9 800.9 C1747.3 806.8 1748.9 813.0 1750.8 819.1 C1752.6 825.2 1754.3 831.4 1756.1 837.6 C1757.8 843.7 1759.3 850.0 1761.0 856.1 C1762.8 862.2 1764.5 868.4 1766.6 874.4 C1768.7 880.3 1771.2 886.1 1773.7 891.9 C1776.1 897.7 1778.7 903.4 1781.2 909.2 C1783.7 915.0 1786.2 920.8 1788.6 926.7 C1791.0 932.6 1793.2 938.6 1795.7 944.5 C1798.3 950.4 1802.4 959.1 1803.7 962.1" stroke-width="2.0" stroke-opacity="0.93"/><path d="M1825.0 972.8 C1826.8 975.5 1832.0 983.8 1835.9 989.0 C1839.9 994.2 1844.2 999.0 1848.4 1003.9 C1852.7 1008.8 1857.1 1013.6 1861.4 1018.4 C1865.8 1023.3 1870.1 1028.2 1874.4 1033.1 C1878.8 1038.0 1883.2 1042.8 1887.6 1047.7 C1891.9 1052.5 1898.5 1059.9 1900.7 1062.3" stroke-width="2.5" stroke-opacity="0.87"/><path d="M1700.6 742.0 C1702.5 744.5 1708.3 751.8 1712.1 756.8 C1716.0 761.8 1719.8 766.9 1723.4 772.0 C1727.1 777.1 1731.0 782.1 1734.3 787.5 C1737.5 792.9 1740.4 798.5 1742.9 804.3 C1745.3 810.1 1747.0 816.2 1748.8 822.2 C1750.7 828.3 1752.4 834.3 1754.1 840.4 C1755.8 846.5 1757.3 852.6 1758.9 858.7 C1760.6 864.8 1762.1 870.9 1764.0 876.9 C1766.0 882.8 1768.3 888.6 1770.5 894.4 C1772.7 900.3 1775.1 906.0 1777.5 911.8 C1779.8 917.6 1782.1 923.4 1784.4 929.3 C1786.8 935.1 1790.4 944.0 1791.6 946.9" stroke-width="2.0" stroke-opacity="0.82"/><path d="M1852.0 1012.0 C1853.8 1014.5 1859.1 1022.0 1862.7 1026.8 C1866.3 1031.7 1869.9 1036.5 1873.6 1041.2 C1877.3 1046.0 1882.8 1053.0 1884.7 1055.3" stroke-width="2.0" stroke-opacity="0.91"/><path d="M575.1 973.0 C575.6 969.9 577.2 960.5 578.2 954.2 C579.2 947.9 580.2 941.5 581.3 935.2 C582.4 928.9 583.6 922.5 584.9 916.2 C586.2 909.9 587.6 903.6 589.0 897.3 C590.5 891.1 592.0 884.8 593.6 878.5 C595.2 872.2 596.8 866.0 598.6 859.7 C600.3 853.5 603.1 844.1 604.0 841.0" stroke-width="3.0" stroke-opacity="0.61"/></g><g fill="none" stroke="#fff" stroke-linecap="round"><path d="M1802.2 989.7 C1806.9 993.9 1820.8 1006.5 1830.3 1014.8 C1839.8 1023.0 1849.9 1030.7 1859.3 1039.2 C1868.6 1047.8 1881.9 1061.5 1886.4 1066.0" stroke-width="1.8" stroke-opacity="0.85"/><path d="M1758.9 852.6 C1760.6 858.8 1765.5 877.5 1769.2 889.8 C1772.9 902.0 1777.0 913.8 1781.0 925.9 C1785.0 938.1 1791.1 956.3 1793.1 962.4" stroke-width="1.0" stroke-opacity="0.60"/><path d="M1755.1 874.8 C1756.3 880.9 1759.9 899.4 1762.5 911.6 C1765.2 923.8 1767.1 936.3 1771.0 948.1 C1775.0 959.9 1779.5 971.9 1786.3 982.2 C1793.0 992.5 1807.3 1005.1 1811.5 1009.6" stroke-width="2.2" stroke-opacity="0.77"/><path d="M1872.4 1015.7 C1875.9 1020.9 1890.1 1041.9 1893.6 1047.2" stroke-width="1.2" stroke-opacity="0.49"/><path d="M1749.9 806.8 C1751.6 813.1 1756.7 831.9 1760.5 844.3 C1764.3 856.6 1767.9 869.0 1772.6 880.9 C1777.4 892.7 1783.6 903.7 1788.8 915.4 C1793.9 927.1 1798.0 939.6 1803.5 951.2 C1809.1 962.8 1814.7 974.7 1822.1 985.1 C1829.4 995.5 1843.5 1008.6 1847.8 1013.3" stroke-width="1.5" stroke-opacity="0.54"/><path d="M1279.8 530.7 C1285.2 533.7 1301.5 542.7 1312.5 548.3 C1323.6 553.8 1334.5 560.0 1346.2 564.1 C1357.9 568.1 1370.5 569.9 1382.8 572.4 C1395.1 574.9 1407.6 576.7 1420.0 579.0 C1432.3 581.4 1444.9 583.6 1457.0 586.5 C1469.2 589.4 1481.2 592.4 1492.9 596.3 C1504.6 600.2 1516.0 605.0 1527.4 609.9 C1538.8 614.9 1555.7 623.4 1561.3 626.1" stroke-width="1.8" stroke-opacity="0.60"/><path d="M1488.4 535.2 C1493.0 539.8 1506.1 554.1 1515.7 562.9 C1525.2 571.7 1535.0 580.7 1545.8 588.0 C1556.6 595.2 1568.9 600.6 1580.8 606.2 C1592.6 611.9 1606.0 615.0 1617.0 621.9 C1628.0 628.8 1641.7 643.4 1646.7 647.7" stroke-width="1.5" stroke-opacity="0.43"/><path d="M1791.3 936.1 C1793.6 942.1 1799.5 960.9 1805.5 972.0 C1811.6 983.1 1819.3 993.4 1827.4 1002.8 C1835.6 1012.2 1850.0 1024.2 1854.5 1028.5" stroke-width="1.8" stroke-opacity="0.88"/><path d="M1240.5 516.0 C1246.3 517.8 1264.3 522.3 1275.8 526.6 C1287.3 530.8 1298.0 536.8 1309.3 541.4 C1320.7 546.0 1338.2 552.0 1344.0 554.1" stroke-width="1.0" stroke-opacity="0.52"/><path d="M1748.0 802.9 C1749.8 809.1 1755.1 827.9 1758.7 840.2 C1762.4 852.6 1765.5 865.2 1770.0 877.1 C1774.5 889.1 1780.6 900.2 1785.6 911.9 C1790.6 923.7 1794.7 935.9 1800.0 947.6 C1805.4 959.3 1810.6 971.4 1817.7 981.9 C1824.9 992.4 1834.3 1001.2 1843.0 1010.5 C1851.7 1019.8 1861.0 1028.5 1869.8 1037.8 C1878.7 1047.0 1891.7 1061.3 1896.1 1066.0" stroke-width="2.2" stroke-opacity="0.45"/><path d="M608.6 872.8 C610.9 866.9 617.7 848.9 622.7 837.2 C627.7 825.5 632.9 813.7 638.7 802.4 C644.6 791.1 650.9 780.2 657.6 769.5 C664.4 758.8 671.1 747.8 679.3 738.2 C687.6 728.6 702.5 716.3 707.2 711.9" stroke-width="1.0" stroke-opacity="0.85"/><path d="M547.0 978.8 C549.2 972.4 555.0 953.2 559.9 940.8 C564.9 928.3 570.7 916.2 576.7 904.2 C582.6 892.3 592.5 874.9 595.6 869.0" stroke-width="1.5" stroke-opacity="0.66"/><path d="M996.7 535.5 C1002.6 533.6 1020.4 527.8 1032.2 523.9 C1044.0 520.1 1055.8 515.8 1067.8 512.4 C1079.8 509.1 1092.0 505.8 1104.3 503.9 C1116.6 501.9 1129.2 501.2 1141.6 501.0 C1154.1 500.8 1166.7 501.7 1179.2 502.6 C1191.7 503.5 1204.2 505.0 1216.6 506.6 C1229.1 508.2 1241.8 509.3 1253.9 512.2 C1266.1 515.1 1277.7 519.9 1289.4 523.9 C1301.1 528.0 1312.5 532.9 1324.3 536.6 C1336.2 540.4 1348.2 544.3 1360.6 546.5 C1373.0 548.8 1386.1 549.1 1398.9 550.3 C1411.7 551.5 1431.1 553.3 1437.5 553.9" stroke-width="2.6" stroke-opacity="0.59"/><path d="M578.0 939.4 C580.2 933.3 586.4 914.9 591.0 902.8 C595.5 890.7 600.4 878.7 605.5 866.9 C610.6 855.1 615.9 843.3 621.6 831.7 C627.4 820.2 633.3 808.7 639.7 797.7 C646.2 786.7 653.0 776.0 660.3 765.5 C667.6 755.1 674.8 744.4 683.6 735.1 C692.3 725.8 702.7 717.9 712.7 709.8 C722.6 701.8 733.1 694.3 743.3 686.7 C753.5 679.1 768.9 667.8 774.0 664.0" stroke-width="2.2" stroke-opacity="0.86"/><path d="M1240.5 516.1 C1246.3 518.1 1264.3 523.3 1275.6 528.4 C1287.0 533.4 1297.4 540.5 1308.4 546.4 C1319.4 552.2 1330.0 559.0 1341.5 563.6 C1353.0 568.2 1365.3 571.0 1377.5 574.0 C1389.6 577.1 1402.0 579.2 1414.2 581.8 C1426.5 584.5 1438.8 587.2 1451.0 590.1 C1463.1 593.0 1475.3 595.7 1487.2 599.4 C1499.1 603.0 1510.8 607.0 1522.3 611.8 C1533.8 616.5 1545.0 622.3 1556.3 627.7 C1567.6 633.1 1579.2 638.0 1590.2 644.0 C1601.2 650.0 1612.5 655.8 1622.2 663.6 C1631.9 671.3 1644.0 686.1 1648.3 690.6" stroke-width="2.6" stroke-opacity="0.82"/><path d="M1563.1 618.2 C1569.0 620.5 1587.2 626.8 1598.5 632.4 C1609.9 638.1 1621.5 643.9 1631.2 651.8 C1640.9 659.6 1648.6 670.0 1656.9 679.5 C1665.2 688.9 1672.5 699.1 1680.9 708.5 C1689.3 718.0 1702.9 731.5 1707.3 736.1" stroke-width="2.6" stroke-opacity="0.38"/><path d="M555.0 1056.7 C557.1 1050.5 563.0 1031.9 567.4 1019.6 C571.8 1007.4 576.5 995.4 581.3 983.4 C586.2 971.5 591.3 959.7 596.4 948.0 C601.5 936.2 609.3 918.8 611.8 913.0" stroke-width="1.2" stroke-opacity="0.94"/><path d="M644.4 764.2 C648.6 759.2 660.8 743.7 669.7 734.2 C678.6 724.6 688.3 715.7 697.9 706.7 C707.5 697.8 717.6 689.4 727.2 680.5 C736.8 671.6 746.4 662.7 755.7 653.5 C765.0 644.3 773.6 634.5 783.0 625.4 C792.4 616.3 801.6 606.9 811.9 598.8 C822.1 590.8 833.9 584.7 844.5 577.1 C855.1 569.5 865.1 561.0 875.7 553.4 C886.3 545.8 896.8 537.8 908.1 531.4 C919.5 525.1 937.9 518.0 943.8 515.3" stroke-width="2.6" stroke-opacity="0.88"/><path d="M587.4 951.0 C589.6 945.0 595.8 926.9 600.2 915.0 C604.7 903.1 609.3 891.2 614.2 879.4 C619.1 867.7 624.3 856.1 629.7 844.6 C635.1 833.2 640.9 821.9 646.6 810.6 C652.4 799.4 661.2 782.8 664.1 777.2" stroke-width="2.6" stroke-opacity="0.89"/><path d="M1784.0 929.6 C1785.7 935.8 1789.6 955.5 1794.2 967.2 C1798.9 979.0 1804.6 990.7 1811.9 1000.2 C1819.3 1009.7 1834.0 1020.2 1838.4 1024.1" stroke-width="2.6" stroke-opacity="0.56"/><path d="M590.5 922.5 C593.0 916.5 600.5 898.7 605.8 886.9 C611.2 875.2 616.7 863.7 622.6 852.2 C628.4 840.8 634.6 829.6 640.8 818.5 C647.0 807.3 656.5 791.0 659.6 785.5" stroke-width="1.8" stroke-opacity="0.69"/><path d="M1788.4 981.1 C1792.5 985.8 1803.7 1000.8 1812.8 1009.1 C1821.9 1017.3 1833.3 1023.0 1842.9 1030.8 C1852.5 1038.6 1865.8 1051.7 1870.4 1055.9" stroke-width="1.0" stroke-opacity="0.69"/><path d="M640.5 798.0 C643.8 792.6 653.2 776.0 660.3 765.5 C667.4 755.0 674.6 744.3 683.1 734.9 C691.7 725.5 702.0 717.5 711.8 709.3 C721.6 701.1 731.9 693.5 742.0 685.7 C752.0 677.8 762.3 670.3 772.0 662.1 C781.6 653.8 790.7 644.8 800.1 636.2 C809.5 627.7 818.6 618.7 828.5 610.7 C838.4 602.7 848.9 595.5 859.3 588.2 C869.6 580.8 885.4 570.2 890.7 566.6" stroke-width="1.8" stroke-opacity="0.72"/><path d="M1859.2 1014.5 C1864.6 1019.3 1886.1 1038.5 1891.5 1043.3" stroke-width="2.6" stroke-opacity="0.64"/><path d="M1664.7 693.8 C1668.8 699.0 1681.1 714.5 1689.0 724.9 C1697.0 735.4 1705.0 745.6 1712.4 756.4 C1719.7 767.2 1727.5 777.9 1733.1 789.6 C1738.8 801.2 1742.8 813.8 1746.3 826.3 C1749.9 838.8 1752.9 858.2 1754.2 864.6" stroke-width="2.2" stroke-opacity="0.67"/><path d="M1636.1 675.5 C1640.4 680.1 1653.1 693.9 1661.7 703.0 C1670.3 712.1 1679.5 720.6 1687.7 730.0 C1695.9 739.5 1703.3 749.6 1710.8 759.7 C1718.3 769.8 1726.6 779.5 1732.7 790.4 C1738.7 801.3 1743.1 813.2 1747.1 825.1 C1751.1 836.9 1753.4 849.4 1756.6 861.6 C1759.9 873.7 1762.9 885.8 1766.4 897.7 C1769.9 909.7 1773.5 921.6 1777.8 933.3 C1782.1 945.1 1789.8 962.5 1792.2 968.3" stroke-width="2.2" stroke-opacity="0.65"/><path d="M1038.8 516.0 C1045.0 514.6 1063.4 510.1 1075.8 507.7 C1088.2 505.3 1100.7 502.6 1113.3 501.7 C1125.8 500.7 1144.9 501.9 1151.2 501.9" stroke-width="1.5" stroke-opacity="0.76"/><path d="M1610.0 657.6 C1614.7 661.7 1629.0 673.9 1638.0 682.5 C1646.9 691.2 1655.2 700.7 1663.9 709.7 C1672.6 718.7 1682.0 727.1 1690.0 736.7 C1697.9 746.3 1704.4 757.2 1711.5 767.4 C1718.7 777.7 1727.2 787.3 1732.9 798.3 C1738.7 809.3 1742.4 821.4 1746.0 833.4 C1749.6 845.3 1751.8 857.8 1754.4 870.0 C1757.1 882.2 1759.2 894.6 1761.8 906.8 C1764.4 919.0 1766.3 931.5 1770.0 943.4 C1773.7 955.3 1777.7 967.5 1784.0 978.1 C1790.3 988.7 1803.8 1002.1 1807.7 1006.8" stroke-width="2.6" stroke-opacity="0.65"/><path d="M1475.7 513.6 C1480.5 518.2 1495.5 531.4 1504.7 541.0 C1514.0 550.5 1521.3 562.2 1531.2 571.0 C1541.0 579.8 1552.2 587.5 1563.7 593.9 C1575.2 600.4 1588.5 603.6 1600.3 609.5 C1612.1 615.5 1624.6 621.2 1634.5 629.6 C1644.4 638.1 1652.0 649.6 1659.8 660.3 C1667.5 671.1 1672.8 683.6 1680.7 694.2 C1688.6 704.8 1698.3 714.0 1707.1 723.9 C1715.9 733.8 1728.9 748.7 1733.3 753.7" stroke-width="1.2" stroke-opacity="0.43"/><path d="M1816.4 944.0 C1819.3 949.9 1826.7 968.4 1833.4 979.5 C1840.1 990.6 1848.5 1000.5 1856.5 1010.6 C1864.5 1020.8 1877.3 1035.4 1881.5 1040.3" stroke-width="1.8" stroke-opacity="0.87"/><path d="M547.7 1047.1 C549.0 1040.8 552.7 1021.8 555.2 1009.2 C557.7 996.5 560.4 983.9 562.8 971.1 C565.2 958.4 567.0 945.5 569.8 932.7 C572.6 920.0 576.0 907.4 579.6 894.9 C583.2 882.3 587.2 869.9 591.4 857.5 C595.6 845.1 599.7 832.6 604.9 820.6 C610.1 808.6 615.5 796.5 622.5 785.6 C629.4 774.6 642.5 760.0 646.6 754.9" stroke-width="1.0" stroke-opacity="0.65"/><path d="M1511.3 580.1 C1516.6 583.3 1532.3 593.5 1543.5 599.5 C1554.6 605.4 1566.6 610.5 1578.4 615.7 C1590.2 620.8 1603.3 623.9 1614.2 630.3 C1625.2 636.7 1635.3 645.2 1644.2 654.2 C1653.1 663.2 1660.0 674.2 1667.9 684.3 C1675.8 694.3 1687.7 709.4 1691.7 714.5" stroke-width="1.2" stroke-opacity="0.40"/><path d="M1779.2 904.9 C1781.8 910.7 1789.0 928.2 1794.5 939.7 C1799.9 951.3 1804.9 963.4 1812.0 974.1 C1819.0 984.7 1827.9 994.3 1836.7 1003.7 C1845.5 1013.1 1855.4 1021.4 1864.6 1030.6 C1873.8 1039.8 1887.4 1054.1 1891.9 1058.8" stroke-width="1.2" stroke-opacity="0.66"/><path d="M620.7 816.0 C623.6 810.3 631.7 792.8 638.2 781.8 C644.7 770.8 652.0 760.3 659.8 750.1 C667.6 740.0 676.2 730.3 685.0 720.9 C693.8 711.5 703.5 702.8 712.8 693.7 C722.0 684.6 731.7 675.8 740.6 666.3 C749.5 656.8 757.6 646.4 766.3 636.6 C775.0 626.7 783.5 616.3 792.8 607.1 C802.2 597.8 817.6 585.3 822.6 581.0" stroke-width="2.2" stroke-opacity="0.56"/><path d="M543.0 1017.9 C544.7 1011.5 549.9 992.4 553.2 979.6 C556.4 966.8 558.8 953.9 562.4 941.2 C566.0 928.6 570.3 916.1 574.8 903.8 C579.3 891.4 584.3 879.2 589.5 867.2 C594.6 855.1 599.9 843.0 605.7 831.3 C611.5 819.5 617.3 807.6 624.3 796.7 C631.4 785.7 639.9 775.8 648.0 765.6 C656.1 755.4 664.0 745.0 672.9 735.5 C681.8 726.0 691.8 717.4 701.6 708.8 C711.4 700.2 721.7 692.1 731.6 683.7 C741.6 675.4 751.6 667.3 761.3 658.7 C770.9 650.1 784.9 636.7 789.6 632.3" stroke-width="1.8" stroke-opacity="0.81"/><path d="M797.7 619.6 C802.6 615.4 816.8 602.0 827.1 594.1 C837.3 586.2 848.7 579.8 859.2 572.2 C869.6 564.5 879.2 555.6 889.9 548.3 C900.6 540.9 911.6 533.8 923.2 528.2 C934.9 522.5 947.3 518.3 959.7 514.5 C972.1 510.7 984.9 508.3 997.5 505.5 C1010.2 502.8 1023.0 500.4 1035.7 498.2 C1048.5 496.1 1061.4 494.4 1074.2 492.5 C1087.1 490.6 1099.9 487.9 1112.8 487.0 C1125.8 486.0 1145.3 486.8 1151.8 486.7" stroke-width="2.2" stroke-opacity="0.67"/><path d="M672.0 770.2 C675.1 764.9 683.1 747.7 690.8 738.2 C698.5 728.6 708.7 721.1 718.2 713.0 C727.6 705.0 737.6 697.5 747.3 689.7 C757.0 681.9 767.2 674.7 776.5 666.3 C785.8 657.9 794.2 648.4 803.1 639.4 C811.9 630.4 825.3 616.6 829.7 612.1" stroke-width="1.8" stroke-opacity="0.43"/><path d="M568.6 942.5 C570.6 936.3 576.2 917.5 580.5 905.2 C584.9 892.9 589.6 880.7 594.6 868.7 C599.5 856.6 604.6 844.6 610.2 832.8 C615.7 821.1 621.3 809.2 628.0 798.1 C634.8 787.1 642.7 776.9 650.4 766.6 C658.2 756.3 665.7 745.7 674.5 736.2 C683.2 726.7 693.2 718.1 702.9 709.5 C712.6 700.9 722.9 692.9 732.8 684.6 C742.6 676.3 752.7 668.2 762.3 659.6 C771.9 651.0 785.7 637.5 790.4 633.1" stroke-width="1.0" stroke-opacity="0.94"/><path d="M1733.4 753.4 C1736.4 759.5 1746.6 777.2 1751.4 789.7 C1756.2 802.3 1758.3 815.9 1762.1 828.9 C1765.8 841.8 1769.0 855.0 1773.8 867.3 C1778.6 879.5 1785.7 890.5 1791.0 902.5 C1796.2 914.5 1800.4 926.9 1805.2 939.1 C1810.0 951.3 1813.6 964.3 1819.6 975.6 C1825.7 986.8 1837.8 1001.4 1841.4 1006.5" stroke-width="1.5" stroke-opacity="0.58"/><path d="M1723.5 780.8 C1726.5 786.3 1736.9 802.2 1741.6 813.7 C1746.3 825.3 1748.8 837.9 1751.8 850.0 C1754.8 862.2 1756.8 874.7 1759.6 886.9 C1762.4 899.1 1765.2 911.2 1768.5 923.3 C1771.8 935.3 1774.4 947.8 1779.4 959.3 C1784.3 970.7 1795.0 986.4 1798.1 991.8" stroke-width="1.8" stroke-opacity="0.68"/><path d="M1826.4 938.4 C1829.4 944.4 1837.8 962.5 1844.7 974.0 C1851.6 985.4 1859.6 996.4 1867.6 1007.2 C1875.6 1018.1 1888.5 1033.7 1892.7 1039.0" stroke-width="1.0" stroke-opacity="0.67"/><path d="M540.3 998.0 C541.7 991.5 545.7 971.8 548.7 958.9 C551.6 945.9 554.2 932.8 558.0 920.1 C561.9 907.4 566.9 895.0 571.7 882.6 C576.6 870.2 581.7 857.9 587.1 845.8 C592.5 833.6 597.5 821.2 604.1 809.8 C610.8 798.4 618.6 787.5 626.8 777.1 C635.0 766.8 644.3 757.2 653.4 747.5 C662.4 737.8 671.5 728.2 681.0 719.0 C690.5 709.7 700.4 701.0 710.2 692.0 C719.9 683.1 730.0 674.5 739.5 665.4 C749.0 656.3 757.7 646.5 767.0 637.3 C776.4 628.0 785.5 618.5 795.4 609.9 C805.4 601.4 821.4 589.9 826.6 585.9" stroke-width="1.8" stroke-opacity="0.40"/><path d="M688.8 742.2 C693.3 737.9 706.5 724.9 715.9 716.8 C725.3 708.7 735.3 701.4 745.2 693.8 C755.0 686.2 765.4 679.3 774.9 671.2 C784.5 663.2 793.4 654.3 802.3 645.5 C811.3 636.7 819.6 627.0 828.8 618.4 C838.1 609.8 847.8 601.7 857.6 593.8 C867.5 585.9 882.8 574.7 887.9 570.9" stroke-width="2.2" stroke-opacity="0.59"/><path d="M1858.8 1023.4 C1863.6 1028.1 1882.9 1046.8 1887.7 1051.5" stroke-width="1.0" stroke-opacity="0.72"/><path d="M1179.9 505.7 C1186.0 506.1 1204.5 507.0 1216.8 508.1 C1229.2 509.1 1241.8 509.9 1253.9 512.0 C1266.1 514.2 1283.8 519.6 1289.8 521.1" stroke-width="1.8" stroke-opacity="0.72"/><path d="M815.2 617.3 C820.1 613.2 834.6 600.7 844.7 592.8 C854.7 584.9 865.0 577.3 875.4 569.7 C885.7 562.1 895.8 554.1 906.7 547.4 C917.5 540.7 928.9 534.5 940.7 529.5 C952.4 524.5 971.1 519.4 977.2 517.4" stroke-width="1.8" stroke-opacity="0.71"/><path d="M1703.9 755.4 C1707.5 760.4 1719.3 775.0 1725.8 785.5 C1732.3 796.0 1738.4 807.0 1743.0 818.4 C1747.5 829.9 1750.0 842.3 1753.1 854.3 C1756.2 866.3 1758.4 878.6 1761.6 890.6 C1764.8 902.6 1768.2 914.4 1772.2 926.2 C1776.1 938.0 1783.1 955.5 1785.3 961.3" stroke-width="1.8" stroke-opacity="0.44"/><path d="M1147.1 503.6 C1153.3 503.9 1172.0 504.3 1184.4 505.3 C1196.8 506.4 1209.2 507.9 1221.6 509.7 C1233.9 511.5 1246.6 512.8 1258.5 516.0 C1270.5 519.2 1281.7 524.6 1293.3 529.1 C1304.8 533.5 1315.9 538.7 1327.7 542.6 C1339.5 546.5 1351.5 550.3 1363.9 552.5 C1376.3 554.8 1389.4 554.9 1402.1 556.2 C1414.9 557.5 1428.1 557.9 1440.6 560.2 C1453.1 562.5 1465.6 565.7 1477.1 569.9 C1488.7 574.2 1504.4 583.1 1509.8 585.7" stroke-width="2.2" stroke-opacity="0.78"/><path d="M916.3 562.4 C921.9 559.6 938.3 550.5 949.7 545.5 C961.2 540.6 973.1 536.8 985.0 532.8 C996.8 528.8 1008.9 525.3 1020.9 521.6 C1032.8 518.0 1044.7 514.0 1056.8 510.7 C1069.0 507.5 1081.2 504.3 1093.6 502.1 C1105.9 499.8 1118.5 498.0 1131.1 497.4 C1143.6 496.8 1156.3 497.7 1168.9 498.4 C1181.5 499.1 1194.1 500.4 1206.7 501.7 C1219.3 503.1 1232.1 504.2 1244.5 506.6 C1256.9 508.9 1269.1 512.4 1281.1 515.7 C1293.2 519.1 1304.9 523.3 1316.9 526.7 C1329.0 530.1 1347.4 534.4 1353.5 535.9" stroke-width="1.5" stroke-opacity="0.51"/><path d="M727.4 708.4 C732.5 704.7 747.8 693.8 758.0 686.6 C768.1 679.4 778.9 672.9 788.5 664.9 C798.2 657.0 806.6 647.7 815.8 639.1 C825.0 630.6 834.0 621.9 843.6 613.9 C853.1 605.8 862.9 597.9 873.1 590.7 C883.3 583.5 893.9 576.8 904.7 570.5 C915.6 564.2 926.6 558.1 938.0 553.1 C949.5 548.1 961.5 544.5 973.4 540.6 C985.3 536.8 997.4 533.5 1009.4 530.0 C1021.4 526.4 1039.5 521.2 1045.5 519.4" stroke-width="1.0" stroke-opacity="0.45"/><path d="M1483.9 594.2 C1489.6 596.6 1507.0 603.2 1518.4 608.4 C1529.7 613.6 1540.9 619.6 1552.1 625.3 C1563.4 631.0 1574.8 636.4 1585.8 642.6 C1596.7 648.8 1608.2 654.5 1617.9 662.3 C1627.7 670.1 1635.5 680.4 1644.2 689.5 C1653.0 698.5 1666.1 712.1 1670.5 716.6" stroke-width="2.2" stroke-opacity="0.52"/><path d="M947.3 521.7 C953.7 520.3 972.8 515.8 985.6 513.3 C998.5 510.8 1011.4 508.9 1024.2 506.8 C1037.0 504.7 1049.8 502.7 1062.6 500.8 C1075.4 499.0 1088.2 496.7 1101.0 495.6 C1113.9 494.5 1126.8 494.0 1139.7 494.5 C1152.6 494.9 1165.4 496.7 1178.2 498.3 C1191.0 499.9 1203.7 502.0 1216.3 504.3 C1228.9 506.6 1241.8 508.2 1253.9 512.0 C1266.1 515.7 1277.6 521.3 1289.1 526.7 C1300.5 532.2 1316.9 541.7 1322.5 544.7" stroke-width="1.5" stroke-opacity="0.72"/><path d="M856.7 600.2 C861.9 596.7 877.2 585.7 888.0 579.2 C898.7 572.7 909.6 566.3 920.9 561.0 C932.2 555.6 944.1 551.2 956.0 547.2 C967.9 543.2 986.2 538.6 992.3 536.9" stroke-width="2.6" stroke-opacity="0.72"/><path d="M554.4 1028.3 C556.1 1022.1 560.9 1003.3 564.1 990.8 C567.3 978.3 570.3 965.8 573.7 953.3 C577.0 940.9 580.4 928.4 584.3 916.1 C588.2 903.8 592.5 891.6 597.0 879.5 C601.5 867.4 606.2 855.3 611.3 843.4 C616.3 831.6 621.4 819.6 627.4 808.2 C633.5 796.9 640.4 786.2 647.4 775.5 C654.5 764.8 661.4 754.0 669.6 744.1 C677.9 734.3 687.3 725.4 696.7 716.5 C706.1 707.7 721.1 695.5 726.0 691.3" stroke-width="1.0" stroke-opacity="0.91"/><path d="M1520.7 578.0 C1526.1 581.4 1541.7 592.3 1553.1 598.2 C1564.5 604.1 1577.1 608.1 1589.0 613.3 C1600.9 618.5 1614.0 622.2 1624.6 629.3 C1635.3 636.3 1644.3 646.1 1652.7 655.8 C1661.1 665.5 1667.1 677.2 1674.9 687.4 C1682.7 697.7 1690.8 707.9 1699.7 717.4 C1708.6 726.9 1719.8 734.5 1728.1 744.5 C1736.3 754.5 1743.6 765.8 1749.3 777.5 C1755.0 789.1 1760.2 808.2 1762.3 814.4" stroke-width="1.2" stroke-opacity="0.32"/><path d="M753.7 688.9 C758.8 685.4 774.8 675.3 784.6 667.6 C794.4 659.9 803.2 650.9 812.5 642.5 C821.8 634.1 830.7 625.3 840.3 617.3 C849.8 609.2 859.5 601.2 869.7 594.0 C879.9 586.8 896.1 577.3 901.4 573.9" stroke-width="1.2" stroke-opacity="0.59"/><path d="M615.3 864.9 C618.1 859.2 626.2 841.7 631.9 830.4 C637.7 819.0 643.7 807.8 649.9 796.7 C656.0 785.6 661.8 774.4 668.8 763.9 C675.8 753.4 683.0 742.8 691.8 733.8 C700.6 724.8 716.6 713.9 721.6 709.9" stroke-width="1.2" stroke-opacity="0.61"/><path d="M781.1 644.3 C785.7 639.8 799.2 625.9 808.8 617.4 C818.5 608.9 828.7 601.0 838.9 593.3 C849.2 585.6 860.0 578.5 870.5 571.2 C881.0 563.8 896.8 552.8 902.1 549.2" stroke-width="2.2" stroke-opacity="0.66"/><path d="M1067.9 501.2 C1074.3 500.6 1093.7 497.7 1106.7 497.2 C1119.6 496.7 1132.6 497.2 1145.5 498.3 C1158.4 499.3 1171.3 501.4 1184.0 503.5 C1196.7 505.7 1215.4 509.9 1221.7 511.2" stroke-width="1.0" stroke-opacity="0.61"/><path d="M1850.6 1033.1 C1856.0 1037.4 1877.7 1054.7 1883.2 1059.0" stroke-width="2.2" stroke-opacity="0.92"/><path d="M1143.5 491.1 C1149.9 491.7 1169.3 493.3 1182.2 494.8 C1195.0 496.4 1207.8 498.3 1220.5 500.4 C1233.2 502.5 1252.2 506.3 1258.5 507.5" stroke-width="1.5" stroke-opacity="0.65"/><path d="M601.4 900.6 C603.9 894.7 610.9 876.8 616.1 865.1 C621.3 853.5 626.7 841.9 632.4 830.5 C638.1 819.1 644.0 807.9 650.1 796.8 C656.1 785.7 661.8 774.4 668.8 763.9 C675.7 753.4 682.9 742.8 691.7 733.8 C700.5 724.7 711.2 717.4 721.3 709.8 C731.5 702.2 742.1 695.2 752.6 688.1 C763.0 681.0 778.9 670.7 784.2 667.2" stroke-width="2.6" stroke-opacity="0.94"/><path d="M560.9 915.6 C563.2 909.4 570.0 890.7 574.9 878.3 C579.8 866.0 584.9 853.7 590.4 841.7 C595.9 829.6 601.0 817.2 607.8 805.9 C614.7 794.6 623.0 784.2 631.3 774.0 C639.6 763.7 648.5 753.9 657.5 744.2 C666.5 734.5 675.8 725.0 685.4 715.9 C694.9 706.7 704.9 698.1 714.7 689.3 C724.5 680.4 734.5 671.9 744.0 662.8 C753.5 653.7 762.2 644.0 771.6 634.8 C780.9 625.7 795.4 612.3 800.2 607.8" stroke-width="2.2" stroke-opacity="0.56"/><path d="M1545.4 589.8 C1551.3 592.7 1568.6 601.8 1580.5 607.2 C1592.5 612.5 1605.9 615.4 1617.0 622.1 C1628.0 628.7 1638.1 637.6 1646.9 647.1 C1655.7 656.5 1662.1 668.2 1669.7 678.8 C1677.3 689.4 1684.0 700.8 1692.7 710.6 C1701.3 720.4 1712.9 727.7 1721.4 737.5 C1730.0 747.4 1737.9 758.3 1744.1 769.8 C1750.3 781.3 1754.1 794.0 1758.6 806.3 C1763.0 818.7 1765.4 831.9 1770.8 843.9 C1776.1 856.0 1783.2 867.3 1790.5 878.4 C1797.8 889.5 1807.5 899.4 1814.5 910.7 C1821.5 922.1 1826.3 934.6 1832.6 946.4 C1838.9 958.2 1849.0 975.6 1852.2 981.4" stroke-width="1.2" stroke-opacity="0.30"/><path d="M1006.7 502.7 C1012.9 501.1 1031.3 496.1 1043.8 493.3 C1056.3 490.5 1069.0 488.3 1081.7 486.0 C1094.4 483.6 1107.2 480.3 1120.1 478.9 C1133.0 477.6 1152.7 478.1 1159.2 477.9" stroke-width="2.6" stroke-opacity="0.51"/><path d="M896.6 558.3 C902.2 555.2 918.5 545.0 930.1 539.8 C941.8 534.6 954.1 530.9 966.3 527.2 C978.6 523.5 991.1 520.8 1003.5 517.8 C1015.9 514.8 1028.3 511.9 1040.8 509.3 C1053.3 506.6 1065.7 504.0 1078.3 501.8 C1090.8 499.7 1103.5 497.1 1116.2 496.2 C1128.9 495.3 1141.7 495.9 1154.4 496.6 C1167.2 497.2 1179.9 498.7 1192.6 500.2 C1205.2 501.8 1217.9 503.5 1230.4 505.9 C1242.9 508.2 1255.5 510.6 1267.6 514.4 C1279.6 518.1 1296.7 526.0 1302.5 528.3" stroke-width="1.2" stroke-opacity="0.63"/><path d="M597.9 818.0 C601.1 812.3 609.6 794.2 617.2 783.4 C624.8 772.7 634.6 763.5 643.4 753.6 C652.3 743.8 661.3 734.0 670.4 724.4 C679.6 714.8 689.0 705.4 698.4 696.0 C707.7 686.5 717.5 677.5 726.5 667.7 C735.6 657.8 743.7 647.1 752.5 637.0 C761.3 626.9 774.8 612.0 779.2 607.1" stroke-width="1.0" stroke-opacity="0.53"/><path d="M947.3 550.6 C953.2 548.6 971.0 542.7 983.0 539.0 C995.0 535.4 1007.1 532.2 1019.1 528.7 C1031.1 525.2 1043.0 521.2 1055.0 517.9 C1067.1 514.6 1079.2 511.2 1091.5 508.9 C1103.7 506.7 1116.2 504.9 1128.6 504.4 C1141.1 503.9 1153.7 505.1 1166.1 506.0 C1178.6 506.9 1191.1 508.1 1203.4 509.8 C1215.8 511.5 1228.4 512.8 1240.5 515.9 C1252.5 519.1 1264.3 523.3 1275.6 528.5 C1286.9 533.7 1297.3 541.0 1308.3 547.1 C1319.2 553.2 1335.7 562.1 1341.1 565.1" stroke-width="2.2" stroke-opacity="0.47"/><path d="M831.3 606.7 C836.6 603.1 852.4 592.3 863.1 585.3 C873.7 578.3 884.2 571.0 895.2 564.7 C906.2 558.4 917.4 552.3 929.2 547.5 C940.9 542.7 953.4 539.2 965.6 535.8 C977.9 532.4 996.7 528.5 1002.9 527.1" stroke-width="1.0" stroke-opacity="0.70"/><path d="M1513.4 609.6 C1519.1 611.9 1536.4 618.5 1547.9 623.3 C1559.4 628.1 1570.8 633.0 1582.2 638.3 C1593.5 643.5 1605.5 648.0 1615.8 654.8 C1626.0 661.7 1634.7 670.8 1643.6 679.4 C1652.6 688.0 1660.7 697.3 1669.3 706.3 C1677.8 715.3 1686.7 724.1 1694.9 733.5 C1703.2 742.8 1711.3 752.4 1718.8 762.4 C1726.4 772.3 1736.7 788.2 1740.3 793.3" stroke-width="1.5" stroke-opacity="0.49"/><path d="M1595.2 626.8 C1600.6 630.5 1618.1 639.8 1627.6 648.5 C1637.2 657.2 1644.6 668.6 1652.8 678.8 C1660.9 689.0 1668.5 699.5 1676.6 709.7 C1684.7 719.8 1693.6 729.3 1701.5 739.6 C1709.3 749.9 1717.0 760.4 1723.8 771.3 C1730.6 782.3 1737.5 793.4 1742.3 805.4 C1747.0 817.3 1749.4 830.3 1752.4 842.8 C1755.4 855.4 1758.9 874.4 1760.2 880.7" stroke-width="1.2" stroke-opacity="0.68"/><path d="M1142.5 503.8 C1148.7 504.1 1167.4 504.6 1179.8 505.6 C1192.3 506.7 1204.7 508.2 1217.0 510.0 C1229.4 511.7 1242.1 512.9 1254.0 516.2 C1266.0 519.5 1277.3 525.0 1288.7 529.9 C1300.0 534.7 1310.9 540.6 1322.4 545.3 C1333.9 549.9 1351.7 555.7 1357.5 557.8" stroke-width="2.2" stroke-opacity="0.70"/><path d="M809.8 588.8 C815.5 585.5 833.2 576.1 844.1 568.7 C855.1 561.2 864.7 552.0 875.4 544.4 C886.2 536.7 896.9 528.9 908.6 522.9 C920.2 516.8 932.7 511.8 945.3 508.0 C957.9 504.2 971.2 502.2 984.2 499.9 C997.3 497.6 1010.4 495.9 1023.5 494.2 C1036.6 492.6 1049.8 491.6 1062.9 490.1 C1076.0 488.7 1089.0 486.5 1102.1 485.5 C1115.2 484.5 1128.4 483.9 1141.5 484.3 C1154.6 484.8 1174.2 487.7 1180.8 488.3" stroke-width="2.6" stroke-opacity="0.41"/><path d="M575.5 973.1 C577.1 966.9 581.6 948.3 585.0 936.0 C588.4 923.6 592.0 911.3 595.9 899.1 C599.9 886.9 604.0 874.8 608.4 862.8 C612.9 850.7 617.5 838.7 622.7 827.0 C627.8 815.3 633.2 803.6 639.4 792.4 C645.5 781.3 652.2 770.6 659.5 760.2 C666.8 749.8 674.6 739.4 683.2 730.0 C691.9 720.6 701.9 712.4 711.5 703.9 C721.1 695.3 731.1 687.3 740.7 678.8 C750.3 670.2 759.7 661.7 768.9 652.7 C778.2 643.7 786.7 633.9 795.9 624.9 C805.2 615.8 814.4 606.6 824.5 598.5 C834.5 590.4 850.9 579.9 856.1 576.2" stroke-width="1.5" stroke-opacity="0.83"/><path d="M554.2 979.7 C555.6 973.3 559.1 954.0 562.4 941.2 C565.6 928.5 569.3 915.9 573.5 903.4 C577.6 891.0 582.2 878.7 587.0 866.4 C591.8 854.2 596.6 841.9 602.1 830.0 C607.6 818.1 612.9 805.9 619.9 794.9 C626.9 783.9 635.7 774.1 643.9 764.0 C652.1 753.8 660.3 743.6 669.2 734.0 C678.1 724.4 687.8 715.4 697.3 706.4 C706.9 697.4 716.9 688.9 726.5 679.9 C736.0 671.0 750.0 657.2 754.7 652.7" stroke-width="1.2" stroke-opacity="0.98"/><path d="M962.5 539.9 C968.3 537.6 985.6 530.6 997.3 526.3 C1009.0 522.0 1020.9 517.9 1032.8 514.1 C1044.7 510.3 1056.7 506.6 1068.8 503.4 C1081.0 500.3 1099.6 496.4 1105.8 495.0" stroke-width="2.2" stroke-opacity="0.71"/><path d="M603.3 866.2 C605.3 860.1 610.8 841.6 615.3 829.5 C619.7 817.4 624.2 805.1 630.1 793.8 C635.9 782.5 643.1 772.0 650.4 761.5 C657.7 751.0 665.4 740.7 673.8 730.9 C682.2 721.1 696.1 707.5 700.6 702.8" stroke-width="2.2" stroke-opacity="0.61"/><path d="M1632.4 635.3 C1636.7 640.1 1650.3 654.2 1658.2 664.4 C1666.2 674.6 1672.0 686.4 1680.1 696.6 C1688.2 706.7 1697.8 715.7 1706.6 725.3 C1715.4 735.0 1725.3 743.8 1732.9 754.4 C1740.5 764.9 1746.9 776.7 1752.0 788.6 C1757.2 800.6 1759.6 813.7 1764.0 826.1 C1768.4 838.4 1772.0 851.3 1778.3 862.8 C1784.6 874.3 1794.2 884.2 1801.5 895.2 C1808.9 906.3 1816.1 917.6 1822.5 929.2 C1828.9 940.9 1833.5 953.5 1840.2 965.0 C1846.8 976.6 1858.7 993.1 1862.4 998.7" stroke-width="1.5" stroke-opacity="0.47"/><path d="M1145.0 496.6 C1151.4 497.1 1170.5 498.3 1183.2 499.8 C1195.9 501.2 1208.5 503.1 1221.1 505.2 C1233.6 507.3 1246.4 509.0 1258.5 512.5 C1270.6 515.9 1282.1 521.3 1293.7 526.1 C1305.2 531.0 1316.4 536.7 1328.0 541.4 C1339.6 546.1 1351.3 551.0 1363.4 554.4 C1375.5 557.8 1388.1 559.2 1400.5 561.9 C1412.8 564.5 1425.3 566.8 1437.5 570.2 C1449.6 573.6 1461.6 577.7 1473.2 582.2 C1484.8 586.6 1501.4 594.4 1507.0 596.9" stroke-width="1.5" stroke-opacity="0.47"/><path d="M1065.1 506.5 C1071.4 505.3 1089.9 500.9 1102.5 499.3 C1115.0 497.7 1127.8 497.0 1140.4 497.0 C1153.1 497.0 1165.8 498.2 1178.5 499.4 C1191.1 500.6 1203.7 502.3 1216.3 504.1 C1228.9 505.9 1241.7 507.2 1253.9 510.3 C1266.1 513.3 1277.8 518.0 1289.6 522.3 C1301.4 526.6 1312.7 531.7 1324.5 535.9 C1336.3 540.1 1348.1 544.5 1360.3 547.4 C1372.6 550.3 1385.5 551.3 1398.1 553.3 C1410.6 555.3 1423.5 556.5 1435.8 559.3 C1448.2 562.2 1460.6 565.8 1472.2 570.3 C1483.7 574.9 1499.6 583.9 1505.0 586.6" stroke-width="1.8" stroke-opacity="0.46"/><path d="M1105.5 480.9 C1112.1 480.6 1131.8 478.9 1145.0 479.2 C1158.1 479.5 1171.2 481.4 1184.4 482.6 C1197.5 483.9 1210.7 485.2 1223.9 486.6 C1237.0 488.0 1250.2 489.7 1263.4 490.9 C1276.6 492.2 1289.9 493.4 1303.2 494.3 C1316.6 495.3 1330.0 496.0 1343.4 496.6 C1356.8 497.3 1370.2 498.4 1383.7 498.5 C1397.2 498.6 1417.4 497.6 1424.2 497.4" stroke-width="1.8" stroke-opacity="0.39"/><path d="M801.6 616.6 C806.2 612.1 819.8 598.1 829.6 589.6 C839.4 581.0 850.3 573.9 860.2 565.4 C870.2 556.9 879.1 546.8 889.3 538.5 C899.5 530.2 916.1 519.4 921.5 515.6" stroke-width="2.2" stroke-opacity="0.68"/><path d="M1323.2 519.6 C1329.4 521.1 1347.8 526.4 1360.4 528.8 C1372.9 531.3 1385.9 532.4 1398.6 534.2 C1411.4 535.9 1424.5 536.3 1437.0 539.1 C1449.4 542.0 1462.2 545.8 1473.5 551.3 C1484.7 556.9 1499.2 568.8 1504.4 572.3" stroke-width="1.8" stroke-opacity="0.58"/><path d="M1114.3 504.3 C1120.5 504.3 1139.4 503.7 1151.9 504.2 C1164.4 504.7 1176.9 505.9 1189.4 507.4 C1201.8 508.9 1214.2 510.8 1226.5 513.3 C1238.8 515.7 1251.3 517.7 1262.9 522.1 C1274.5 526.4 1285.2 533.4 1296.2 539.5 C1307.2 545.5 1317.6 552.7 1328.7 558.3 C1339.9 563.9 1357.4 570.6 1363.2 573.0" stroke-width="2.2" stroke-opacity="0.49"/><path d="M1807.9 1006.8 C1813.5 1010.2 1830.9 1019.7 1841.6 1027.3 C1852.4 1034.8 1867.1 1048.2 1872.2 1052.4" stroke-width="2.6" stroke-opacity="0.83"/><path d="M1770.8 921.8 C1773.3 927.4 1779.9 944.6 1786.2 955.4 C1792.5 966.2 1799.8 977.1 1808.5 986.5 C1817.3 996.0 1828.5 1003.4 1838.6 1012.0 C1848.7 1020.5 1859.2 1028.9 1869.1 1037.9 C1879.0 1046.9 1893.4 1061.3 1898.3 1066.0" stroke-width="2.2" stroke-opacity="0.60"/><path d="M1611.8 652.2 C1616.5 656.4 1631.1 668.2 1640.1 676.9 C1649.0 685.7 1657.0 695.4 1665.5 704.6 C1674.0 713.8 1683.1 722.6 1691.2 732.1 C1699.4 741.6 1706.9 751.7 1714.4 761.8 C1721.8 771.9 1730.2 781.7 1736.0 792.8 C1741.9 803.8 1745.5 816.1 1749.4 828.0 C1753.2 840.0 1755.5 852.5 1759.0 864.6 C1762.5 876.7 1766.2 888.6 1770.1 900.4 C1774.1 912.3 1778.1 924.0 1782.8 935.7 C1787.5 947.4 1791.9 959.6 1798.3 970.5 C1804.7 981.3 1812.7 991.6 1821.5 1000.7 C1830.2 1009.8 1841.1 1016.7 1850.6 1025.2 C1860.0 1033.8 1873.7 1047.6 1878.3 1052.0" stroke-width="2.2" stroke-opacity="0.43"/><path d="M968.0 530.3 C974.1 528.7 992.6 523.8 1004.9 520.7 C1017.3 517.7 1029.6 514.6 1042.0 511.8 C1054.3 509.0 1066.7 506.2 1079.2 503.9 C1091.7 501.6 1104.2 499.0 1116.9 498.2 C1129.5 497.3 1142.3 497.9 1155.0 498.6 C1167.7 499.3 1180.3 500.7 1192.9 502.2 C1205.6 503.8 1218.2 505.5 1230.6 508.0 C1243.0 510.4 1255.6 512.9 1267.5 516.9 C1279.4 520.8 1290.5 526.8 1301.9 531.9 C1313.4 536.9 1324.4 542.9 1336.1 547.4 C1347.7 551.9 1359.8 555.9 1371.9 559.0 C1384.1 562.2 1396.7 563.7 1409.0 566.3 C1421.3 569.0 1439.7 573.6 1445.9 575.0" stroke-width="1.5" stroke-opacity="0.40"/><path d="M1833.9 1000.1 C1838.6 1004.6 1852.5 1017.8 1861.7 1027.0 C1870.9 1036.2 1884.4 1050.5 1889.0 1055.2" stroke-width="2.2" stroke-opacity="0.69"/><path d="M685.2 740.7 C689.8 736.4 703.1 723.1 712.5 714.9 C721.9 706.7 732.0 699.1 741.7 691.2 C751.5 683.4 761.7 676.1 771.2 667.8 C780.7 659.5 789.5 650.4 798.5 641.5 C807.6 632.6 816.0 623.0 825.4 614.5 C834.8 605.9 845.0 598.3 854.9 590.4 C864.9 582.5 875.0 574.6 885.3 567.2 C895.7 559.8 911.8 549.5 917.1 545.9" stroke-width="1.5" stroke-opacity="0.71"/></g><g fill="none" stroke="#fff" stroke-linecap="round"><path d="M529.0 995.0 C529.7 984.2 531.7 950.8 533.0 930.0 C534.3 909.2 534.2 885.8 537.0 870.0 C539.8 854.2 544.3 845.5 550.0 835.0 C555.7 824.5 562.7 817.0 571.0 807.0 C579.3 797.0 591.0 783.3 600.0 775.0 C609.0 766.7 612.5 763.3 625.0 757.0 C637.5 750.7 663.2 741.2 675.0 737.0 C686.8 732.8 685.2 735.7 696.0 732.0 C706.8 728.3 732.7 717.8 740.0 715.0" stroke-width="1.6" stroke-opacity="0.90"/><path d="M440.0 1045.0 C442.5 1035.8 450.0 1006.7 455.0 990.0 C460.0 973.3 464.2 956.7 470.0 945.0 C475.8 933.3 486.7 924.2 490.0 920.0" stroke-width="1.2" stroke-opacity="0.35"/><path d="M396.0 1039.0 C405.0 1039.2 432.7 1038.2 450.0 1040.0 C467.3 1041.8 487.2 1047.0 500.0 1050.0 C512.8 1053.0 522.5 1056.7 527.0 1058.0" stroke-width="1.5" stroke-opacity="0.55"/><path d="M470.0 1030.0 C475.0 1032.5 490.0 1040.0 500.0 1045.0 C510.0 1050.0 525.0 1057.5 530.0 1060.0" stroke-width="1.5" stroke-opacity="0.60"/><path d="M760.0 629.0 C765.0 623.8 778.8 608.3 790.0 598.0 C801.2 587.7 811.7 578.8 827.0 567.0 C842.3 555.2 859.8 538.2 882.0 527.0 C904.2 515.8 937.8 506.0 960.0 500.0 C982.2 494.0 996.5 493.2 1015.0 491.0 C1033.5 488.8 1053.5 487.7 1071.0 487.0 C1088.5 486.3 1111.8 487.0 1120.0 487.0" stroke-width="2.2" stroke-opacity="0.95"/><path d="M915.0 464.0 C918.8 467.8 930.5 481.0 938.0 487.0 C945.5 493.0 949.7 497.0 960.0 500.0 C970.3 503.0 993.3 504.2 1000.0 505.0" stroke-width="2" stroke-opacity="0.85"/><path d="M933.0 524.0 C941.2 523.3 962.7 520.0 982.0 520.0 C1001.3 520.0 1037.8 523.3 1049.0 524.0" stroke-width="2" stroke-opacity="0.80"/><path d="M961.8 498.0 C956.0 494.3 936.0 486.2 927.0 476.0 C918.0 465.8 909.2 449.7 908.0 437.0 C906.8 424.3 913.0 409.5 920.0 400.0 C927.0 390.5 940.4 384.4 950.0 380.0 C959.6 375.6 965.7 372.8 977.6 373.6 C989.5 374.4 1010.4 378.9 1021.6 384.6 C1032.8 390.3 1039.8 400.6 1045.0 408.0 C1050.2 415.4 1050.6 420.5 1053.0 428.7 C1055.4 436.9 1058.4 448.1 1059.4 457.0 C1060.4 465.9 1059.1 477.8 1059.0 482.0" stroke-width="2.3" stroke-opacity="0.70"/><path d="M1031.0 435.0 C1031.5 439.2 1030.3 451.7 1034.0 460.0 C1037.7 468.3 1045.3 478.3 1053.0 485.0 C1060.7 491.7 1075.5 497.5 1080.0 500.0" stroke-width="2" stroke-opacity="0.80"/><path d="M1130.7 477.0 C1128.1 470.8 1118.1 452.3 1115.0 440.0 C1111.9 427.7 1110.3 416.3 1112.0 403.0 C1113.7 389.7 1117.8 370.8 1125.0 360.0 C1132.2 349.2 1146.0 341.5 1155.0 338.5 C1164.0 335.5 1171.3 335.8 1179.0 342.0 C1186.7 348.2 1195.8 363.7 1201.0 375.5 C1206.2 387.3 1206.9 394.1 1210.0 412.6 C1213.1 431.1 1218.0 474.4 1219.6 486.7" stroke-width="2.2" stroke-opacity="0.75"/><path d="M1127.0 450.0 C1127.3 439.2 1125.0 401.2 1129.0 385.0 C1133.0 368.8 1147.3 358.3 1151.0 353.0" stroke-width="1.8" stroke-opacity="0.75"/><path d="M1220.0 487.0 C1220.2 473.0 1217.8 420.7 1221.5 403.0 C1225.2 385.3 1233.1 383.7 1242.0 381.0 C1250.9 378.3 1263.3 383.6 1275.0 386.7 C1286.7 389.8 1302.7 392.2 1312.0 399.6 C1321.3 407.0 1325.4 418.1 1331.0 431.0 C1336.6 443.9 1343.1 464.7 1345.5 477.0 C1347.9 489.3 1345.5 500.3 1345.5 505.0" stroke-width="2.0" stroke-opacity="0.75"/><path d="M1266.0 407.0 C1264.5 411.0 1258.0 420.8 1257.0 431.0 C1256.0 441.2 1257.0 457.2 1260.0 468.0 C1263.0 478.8 1270.0 489.8 1275.0 496.0 C1280.0 502.2 1287.5 503.5 1290.0 505.0" stroke-width="2.2" stroke-opacity="0.85"/><path d="M1266.0 407.0 C1271.7 409.2 1290.8 414.5 1300.0 420.0 C1309.2 425.5 1317.0 425.8 1321.5 440.0 C1326.0 454.2 1326.1 494.2 1327.0 505.0" stroke-width="2" stroke-opacity="0.80"/><path d="M1253.0 366.0 C1256.7 365.3 1271.3 362.4 1275.0 361.7" stroke-width="1.8" stroke-opacity="0.60"/><path d="M1299.0 370.0 C1302.2 374.7 1314.3 375.5 1318.0 398.0 C1321.7 420.5 1320.5 487.2 1321.0 505.0" stroke-width="1.8" stroke-opacity="0.75"/><path d="M1208.5 498.0 C1223.8 495.0 1269.8 485.9 1300.0 480.0 C1330.2 474.1 1375.0 465.5 1390.0 462.6" stroke-width="2.8" stroke-opacity="0.95"/><path d="M1379.0 468.0 C1374.7 474.2 1357.3 498.8 1353.0 505.0" stroke-width="1.8" stroke-opacity="0.80"/><path d="M1130.7 427.0 C1137.2 428.7 1157.0 433.5 1170.0 437.0 C1183.0 440.5 1202.1 446.2 1208.5 448.0" stroke-width="1.6" stroke-opacity="0.70"/><path d="M1090.0 449.6 C1099.2 454.8 1136.2 475.8 1145.5 481.0" stroke-width="2" stroke-opacity="0.80"/><path d="M905.0 520.0 C914.2 516.3 940.8 503.0 960.0 498.0 C979.2 493.0 1000.0 491.8 1020.0 490.0 C1040.0 488.2 1063.3 487.0 1080.0 487.0 C1096.7 487.0 1103.3 489.2 1120.0 490.0 C1136.7 490.8 1170.0 491.7 1180.0 492.0" stroke-width="3" stroke-opacity="0.90"/><path d="M1000.0 520.0 C1006.7 513.3 1025.0 490.3 1040.0 480.0 C1055.0 469.7 1076.7 462.2 1090.0 458.0 C1103.3 453.8 1115.0 455.5 1120.0 455.0" stroke-width="2" stroke-opacity="0.85"/><path d="M1053.0 437.0 C1059.2 438.3 1078.8 442.0 1090.0 445.0 C1101.2 448.0 1110.0 450.8 1120.0 455.0 C1130.0 459.2 1145.0 467.5 1150.0 470.0" stroke-width="2" stroke-opacity="0.80"/><path d="M1100.0 470.0 C1106.7 472.5 1125.0 480.0 1140.0 485.0 C1155.0 490.0 1181.7 497.5 1190.0 500.0" stroke-width="2.5" stroke-opacity="0.85"/><path d="M1150.0 500.0 C1158.3 498.0 1183.3 491.3 1200.0 488.0 C1216.7 484.7 1236.7 478.0 1250.0 480.0 C1263.3 482.0 1275.0 496.7 1280.0 500.0" stroke-width="2" stroke-opacity="0.80"/><path d="M1360.0 503.0 C1371.2 504.5 1406.2 508.7 1427.0 512.0 C1447.8 515.3 1467.8 515.8 1485.0 523.0 C1502.2 530.2 1514.2 543.8 1530.0 555.0 C1545.8 566.2 1571.7 584.2 1580.0 590.0" stroke-width="2" stroke-opacity="0.80"/><path d="M1400.0 530.0 C1408.3 531.7 1433.3 535.0 1450.0 540.0 C1466.7 545.0 1484.2 551.7 1500.0 560.0 C1515.8 568.3 1537.5 585.0 1545.0 590.0" stroke-width="2.5" stroke-opacity="0.75"/><path d="M1640.0 615.0 C1642.3 622.0 1651.7 650.0 1654.0 657.0" stroke-width="1.5" stroke-opacity="0.80"/><path d="M1682.0 682.0 C1688.3 688.3 1706.2 707.0 1720.0 720.0 C1733.8 733.0 1745.8 747.3 1765.0 760.0 C1784.2 772.7 1815.0 779.3 1835.0 796.0 C1855.0 812.7 1871.5 840.7 1885.0 860.0 C1898.5 879.3 1910.8 903.3 1916.0 912.0" stroke-width="1.6" stroke-opacity="0.85"/><path d="M1738.0 788.0 C1746.7 795.0 1776.2 818.0 1790.0 830.0 C1803.8 842.0 1811.0 848.3 1821.0 860.0 C1831.0 871.7 1845.2 893.3 1850.0 900.0" stroke-width="1.4" stroke-opacity="0.70"/><path d="M1791.0 820.0 C1797.5 827.7 1821.8 850.5 1830.0 866.0 C1838.2 881.5 1839.5 897.5 1840.0 913.0 C1840.5 928.5 1834.7 946.2 1833.0 959.0 C1831.3 971.8 1830.5 984.8 1830.0 990.0" stroke-width="1.3" stroke-opacity="0.75"/><path d="M1600.0 620.0 C1610.0 628.3 1643.3 653.3 1660.0 670.0 C1676.7 686.7 1686.7 700.0 1700.0 720.0 C1713.3 740.0 1726.7 765.0 1740.0 790.0 C1753.3 815.0 1766.7 843.3 1780.0 870.0 C1793.3 896.7 1805.0 923.3 1820.0 950.0 C1835.0 976.7 1857.5 1010.7 1870.0 1030.0 C1882.5 1049.3 1890.8 1060.0 1895.0 1066.0" stroke-width="2.2" stroke-opacity="0.80"/><path d="M1700.0 740.0 C1708.3 750.0 1735.0 776.7 1750.0 800.0 C1765.0 823.3 1775.0 853.3 1790.0 880.0 C1805.0 906.7 1823.3 933.3 1840.0 960.0 C1856.7 986.7 1879.2 1022.3 1890.0 1040.0 C1900.8 1057.7 1902.5 1061.7 1905.0 1066.0" stroke-width="2" stroke-opacity="0.75"/><path d="M1760.0 980.0 C1770.0 985.0 1801.7 1000.0 1820.0 1010.0 C1838.3 1020.0 1856.7 1030.7 1870.0 1040.0 C1883.3 1049.3 1895.0 1061.7 1900.0 1066.0" stroke-width="2" stroke-opacity="0.70"/><path d="M880.0 535.6 C895.6 529.8 945.1 511.4 973.8 501.0 C1002.4 490.6 1031.1 480.2 1051.9 473.0 C1072.7 465.8 1086.3 458.5 1098.8 457.5 C1111.3 456.5 1118.1 461.7 1126.9 466.9 C1135.8 472.1 1147.7 485.1 1151.9 488.8" stroke-width="2.0" stroke-opacity="0.85"/><path d="M880.0 563.8 C893.0 557.0 932.0 533.0 958.0 523.0 C984.0 513.0 1007.3 508.7 1036.0 504.0 C1064.7 499.3 1103.9 496.5 1130.0 495.0 C1156.1 493.5 1182.1 495.0 1192.5 495.0" stroke-width="2.0" stroke-opacity="0.85"/><path d="M892.5 548.0 C900.8 543.3 923.8 527.3 942.5 520.0 C961.2 512.7 984.2 508.2 1005.0 504.0 C1025.8 499.8 1057.1 496.5 1067.5 495.0" stroke-width="2.0" stroke-opacity="0.85"/><path d="M942.5 488.8 C947.7 490.8 960.8 497.9 973.8 501.0 C986.8 504.1 1002.4 506.7 1020.6 507.5 C1038.8 508.3 1072.6 506.2 1083.0 506.0" stroke-width="2.0" stroke-opacity="0.85"/><path d="M1030.0 434.0 C1034.2 434.5 1043.5 434.2 1055.0 437.0 C1066.5 439.8 1085.3 446.0 1098.8 451.0 C1112.3 456.0 1126.6 462.3 1136.0 467.0 C1145.4 471.7 1151.8 477.0 1155.0 479.0" stroke-width="2.0" stroke-opacity="0.85"/><path d="M989.0 520.0 C994.3 515.8 1007.5 503.8 1020.6 495.0 C1033.7 486.2 1054.5 473.2 1067.5 467.0 C1080.5 460.8 1090.5 458.6 1098.8 457.5 C1107.1 456.4 1114.4 460.1 1117.5 460.6" stroke-width="2.0" stroke-opacity="0.85"/><path d="M1251.9 366.9 C1259.7 367.9 1286.8 367.3 1298.8 373.0 C1310.8 378.7 1316.0 389.0 1323.8 401.0 C1331.6 413.0 1338.8 431.4 1345.6 445.0 C1352.4 458.6 1360.8 472.1 1364.4 482.5 C1368.1 492.9 1367.0 503.3 1367.5 507.5" stroke-width="2.0" stroke-opacity="0.85"/><path d="M1192.5 495.0 C1208.1 492.3 1252.7 484.5 1286.0 479.0 C1319.3 473.5 1374.8 464.8 1392.5 462.0" stroke-width="2.0" stroke-opacity="0.85"/><path d="M1223.8 507.5 C1239.4 509.1 1286.3 514.4 1317.5 517.0 C1348.7 519.6 1383.9 520.4 1411.0 523.0 C1438.1 525.6 1468.5 530.9 1480.0 532.5" stroke-width="2.0" stroke-opacity="0.85"/><path d="M1192.5 501.0 C1208.1 502.1 1254.8 505.4 1286.0 507.5 C1317.2 509.6 1347.7 511.7 1380.0 513.8 C1412.3 515.9 1463.3 519.0 1480.0 520.0" stroke-width="2.0" stroke-opacity="0.85"/><path d="M1261.0 520.0 C1267.8 523.1 1290.0 532.5 1302.0 538.8 C1314.0 545.0 1324.2 550.8 1333.0 557.5 C1341.8 564.2 1351.3 575.4 1355.0 579.0" stroke-width="2.0" stroke-opacity="0.85"/><path d="M1317.5 507.5 C1320.1 512.7 1329.4 528.4 1333.0 538.8 C1336.6 549.2 1338.0 564.8 1339.0 570.0" stroke-width="2.0" stroke-opacity="0.85"/><path d="M1374.0 470.0 C1369.8 478.8 1356.3 506.3 1349.0 523.0 C1341.7 539.7 1333.2 562.2 1330.0 570.0" stroke-width="2.0" stroke-opacity="0.85"/><path d="M1380.0 507.5 C1390.4 508.6 1425.8 511.2 1442.5 513.8 C1459.2 516.4 1473.8 521.5 1480.0 523.0" stroke-width="2.0" stroke-opacity="0.85"/><path d="M1150.0 470.0 C1155.0 471.7 1170.0 476.7 1180.0 480.0 C1190.0 483.3 1198.3 486.7 1210.0 490.0 C1221.7 493.3 1243.3 498.3 1250.0 500.0" stroke-width="2.0" stroke-opacity="0.85"/><path d="M1100.0 480.0 C1106.7 481.3 1126.7 486.0 1140.0 488.0 C1153.3 490.0 1173.3 491.3 1180.0 492.0" stroke-width="2.0" stroke-opacity="0.85"/><path d="M930.0 530.0 C940.0 527.5 970.0 520.0 990.0 515.0 C1010.0 510.0 1030.0 504.2 1050.0 500.0 C1070.0 495.8 1090.0 492.5 1110.0 490.0 C1130.0 487.5 1160.0 485.8 1170.0 485.0" stroke-width="2.0" stroke-opacity="0.85"/><path d="M1299.0 370.0 C1303.0 373.3 1315.2 381.3 1323.0 390.0 C1330.8 398.7 1339.0 412.1 1345.5 422.0 C1352.0 431.9 1358.2 438.8 1362.0 449.6 C1365.8 460.4 1366.7 477.5 1368.0 486.7 C1369.3 495.9 1369.7 501.9 1370.0 505.0" stroke-width="1.8" stroke-opacity="0.80"/><path d="M1282.6 397.8 C1287.5 402.1 1304.1 415.0 1312.0 423.7 C1319.9 432.4 1325.3 441.1 1330.0 450.0 C1334.7 458.9 1338.0 468.7 1340.0 477.0 C1342.0 485.3 1341.7 496.2 1342.0 500.0" stroke-width="1.8" stroke-opacity="0.80"/><path d="M1267.8 407.0 C1270.8 409.8 1280.1 416.0 1286.0 423.7 C1291.9 431.4 1298.7 442.5 1303.0 453.0 C1307.3 463.5 1310.0 478.0 1312.0 486.7 C1314.0 495.4 1314.5 501.9 1315.0 505.0" stroke-width="1.8" stroke-opacity="0.80"/><path d="M1090.0 449.6 C1094.6 451.5 1108.5 455.5 1117.8 460.7 C1127.0 465.9 1138.5 475.3 1145.5 481.0 C1152.5 486.7 1157.6 492.7 1160.0 495.0" stroke-width="1.8" stroke-opacity="0.80"/><path d="M1090.0 460.7 C1096.2 461.9 1114.7 463.7 1127.0 468.0 C1139.3 472.3 1155.2 482.2 1164.0 486.7 C1172.8 491.2 1177.3 493.6 1180.0 495.0" stroke-width="1.8" stroke-opacity="0.80"/><path d="M1090.0 481.0 C1099.2 482.8 1127.0 489.2 1145.5 492.0 C1164.0 494.8 1185.2 496.5 1201.0 497.8 C1216.8 499.1 1233.5 499.6 1240.0 500.0" stroke-width="1.8" stroke-opacity="0.80"/><path d="M1100.0 454.0 C1099.7 458.3 1098.5 471.2 1098.0 480.0 C1097.5 488.8 1097.2 502.5 1097.0 507.0" stroke-width="1.8" stroke-opacity="0.80"/><path d="M1100.0 460.0 C1100.7 462.5 1102.9 470.2 1104.0 475.0 C1105.1 479.8 1106.2 486.2 1106.6 488.5" stroke-width="1.8" stroke-opacity="0.80"/><path d="M1253.0 366.0 C1256.7 365.3 1267.3 361.0 1275.0 361.7 C1282.7 362.4 1295.0 368.6 1299.0 370.0" stroke-width="1.8" stroke-opacity="0.80"/><path d="M1151.0 353.0 C1153.3 351.7 1160.2 346.5 1165.0 345.0 C1169.8 343.5 1177.5 344.2 1180.0 344.0" stroke-width="1.8" stroke-opacity="0.80"/><path d="M1200.0 500.0 C1205.0 495.0 1221.7 480.0 1230.0 470.0 C1238.3 460.0 1244.7 450.0 1250.0 440.0 C1255.3 430.0 1260.0 415.0 1262.0 410.0" stroke-width="1.8" stroke-opacity="0.80"/><path d="M1160.0 470.0 C1164.2 467.5 1175.8 458.7 1185.0 455.0 C1194.2 451.3 1205.0 448.0 1215.0 448.0 C1225.0 448.0 1240.0 453.8 1245.0 455.0" stroke-width="1.8" stroke-opacity="0.80"/><path d="M960.0 470.0 C964.2 471.7 976.7 477.3 985.0 480.0 C993.3 482.7 1000.8 484.8 1010.0 486.0 C1019.2 487.2 1035.0 486.8 1040.0 487.0" stroke-width="1.8" stroke-opacity="0.80"/><path d="M1380.0 470.0 C1383.3 472.5 1393.3 480.0 1400.0 485.0 C1406.7 490.0 1413.3 495.8 1420.0 500.0 C1426.7 504.2 1436.7 508.3 1440.0 510.0" stroke-width="1.8" stroke-opacity="0.80"/></g><path d="M568.0 1066.0 C570.3 1056.7 576.5 1028.8 582.0 1010.0 C587.5 991.2 593.7 975.0 601.0 953.0 C608.3 931.0 617.5 900.8 626.0 878.0 C634.5 855.2 642.5 837.3 652.0 816.0 C661.5 794.7 672.2 766.5 683.0 750.0 C693.8 733.5 705.2 727.0 717.0 717.0 C728.8 707.0 741.7 698.8 754.0 690.0 C766.3 681.2 778.7 674.2 791.0 664.0 C803.3 653.8 815.7 640.0 828.0 629.0 C840.3 618.0 853.0 607.0 865.0 598.0 C877.0 589.0 887.8 582.2 900.0 575.0 C912.2 567.8 924.3 560.8 938.0 555.0 C951.7 549.2 967.2 544.7 982.0 540.0 C996.8 535.3 1012.2 531.3 1027.0 527.0 C1041.8 522.7 1055.5 517.7 1071.0 514.0 C1086.5 510.3 1102.3 506.2 1120.0 505.0 C1137.7 503.8 1160.2 505.7 1177.0 507.0 C1193.8 508.3 1206.2 510.2 1221.0 513.0 C1235.8 515.8 1245.7 515.2 1266.0 524.0 C1286.3 532.8 1321.8 556.7 1343.0 566.0 C1364.2 575.3 1374.5 575.2 1393.0 580.0 C1411.5 584.8 1434.5 590.0 1454.0 595.0 C1473.5 600.0 1491.5 603.3 1510.0 610.0 C1528.5 616.7 1547.3 626.2 1565.0 635.0 C1582.7 643.8 1601.5 652.3 1616.0 663.0 C1630.5 673.7 1640.0 687.0 1652.0 699.0 C1664.0 711.0 1678.0 723.3 1688.0 735.0 C1698.0 746.7 1704.0 757.3 1712.0 769.0 C1720.0 780.7 1729.7 791.5 1736.0 805.0 C1742.3 818.5 1746.0 834.2 1750.0 850.0 C1754.0 865.8 1755.8 881.7 1760.0 900.0 C1764.2 918.3 1768.3 943.3 1775.0 960.0 C1781.7 976.7 1790.0 989.2 1800.0 1000.0 C1810.0 1010.8 1824.2 1016.5 1835.0 1025.0 C1845.8 1033.5 1857.5 1044.2 1865.0 1051.0 C1872.5 1057.8 1877.5 1063.5 1880.0 1066.0 L1880 1070 L560 1070 Z" fill="#fff"/><g fill="none" stroke="#000" stroke-linecap="round"><path d="M1232.0 536.0 C1234.0 537.7 1242.0 544.3 1244.0 546.0" stroke-width="2" stroke-opacity="0.85"/><path d="M1250.0 540.0 C1252.0 542.0 1258.7 547.7 1262.0 552.0 C1265.3 556.3 1268.7 563.7 1270.0 566.0" stroke-width="2.2" stroke-opacity="0.85"/><path d="M1272.0 528.0 C1274.0 530.3 1282.0 539.7 1284.0 542.0" stroke-width="2" stroke-opacity="0.8"/><path d="M1276.0 560.0 C1277.0 563.0 1281.0 575.0 1282.0 578.0" stroke-width="2.2" stroke-opacity="0.8"/><path d="M1296.0 530.0 C1297.7 533.0 1304.3 545.0 1306.0 548.0" stroke-width="1.8" stroke-opacity="0.8"/><path d="M1304.0 556.0 C1305.0 558.3 1309.0 567.7 1310.0 570.0" stroke-width="1.8" stroke-opacity="0.75"/><path d="M1325.0 562.0 C1325.5 564.7 1327.5 575.3 1328.0 578.0" stroke-width="1.5" stroke-opacity="0.7"/><path d="M1218.0 522.0 C1219.7 523.3 1226.3 528.7 1228.0 530.0" stroke-width="1.5" stroke-opacity="0.7"/><path d="M1490.0 604.0 C1493.3 605.7 1506.7 612.3 1510.0 614.0" stroke-width="1.5" stroke-opacity="0.6"/><path d="M1500.0 612.0 C1504.2 614.3 1520.8 623.7 1525.0 626.0" stroke-width="1.5" stroke-opacity="0.6"/><path d="M1440.0 582.0 C1443.3 583.3 1456.7 588.7 1460.0 590.0" stroke-width="1.5" stroke-opacity="0.5"/><path d="M1720.0 835.0 C1722.0 839.5 1730.0 857.5 1732.0 862.0" stroke-width="2" stroke-opacity="0.5"/><path d="M1738.0 858.0 C1739.7 862.5 1746.3 880.5 1748.0 885.0" stroke-width="1.5" stroke-opacity="0.45"/><path d="M1765.0 1020.0 C1768.3 1022.7 1781.7 1033.3 1785.0 1036.0" stroke-width="2" stroke-opacity="0.5"/><path d="M1790.0 1040.0 C1793.7 1043.3 1808.3 1056.7 1812.0 1060.0" stroke-width="1.5" stroke-opacity="0.5"/></g><ellipse cx="313.5" cy="699" rx="166.5" ry="166" fill="none" stroke="#e8e8e8" stroke-width="1" stroke-dasharray="3 1"/></svg></div>
<div id="vscroll" class="abs"></div>
<div id="status" class="abs">
  <span class="abs" style="left:6px;top:1px;font-size:12.9px;color:#e0e0e0;white-space:nowrap">60,9%</span>
  <div class="abs" style="left:48px;top:0;width:1px;height:14px;background:#4a4a4a"></div>
  <span class="abs" style="left:76px;top:1px;font-size:12.5px;color:#d6d6d6;white-space:nowrap">Док: 103,4M/129,2M</span>
  <svg class="abs" style="left:222px;top:4px" width="6" height="10" viewBox="0 0 6 10"><path d="M1 1 L5 5 L1 9" stroke="#cfcfcf" stroke-width="1.2" fill="none"/></svg>
  <div class="abs" style="left:233px;top:0;width:1634px;height:14px;background:#4b4b4b"></div>
  <svg class="abs" style="left:241px;top:4px" width="6" height="10" viewBox="0 0 6 10"><path d="M5 1 L1 5 L5 9" stroke="#8a8a8a" stroke-width="1.2" fill="none"/></svg>
  <div class="abs" style="left:842px;top:2px;width:350px;height:12px;background:#6a6a6a"></div>
  <svg class="abs" style="left:1852px;top:4px" width="6" height="10" viewBox="0 0 6 10"><path d="M1 1 L5 5 L1 9" stroke="#8a8a8a" stroke-width="1.2" fill="none"/></svg>
</div>
<div id="panel" class="abs" style="left:1473px;top:132px;width:439px;height:374px;background:#535353;border-radius:3px 3px 0 0;overflow:hidden"><div class="abs" style="left:0;top:0;width:439px;height:14px;background:#474747"></div><svg class="abs" style="left:407px;top:4px" width="9" height="7" viewBox="0 0 9 7"><path d="M4 0 L0 3.5 L4 7 Z M9 0 L5 3.5 L9 7 Z" fill="#c8c8c8"/></svg><svg class="abs" style="left:426px;top:3px" width="8" height="8" viewBox="0 0 8 8"><path d="M1 1 L7 7 M7 1 L1 7" stroke="#d0d0d0" stroke-width="1.8"/></svg><div class="abs" style="left:0;top:14px;width:439px;height:28px;background:#474747"></div><div class="abs" style="left:2px;top:15px;width:48px;height:27px;background:#4b4b4b"></div><div class="abs" style="left:51px;top:15px;width:69px;height:27px;background:#4b4b4b"></div><div class="abs" style="left:121px;top:14px;width:63px;height:29px;background:#535353"></div><span class="abs" style="left:11px;top:21px;font-size:11.1px;font-weight:bold;color:#a8a8a8">Слои</span><span class="abs" style="left:61px;top:21px;font-size:11.1px;font-weight:bold;color:#a8a8a8">Контуры</span><span class="abs" style="left:131px;top:21px;font-size:11.2px;font-weight:bold;color:#f0f0f0">Каналы</span><svg class="abs" style="left:421px;top:24px" width="11" height="8" viewBox="0 0 11 8"><path d="M0 0.5H11M0 2.8H11M0 5.1H11M0 7.4H11" stroke="#c4c4c4" stroke-width="1"/></svg><div class="abs" style="left:3px;top:47px;width:419px;height:28px;background:#535353;border-bottom:1px solid #474747"></div><div class="abs" style="left:7px;top:54px;width:12px;height:14px;border:1px solid #5c5c5c;border-top-color:#545454;border-right-color:#5c5c5c"></div><div class="abs" style="left:26px;top:50px;width:32px;height:23px;background:#2a2a2a;border:1px solid #3e3e3e;overflow:hidden"><svg width="31" height="23" viewBox="0 0 31 23"><rect width="31" height="23" fill="#3a2622"/><path d="M11 23 C11 18 12 16 14 15 C12 12 12 7 13 4 C14 1.5 17 1.5 18.5 4 C20 7 19.5 12 18 15 C20 16 21 18 21 23 Z" fill="#e8c8a8"/><path d="M12.5 5 C13.5 1.5 18 1.5 19 5 L19.5 14 L17 12 L14 12 L11.5 14 Z" fill="#f2dba0"/><path d="M9 23 C9.5 19.5 12 18 15.5 18 C19 18 21.5 19.5 22 23 Z" fill="#f0e0d8"/></svg></div><span class="abs" style="left:64px;top:54px;font-size:12.4px;color:#e4e4e4;white-space:nowrap">RGB</span><span class="abs" style="left:379px;top:55px;font-size:10.2px;color:#d4d4d4">Ctrl+2</span><div class="abs" style="left:3px;top:75px;width:419px;height:28px;background:#535353;border-bottom:1px solid #474747"></div><div class="abs" style="left:7px;top:82px;width:12px;height:14px;border:1px solid #5c5c5c;border-top-color:#545454;border-right-color:#5c5c5c"></div><div class="abs" style="left:26px;top:78px;width:32px;height:23px;background:#2a2a2a;border:1px solid #3e3e3e;overflow:hidden"><svg width="31" height="23" viewBox="0 0 31 23"><rect width="31" height="23" fill="#3c3c3c"/><path d="M9 23 C9.5 19.5 12 18 13.5 17 C12 13 12 7 13.5 4.5 C15 2 17.5 2 19 4.5 C20.5 7 20.5 13 19 17 C20.5 18 22.5 19.5 23 23 Z" fill="#dcdcdc"/><path d="M14 8 L15 14 M17 8 L16.5 14" stroke="#777" stroke-width="0.8"/></svg></div><span class="abs" style="left:64px;top:82px;font-size:12.4px;color:#e4e4e4;white-space:nowrap">Красный</span><span class="abs" style="left:379px;top:83px;font-size:10.2px;color:#d4d4d4">Ctrl+3</span><div class="abs" style="left:3px;top:104px;width:419px;height:28px;background:#535353;border-bottom:1px solid #474747"></div><div class="abs" style="left:7px;top:111px;width:12px;height:14px;border:1px solid #5c5c5c;border-top-color:#545454;border-right-color:#5c5c5c"></div><div class="abs" style="left:26px;top:107px;width:32px;height:23px;background:#2a2a2a;border:1px solid #3e3e3e;overflow:hidden"><svg width="31" height="23" viewBox="0 0 31 23"><rect width="31" height="23" fill="#333333"/><path d="M9 23 C9.5 19.5 12 18 13.5 17 C12 13 12 7 13.5 4.5 C15 2 17.5 2 19 4.5 C20.5 7 20.5 13 19 17 C20.5 18 22.5 19.5 23 23 Z" fill="#dcdcdc"/><path d="M14 8 L15 14 M17 8 L16.5 14" stroke="#777" stroke-width="0.8"/></svg></div><span class="abs" style="left:64px;top:111px;font-size:12.4px;color:#e4e4e4;white-space:nowrap">Зеленый</span><span class="abs" style="left:379px;top:112px;font-size:10.2px;color:#d4d4d4">Ctrl+4</span><div class="abs" style="left:3px;top:133px;width:419px;height:28px;background:#535353;border-bottom:1px solid #474747"></div><div class="abs" style="left:7px;top:140px;width:12px;height:14px;border:1px solid #5c5c5c;border-top-color:#545454;border-right-color:#5c5c5c"></div><div class="abs" style="left:26px;top:136px;width:32px;height:23px;background:#2a2a2a;border:1px solid #3e3e3e;overflow:hidden"><svg width="31" height="23" viewBox="0 0 31 23"><rect width="31" height="23" fill="#2e2e2e"/><path d="M9 23 C9.5 19.5 12 18 13.5 17 C12 13 12 7 13.5 4.5 C15 2 17.5 2 19 4.5 C20.5 7 20.5 13 19 17 C20.5 18 22.5 19.5 23 23 Z" fill="#dcdcdc"/><path d="M14 8 L15 14 M17 8 L16.5 14" stroke="#777" stroke-width="0.8"/></svg></div><span class="abs" style="left:64px;top:140px;font-size:12.4px;color:#e4e4e4;white-space:nowrap">Синий</span><span class="abs" style="left:379px;top:141px;font-size:10.2px;color:#d4d4d4">Ctrl+5</span><div class="abs" style="left:3px;top:161px;width:419px;height:28px;background:#6a6a6a;border-bottom:1px solid #474747"></div><svg class="abs" style="left:6px;top:170px" width="14" height="10" viewBox="0 0 14 10"><path d="M1 5 C3.5 1 10.5 1 13 5 C10.5 9 3.5 9 1 5 Z" fill="none" stroke="#e0e0e0" stroke-width="1.6"/><circle cx="7" cy="5" r="2" fill="#e0e0e0"/></svg><div class="abs" style="left:26px;top:164px;width:32px;height:23px;background:#2a2a2a;border:1px solid #3e3e3e;overflow:hidden"><svg width="31" height="23" viewBox="0 0 31 23"><rect width="31" height="23" fill="#000"/><path d="M8 23 C8.5 19 11 17.5 12.5 16.5 C11.5 13 11.5 7 13 4.5 C14.5 2 17.5 2 19 4.5 C20.5 7 20.5 13 19.5 16.5 C21 17.5 23.5 19 24 23 Z" fill="#fff"/></svg></div><span class="abs" style="left:64px;top:168px;font-size:12.4px;color:#e4e4e4;white-space:nowrap">Красный копия</span><span class="abs" style="left:379px;top:169px;font-size:10.2px;color:#d4d4d4">Ctrl+6</span><div class="abs" style="left:422px;top:42px;width:17px;height:294px;background:#535353;border-left:1px solid #4e4e4e"></div><div class="abs" style="left:0;top:336px;width:439px;height:1px;background:#474747"></div><div class="abs" style="left:0;top:337px;width:439px;height:30px;background:#555555"></div><svg class="abs" style="left:288px;top:345px" width="14" height="14" viewBox="0 0 14 14"><circle cx="7" cy="7" r="5.5" fill="none" stroke="#cfcfcf" stroke-width="1.5" stroke-dasharray="2 2"/></svg><div class="abs" style="left:321px;top:346px;width:16px;height:12px;background:#b4b4b4;border-radius:1px"></div><div class="abs" style="left:325.5px;top:348.5px;width:7px;height:7px;border-radius:50%;background:#6a6a6a"></div><svg class="abs" style="left:358px;top:344px" width="14" height="15" viewBox="0 0 14 15"><path d="M1 1.5 H12.5 V13.5 H6 L1 8.5 Z M1 8.5 H6 V13.5" fill="none" stroke="#d6d6d6" stroke-width="1.6"/></svg><svg class="abs" style="left:391px;top:343px" width="14" height="16" viewBox="0 0 14 16"><path d="M1 3 H13 M5 3 V1 H9 V3 M2.5 3 V15 H11.5 V3 M5 5.5 V13 M7 5.5 V13 M9 5.5 V13" fill="none" stroke="#d6d6d6" stroke-width="1.4"/></svg><div class="abs" style="left:0;top:367px;width:439px;height:2px;background:#3e3e3e"></div><div class="abs" style="left:0;top:369px;width:439px;height:5px;background:#4f4f4f"></div></div>
</body></html>
